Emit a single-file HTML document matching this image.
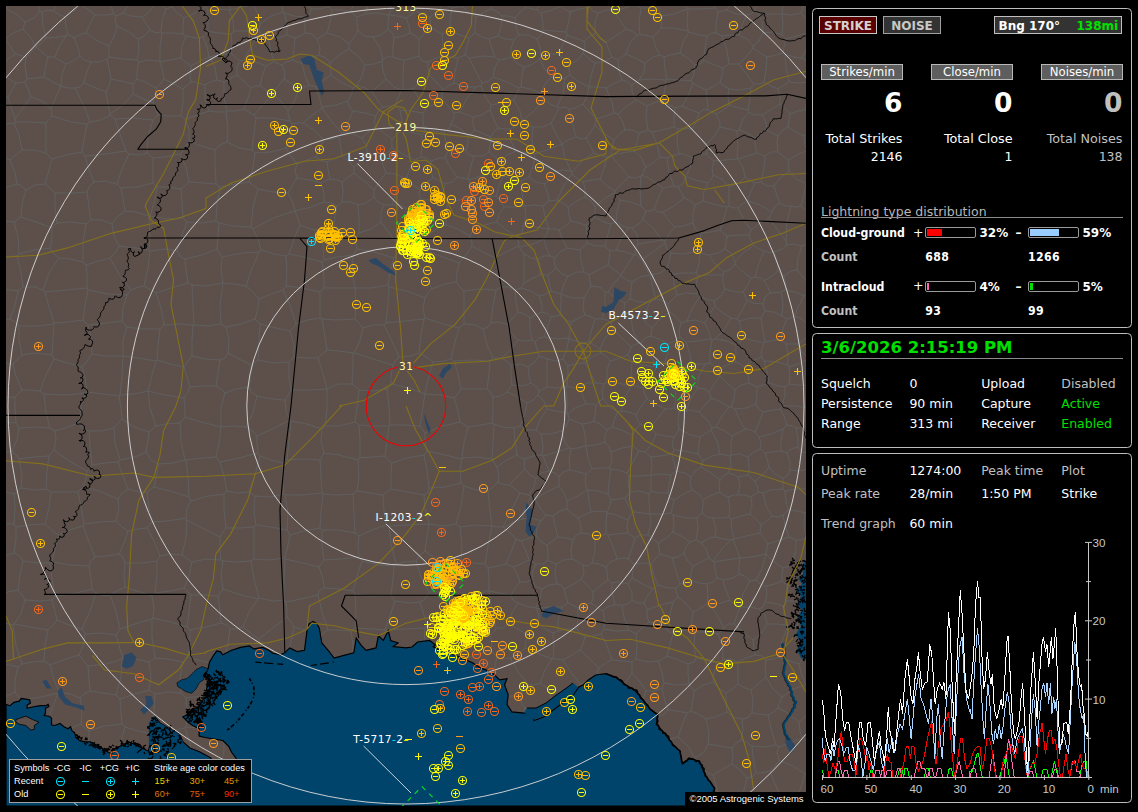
<!DOCTYPE html>
<html><head><meta charset="utf-8"><title>Lightning</title>
<style>
html,body{margin:0;padding:0;background:#000;}
body{width:1138px;height:812px;position:relative;overflow:hidden;font-family:'DejaVu Sans','Liberation Sans',sans-serif;}
.t{position:absolute;white-space:nowrap;line-height:1;}
.b{position:absolute;}
.btn{text-align:center;white-space:nowrap;}
.hr{position:absolute;height:1px;background:#8c8c8c;}
#map{position:absolute;left:6px;top:6px;}
#legend{position:absolute;left:9px;top:759px;width:241px;height:42px;background:#000;border:1px solid #a0a0a0;}
#copy{position:absolute;left:685px;top:792px;width:121px;height:14px;background:#000;}
</style></head><body>
<svg id="map" width="800" height="800" viewBox="6 6 800 800">
<rect x="6" y="6" width="800" height="800" fill="#5d504b"/>
<path d="M248 696L234 694L223 693M248 696L250 712L252 727M252 727L238 730L224 736M224 736L220 731L215 729M215 729L220 711L223 693M5 39L-0 37L-5 36M5 39L10 46L15 54M15 54L5 61L-4 69M221 623L220 610L218 596M221 623L206 627L190 630M218 596L205 595L191 595M191 595L189 612L187 627M190 630L187 627M230 629L236 629L243 627M230 629L227 625L221 623M243 627L249 612L258 599M218 596L223 589M223 589L241 595L258 599M287 617L287 610L286 602M287 617L273 628L259 639M259 639L252 634L243 627M259 598L258 599M259 598L273 601L284 600M284 600L286 602M230 629L228 643L225 658M225 658L239 663L254 667M259 639L262 650L265 657M254 667L259 662L265 657M314 664L301 663L287 662M314 664L316 650L322 634M322 634L308 631L294 627M294 627L291 642L286 661M286 661L287 662M287 617L292 623L294 627M265 657L277 658L286 661M250 695L252 682L254 667M250 695L265 693L284 695M284 695L287 680L287 662M324 731L325 714L323 696M324 731L321 735M290 702L307 699L323 696M290 702L289 714L285 728M285 728L302 733L321 735M323 696L323 696M290 702L285 699L284 695M314 664L315 665M323 696L318 682L315 665M259 757L261 744L261 733M259 757L274 766L289 774M289 774L294 767M294 767L287 750L283 730M261 733L272 731L283 730M248 696L250 695M252 727L256 729L261 733M285 728L283 730M287 790L308 797L325 800M287 790L289 781L289 774M294 767L309 761L321 757M325 800L322 779L321 757M359 766L357 746L354 729M359 766L359 766M324 731L337 730L354 729M321 735L323 745L322 756M359 766L340 760L322 756M321 757L322 756M357 831L358 815L357 798M325 824L325 812L325 800M325 800L338 796L351 791M357 798L354 794L351 791M290 832L286 813L283 795M287 790L283 795M325 800L325 800M359 766L356 778L351 791M610 792L608 780L604 769M610 792L622 789L629 789M629 789L636 783L643 774M643 774L627 768L609 764M604 769L609 764M549 691L552 702L554 712M549 691L561 691L576 689M554 712L559 715L566 714M566 714L572 710L576 706M576 706L576 698L576 689M620 709L626 725L632 742M620 709L613 705M632 742L626 745L617 748M617 748L608 740L596 729M596 729L597 725L599 717M599 717L606 711L613 705M127 327L123 340L123 356M127 327L122 321M123 356L123 356M123 356L106 356L92 354M92 354L91 338L88 325M122 321L107 323L88 325M49 456L33 457L19 459M49 456L47 472L46 489M19 459L22 475L21 488M46 489L35 490L21 488M193 763L187 768M193 763L190 744L185 728M187 768L170 764L155 763M154 761L155 763M154 761L155 749L155 735M185 728L171 731L155 735M125 727L120 743L116 763M125 727L138 731L153 734M116 763L119 767M119 767L135 763L154 761M153 734L155 735M188 657L183 662M188 657L201 661L216 664M183 662L180 677L181 693M216 664L217 677L220 692M220 692L202 696L186 698M181 693L186 698M225 658L220 661L216 664M190 630L190 643L188 657M155 658L168 659L183 662M155 658L149 662M149 662L151 677L149 690M149 690L155 694M155 694L168 692L181 693M223 693L220 692M215 729L201 728L186 727M186 727L187 714L186 698M185 728L186 727M153 734L154 712L155 694M95 557L91 561L89 566M95 557L89 542L83 526M83 526L72 529L59 535M59 535L55 549L52 562M89 566L71 565L52 562M155 658L152 637L152 619M187 627L171 622L153 618M152 619L153 618M5 39L15 32L23 29M6 9L2 12L-4 16M6 9L16 14L25 22M23 29L25 22M26 57L32 51L36 47M26 57L19 55L15 54M23 29L31 38L36 47M27 79L25 66L26 57M27 79L36 78L44 77M48 57L45 69L44 77M48 57L44 54L36 47M36 47L36 47M6 9L6 -0L10 -8M433 362L428 358L419 353M433 362L428 379L425 394M419 353L411 356L399 357M391 384L409 388L425 394M391 384L391 376L393 365M393 365L396 360L399 357M425 394L425 394M387 389L389 407L390 425M387 389L391 384M390 425L404 425L420 426M425 394L422 412L420 426M123 356L138 358L156 361M148 391L148 391M148 391L134 394L120 395M123 356L122 377L120 395M148 391L152 375L156 361M160 329L158 346L157 360M160 329L142 329L127 327M156 361L157 360M27 79L25 82M44 77L51 81L61 86M61 86L55 99L51 109M25 82L28 89L31 97M51 109L42 101L31 97M260 324L276 328L290 331M260 324L255 319M290 331L294 327L296 324M296 324L290 305L283 290M283 290L269 295L259 299M255 319L258 308L259 299M160 329L164 325M184 367L170 364L157 360M184 367L189 360L192 356M192 356L192 341L193 325M164 325L180 324L193 325M354 353L360 341L363 328M354 353L373 359L393 365M399 357L391 339L384 325M363 328L373 325L384 325M372 92L378 101L383 107M372 92L378 86L386 79M395 105L391 106L383 107M395 105L399 96L401 90M401 90L394 87L386 79M395 105L400 110M413 88L419 99L427 107M413 88L407 90L403 89M427 107L423 113M403 89L401 90M400 110L411 111L423 113M413 88L422 82L430 76M427 107L436 104L442 100M442 100L442 95L443 90M430 76L437 83L443 90M285 558L288 545L290 535M285 558L268 560L254 559M290 535L287 530M287 530L271 527L256 525M256 525L254 527M254 527L254 541L254 559M285 558L285 559M259 598L254 579L251 561M285 559L284 579L284 600M254 559L251 561M223 589L221 575L223 561M251 561L236 562L223 561M185 460L173 463L158 464M185 460L181 441L180 423M180 423L166 424L156 426M146 452L148 440L149 432M146 452L151 460L158 464M149 432L156 426M147 492L149 509L152 522M147 492L154 487M154 487L170 491L189 497M152 522L167 521L186 518M186 518L187 508L191 501M191 501L189 497M120 460L135 457L146 452M120 460L118 462M128 489L123 476L118 462M128 489L139 492L147 492M158 464L157 474L154 487M186 460L188 477L189 497M186 460L185 460M283 795L270 798L253 798M256 832L255 816L253 798M123 795L137 794L154 790M123 795L125 813L126 828M159 795L154 790M159 795L158 812L154 831M119 767L118 777L117 791M117 791L123 795M155 763L155 775L154 790M89 795L90 813L92 833M89 795L103 792L117 791M187 768L184 781L184 795M184 795L170 796L159 795M56 830L57 815L61 797M89 795L84 793M84 793L71 794L61 797M50 665L54 680L59 692M50 665L66 659L79 655M79 655L84 661L88 666M88 666L89 678L90 691M59 692L71 694L80 698M90 691L85 693L80 698M122 659L107 664L88 666M122 659L121 677L116 695M90 691L103 693L116 695M125 727L122 724M149 690L135 694L120 699M122 724L121 713L120 699M149 662L135 659L123 658M123 658L122 659M120 699L116 695M419 353L421 335L424 319M384 325L386 323M424 319L405 321L386 323M461 389L457 395L454 398M461 389L458 374L454 361M433 362L444 361L451 359M454 398L441 395L425 394M454 361L451 359M461 389L473 389L487 389M487 389L489 374L490 361M454 361L473 360L490 361M464 324L459 328M464 324L464 308L464 291M459 328L443 324L425 318M464 291L460 287L456 282M456 282L445 284L432 289M425 318L423 309L425 298M432 289L428 293L425 298M483 329L487 345L493 358M483 329L475 325L464 324M451 359L455 342L459 328M490 361L493 358M491 323L493 306L496 290M491 323L488 327L483 329M496 290L479 289L464 291M424 319L425 318M411 248L414 247M411 248L421 268L432 289M414 247L435 254L459 263M459 263L457 272L456 282M389 287L388 304L386 323M389 287L407 291L425 298M504 207L500 200L496 196M504 207L499 214L497 222M496 196L485 197L473 198M473 198L473 215L473 231M473 231L484 225L497 222M599 668L590 659L580 650M599 668L596 675L593 682M580 684L585 682L593 682M580 684L570 671L563 660M563 660L572 655L580 650M612 660L607 662L599 668M612 660L622 661L632 662M632 673L632 668L632 662M632 673L621 689L612 703M612 703L604 691L593 682M576 706L586 711L599 717M576 689L580 684M613 705L612 703M359 390L357 407L355 422M359 390L373 391L387 389M389 426L390 425M389 426L373 426L359 425M359 425L355 422M606 800L596 803L583 803M606 800L609 809L615 818M583 803L578 813L576 819M566 714L572 725L576 739M596 729L589 735L581 739M576 739L581 739M617 748L614 757L609 764M604 769L601 769L594 766M581 739L588 753L594 766M606 800L609 795L610 792M583 803L578 799L574 792M574 792L574 783L575 777M594 766L584 773L575 777M669 763L678 764L688 768M669 763L659 766L648 769M688 768L684 783L679 797M648 769L647 772M647 772L654 783L664 797M664 797L672 800M679 797L672 800M702 807L710 804L719 798M702 807L692 802L679 797M694 763L688 768M694 763L702 770L713 775M719 798L716 785L713 775M632 742L640 744M640 744L642 757L648 769M643 774L647 772M629 789L637 799L641 808M641 808L652 801L664 797M515 796L516 797M515 796L502 796L491 797M516 797L512 813L505 830M491 797L492 814L492 833M516 797L524 798M524 798L524 813L528 829M541 776L550 769L559 763M541 776L534 769L525 764M525 764L528 752L533 741M559 748L560 755L559 763M559 748L550 745L543 738M543 738L538 739L533 741M574 792L559 793L544 797M575 777L567 768L559 763M544 797L540 793M540 793L542 785L541 776M511 768L518 767L525 764M511 768L513 782L515 796M524 798L532 795L540 793M576 739L567 744L559 748M546 720L551 718L554 712M546 720L543 730L543 738M667 829L668 814L672 800M702 807L701 814L702 822M14 494L18 491L21 488M14 494L-2 490L-15 486M12 451L-2 454L-16 456M12 451L17 456L19 459M48 630L30 627L14 624M48 630L45 645L44 661M44 661L32 662L22 664M22 664L16 646L13 625M13 625L14 624M14 524L16 527M14 524L-4 523L-23 523M16 527L16 540L14 553M14 553L-1 558L-16 562M14 494L15 508L14 524M51 492L49 507L45 524M51 492L46 489M45 524L29 525L16 527M120 395L119 396M92 354L88 360L82 367M82 367L85 378L87 392M119 396L104 394L87 392M148 391L150 408L156 426M149 432L134 427L122 419M119 396L121 408L122 419M120 460L115 443L114 428M114 428L119 422L122 419M122 321L123 308L127 295M88 325L83 320M83 320L85 305L88 290M88 290L108 294L127 295M40 391L31 390L22 390M40 391L44 394M44 394L46 413L50 428M15 397L20 392L22 390M15 397L15 409L16 423M50 428L35 427L19 428M16 423L19 428M22 355L18 359L13 364M22 355L35 353L52 355M52 355L54 359M54 359L46 375L40 391M13 364L16 376L22 390M54 359L68 363L82 367M87 392L86 393M86 393L67 395L44 394M-19 396L-1 398L15 397M-7 360L1 362L13 364M-21 422L-1 421L16 423M12 451L17 440L19 428M54 450L56 440L55 431M54 450L69 461L87 471M55 431L65 428L79 423M87 471L92 465M92 465L90 447L89 431M89 431L83 429L79 423M49 456L54 450M50 428L55 431M86 393L81 406L79 423M118 462L105 463L92 465M114 428L101 431L89 431M23 561L38 563L50 563M23 561L20 575L18 590M50 563L52 579L55 596M18 590L22 595L25 600M25 600L40 601L52 600M52 600L55 596M59 535L52 531L45 524M52 562L50 563M14 553L20 556L23 561M-15 594L3 593L18 590M89 566L91 579L92 589M92 589L72 594L55 596M-13 622L1 622L13 625M14 624L21 614L25 600M57 620L55 611L52 600M57 620L53 625L48 630M96 593L104 596L110 595M96 593L90 611L82 629M110 595L116 611L120 629M82 629L85 634M85 634L100 633L116 635M116 635L120 629M57 620L69 625L82 629M92 589L96 593M50 665L44 661M79 655L83 646L85 634M123 658L119 646L116 635M152 619L138 623L120 629M125 563L142 563L157 561M125 563L124 576L125 587M125 587L140 592L152 596M157 561L157 575L155 593M152 596L155 593M119 554L123 557L125 563M119 554L124 543L128 531M147 528L138 529L128 531M147 528L154 541L160 556M160 556L157 561M95 557L106 556L119 554M110 595L119 590L125 587M153 618L154 608L152 596M191 595L187 591L184 588M184 588L170 591L155 593M46 38L43 26L42 12M46 38L57 37L66 36M68 34L66 36M68 34L66 27L65 17M65 17L60 15L54 11M42 12L47 10L54 11M25 22L34 18L40 11M36 47L42 43L46 38M40 11L42 12M48 57L55 57M55 57L59 47L66 36M40 11L37 -0L31 -11M61 -15L57 -4L54 11M81 -9L81 -0L81 5M81 5L89 10L95 15M95 15L106 15L114 14M114 14L110 4L108 -6M65 17L74 11L81 5M403 89L403 73L404 60M404 60L412 58L419 56M430 76L428 68L428 62M419 56L422 61L428 62M454 398L458 411L460 422M420 426L425 433M460 422L443 426L425 433M148 391L165 395L184 398M180 423L185 417M185 417L185 409L184 398M186 460L202 458L216 457M216 457L219 443L221 427M185 417L201 422L221 427M184 367L187 377L190 387M190 387L188 392L184 398M192 356L205 359L220 360M226 327L221 324M226 327L229 340L228 353M221 324L209 326L194 325M193 325L194 325M228 353L225 358L220 360M190 387L202 386L216 386M220 360L218 373L216 386M221 427L221 427M221 427L221 408L225 393M216 386L221 389L225 393M84 524L81 507L78 492M84 524L100 522L116 521M116 521L119 508L118 499M118 499L99 491L83 487M78 492L83 487M51 492L63 492L78 492M83 526L84 524M128 531L122 527L116 521M147 528L152 522M128 489L122 493L118 499M87 471L86 479L83 487M25 82L16 83M-4 71L6 77L16 83M17 184L15 173L10 160M17 184L1 189L-15 192M-11 154L1 156L10 160M94 182L89 170L85 156M94 182L105 181L117 184M85 156L105 154L126 151M117 184L122 169L129 154M126 151L129 154M112 224L117 217L125 211M112 224L102 220L91 220M125 211L123 199L121 188M121 188L117 184M91 220L89 207L87 192M87 192L89 187L94 182M121 188L137 187L153 183M153 183L153 172L153 158M153 158L147 153M147 153L139 155L129 154M115 119L120 134L126 151M115 119L133 118L153 120M153 120L148 137L147 153M286 256L289 254M286 256L274 254L261 250M261 250L258 239L253 229M253 229L273 218L295 211M289 254L294 239L300 225M300 225L298 219L295 211M258 189L253 207L251 227M258 189L273 192L288 193M288 193L293 203L295 211M253 229L251 227M295 211L295 211M255 319L241 324L226 327M221 324L220 305L223 283M259 299L251 290L246 286M223 283L234 284L246 286M286 256L287 272L286 286M261 250L259 252M286 286L283 290M259 252L251 271L246 286M758 13L768 14L782 14M758 13L762 21L763 33M782 14L783 24L782 35M782 35L773 32L763 33M737 159L738 145L737 131M737 159L738 159M737 131L739 130M739 130L747 133L755 138M755 138L755 145L757 153M738 159L747 156L757 153M767 130L760 134L755 138M767 130L772 133L778 136M757 153L765 156M765 156L771 152L778 152M778 152L777 142L778 136M258 189L253 185L249 182M288 193L292 186L297 178M249 182L253 167L255 153M286 148L271 152L255 153M286 148L290 155L297 164M297 178L295 171L297 164M295 211L311 207L324 202M297 178L310 180L321 183M324 202L324 193L321 183M355 319L356 302L355 288M355 319L337 320L322 319M355 288L355 288M355 288L338 288L324 288M324 288L320 292M320 292L320 306L320 318M322 319L320 318M363 328L359 323L355 319M388 285L371 288L355 288M388 285L389 287M289 254L304 257L322 262M322 262L324 277L324 288M286 286L302 288L320 292M296 324L308 320L320 318M504 207L514 207L524 206M496 196L499 186L503 176M503 176L512 179L521 181M521 181L522 193L524 206M586 225L578 223L571 221M586 225L587 236L587 243M571 221L565 226L559 230M587 243L582 248L580 250M580 250L574 249L567 248M567 248L562 238L559 230M414 247L426 236L439 227M459 263L467 254L472 246M472 246L472 242L470 236M470 236L458 229L446 225M439 227L446 225M535 157L533 166L529 177M535 157L534 154M534 154L534 153M534 153L527 153L516 151M503 176L502 173M502 173L502 167L501 161M521 181L529 177M516 151L507 155L501 161M383 107L379 110L376 116M376 116L374 122L376 126M376 126L384 133L392 139M400 110L402 121L401 131M392 139L396 135L401 131M423 113L423 122L425 132M425 132L422 135M401 131L410 132L422 135M425 132L434 131L444 133M431 161L439 158L445 158M431 161L427 158L421 157M444 133L446 142L450 150M445 158L447 153L450 150M421 157L422 145L422 135M454 83L455 72L458 58M454 83L466 87L476 87M476 87L481 86M458 58L465 55M482 83L475 70L469 58M482 83L481 86M465 55L469 58M443 90L448 86L454 83M442 56L434 59L428 62M442 56L449 57L458 58M221 560L220 550L220 537M221 560L206 559L192 562M220 537L204 529L187 520M187 520L186 538L182 555M182 555L186 558L192 562M254 527L240 528L226 528M226 528L223 532L220 537M223 561L221 560M184 588L189 576L192 562M224 494L208 496L191 501M224 494L224 510L226 528M186 518L187 520M160 556L170 554L182 555M324 560L340 559L359 557M324 560L321 564L319 567M319 567L323 579L324 588M362 561L359 557M362 561L357 576L353 591M353 591L339 589L324 588M286 602L301 599L318 595M322 634L328 630M328 630L322 612L318 595M285 559L303 563L319 567M318 595L319 591L324 588M259 757L253 762L249 766M253 798L253 798M253 798L249 781L249 766M224 736L224 750L222 761M249 766L236 762L222 761M193 763L204 764L216 766M222 761L216 766M219 830L222 815L224 801M188 799L205 798L219 796M188 799L185 816L185 834M219 796L224 801M253 798L237 801L224 801M184 795L188 799M216 766L216 782L219 796M116 763L101 761L88 757M122 724L104 726L89 731M88 757L89 743L89 731M84 793L82 778L83 761M88 757L83 761M80 698L82 713L81 724M89 731L86 729L81 724M83 761L69 761L56 758M81 724L67 730L54 733M56 758L57 747L54 733M59 692L58 693M58 693L51 711L46 727M46 727L50 729L54 733M18 667L15 680L15 692M18 667L22 664M58 693L41 697L22 700M15 692L17 695L22 700M46 727L37 727L26 726M22 700L23 714L26 726M805 604L797 601L787 601M805 604L800 616L797 626M797 626L793 628L788 626M784 606L787 601M784 606L784 614L786 625M786 625L788 626M539 356L535 362L528 367M539 356L537 349L535 342M535 342L532 340M532 340L524 341L518 340M528 367L521 364L511 365M518 340L510 351L501 358M511 365L505 360L501 358M518 312L512 319L507 324M518 312L525 314L530 318M507 324L511 333L518 340M530 318L530 330L532 340M531 383L523 386L512 385M531 383L529 376L528 367M512 385L511 375L511 365M491 323L498 322L507 324M493 358L501 358M487 389L490 391L493 397M493 397L501 396L507 392M512 385L509 389L507 392M553 659L556 659L563 660M553 659L552 659M549 691L546 687L540 683M552 659L545 670L540 683M546 720L536 715L525 708M525 708L522 704L520 696M520 696L524 689L529 685M540 683L533 685L529 685M552 659L539 654L525 648M529 685L519 673L510 658M510 658L518 654L525 648M553 633L554 645L553 659M553 633L544 628L538 623M538 623L531 629L526 634M526 634L526 642L525 648M362 561L379 565L394 566M394 566L393 579L391 595M353 591L355 594M391 595L372 596L355 594M425 628L427 626M425 628L404 629L385 630M395 601L390 616L385 630M395 601L409 603L420 602M427 626L424 615L420 602M416 561L404 562L396 564M416 561L421 577L429 592M394 566L396 564M391 595L395 601M429 592L425 599L420 602M424 455L427 451M424 455L427 471L429 488M429 488L445 487L461 483M427 451L445 455L462 459M461 483L460 469L462 459M547 359L539 356M547 359L547 374L547 387M531 383L537 387L539 391M547 387L539 391M527 403L516 396L507 392M527 403L533 400L538 395M538 395L539 391M612 660L607 646L601 634M580 650L583 644L585 637M585 637L593 636L601 634M716 114L720 122L720 127M716 114L708 110M692 129L699 137L707 144M692 129L697 121L699 113M720 127L716 134L707 144M708 110L704 109L699 113M643 318L635 317L631 318M643 318L647 309L650 302M650 302L639 302L630 299M623 315L631 318M623 315L624 309L625 303M625 303L630 299M789 367L790 375L789 384M789 367L798 364L809 359M789 384L799 385L806 386M806 386L813 374L819 363M809 359L814 359L819 363M819 446L815 448L809 453M831 472L821 470L810 466M809 453L812 459L810 466M694 763L695 758M695 758L688 746L678 737M669 763L669 752L666 740M678 737L674 738L666 740M640 744L647 740L651 735M651 735L657 737L666 740M632 662L636 659M636 659L637 645L636 634M604 629L601 634M604 629L616 631L629 630M636 634L629 630M695 758L704 752L708 744M708 744L709 733L706 719M687 713L682 725L678 737M687 713L691 711M691 711L698 714L706 719M747 778L741 771L732 764M747 778L752 777L756 773M756 773L753 758L752 746M732 764L733 756L732 748M732 748L736 743L741 740M741 740L746 742L752 746M742 799L744 790L747 778M742 799L732 798L726 800M726 800L719 798M713 775L721 770L732 764M751 808L748 805L742 799M751 808L760 807L773 802M773 802L778 800L781 797M781 797L775 784L770 771M770 771L761 773L756 773M708 744L720 746L732 748M797 797L802 804M797 797L801 787L805 774M802 804L816 805L827 804M805 774L812 771L816 767M781 797L790 797L797 797M770 771L774 767L779 760M779 760L793 766L805 774M802 804L802 815L801 823M830 731L823 737L812 742M812 742L813 755L816 767M511 768L505 763L499 762M533 741L526 738M499 762L512 750L526 738M525 708L522 721L518 732M526 738L521 734L518 732M425 551L427 537L429 524M425 551L438 560L454 565M429 524L429 524M429 524L443 526L456 524M460 527L462 544L461 561M460 527L456 524M454 565L461 561M416 561L420 555L425 551M396 564L391 544L389 526M389 526L408 525L429 524M429 592L441 592L450 590M450 590L452 577L454 565M429 488L428 493L424 495M461 483L464 486M464 486L461 506L456 524M424 495L425 509L429 524M485 564L474 563L461 561M485 564L488 546L492 526M492 526L492 526M492 526L475 525L460 527M464 486L476 490L488 491M488 491L490 510L492 526M359 557L358 545L359 536M389 526L386 525M359 536L372 530L386 525M287 530L288 512L285 495M256 525L254 512L255 496M285 495L284 494M284 494L271 497L255 496M641 808L638 813L637 816M544 797L548 808L550 817M359 766L369 763L383 764M354 729L357 725M357 725L377 729L393 736M383 764L388 750L393 736M434 699L426 716L421 734M434 699L443 701L455 702M455 702L457 713L457 725M457 725L441 731L427 740M421 734L427 740M491 797L490 796M465 829L462 814L459 797M459 797L461 794M490 796L475 797L461 794M751 808L751 816M726 800L723 814L724 828M18 667L-2 662L-19 660M15 692L1 699L-15 704M18 291L23 287M18 291L15 305L10 319M23 287L35 287L43 290M45 292L49 307L54 323M45 292L43 290M19 326L17 323L10 319M19 326L37 326L54 324M54 324L54 323M-10 325L-2 322L10 319M-15 284L3 289L18 291M83 320L68 322L54 323M87 288L88 290M87 288L66 290L45 292M83 262L70 259L59 258M83 262L86 265M59 258L49 273L43 290M87 288L87 276L86 265M22 355L19 340L19 326M52 355L53 338L54 324M52 228L57 223M52 228L36 222L21 217M57 223L55 208L55 193M21 217L22 204L26 190M26 190L35 185L45 184M45 184L51 189L55 193M83 262L83 243L86 224M59 258L53 253L50 248M50 248L52 238L52 228M86 224L72 222L57 223M91 220L86 224M87 192L72 193L55 193M85 156L82 152M82 152L66 155L52 159M52 159L49 170L45 184M-14 257L-0 257L17 256M19 254L17 256M19 254L18 237L14 222M14 222L2 221L-10 219M23 287L21 273L17 256M50 248L34 250L19 254M21 217L14 222M17 184L20 185L26 190M112 224L114 236L119 246M86 265L98 261L110 258M119 246L116 252L110 258M127 295L131 290M110 258L120 276L131 290M410 33L409 26L406 18M410 33L414 35L419 39M419 39L423 35L431 28M416 11L412 14L406 18M416 11L421 14L430 17M430 17L430 22L431 28M442 56L443 44L442 34M419 56L419 47L419 39M442 34L435 30L431 28M758 13L755 11M782 14L782 14M782 14L783 3L782 -11M756 -4L756 4L755 11M493 77L507 82L519 88M493 77L489 81L482 83M491 105L485 96L481 86M491 105L504 102L514 100M519 88L516 95L514 100M510 129L505 129L498 128M510 129L518 125L522 120M498 128L494 120L490 110M491 105L490 110M514 100L520 111L522 120M495 57L492 49L489 39M495 57L499 60M499 60L505 59L511 57M511 57L511 48L514 40M514 40L505 39L498 36M498 36L489 39M493 77L495 67L499 60M469 58L484 56L495 57M416 11L415 3L413 -8M430 17L436 13L443 5M443 5L442 0L440 -5M392 -8L392 4L389 15M389 15L389 15M389 15L398 16L406 18M260 324L259 341L258 360M228 353L241 360L251 365M258 360L251 365M225 393L236 389L249 387M251 365L251 375L249 387M221 427L233 426L246 427M246 427L253 413L257 396M249 387L251 392L257 396M359 390L355 386L352 384M355 422L339 426L325 426M325 426L327 409L327 389M327 389L338 384L352 384M354 353L353 353M322 319L325 337L327 350M327 350L339 351L353 353M353 353L353 367L352 384M320 460L303 459L287 460M320 460L324 453M324 453L321 441L322 429M322 429L307 424L291 421M291 421L289 441L287 460M246 427L253 431L257 436M285 400L272 399L257 396M285 400L286 412L290 420M290 420L274 428L257 436M322 493L321 477L320 460M322 493L303 495L285 495M284 494L282 478L283 463M287 460L283 463M16 83L12 90L8 97M8 97L-3 98L-12 99M31 97L23 108L15 119M8 97L11 107L15 119M55 57L59 60L66 64M61 86L61 86M66 64L62 74L61 86M206 7L195 13L184 18M206 7L204 -0L202 -6M182 -11L176 -3L172 7M184 18L176 12L172 7M136 -8L130 2L123 13M114 14L116 16M123 13L116 16M181 116L168 116L158 115M181 116L183 101L183 89M183 89L172 83L164 79M158 115L155 108L153 103M153 103L155 95L156 88M156 88L161 83L164 79M185 119L181 116M185 119L189 129L189 141M189 141L186 148L180 154M153 120L158 115M180 154L165 157L153 158M209 111L205 99L205 85M209 111L195 116L185 119M205 85L196 82L191 82M191 82L185 87L183 89M133 94L133 89L133 84M133 94L143 99L153 103M133 84L137 79M137 79L145 82L156 88M253 5L258 14L260 24M253 5L241 7L230 10M234 31L233 19L229 10M234 31L246 31L259 29M260 24L259 29M230 10L229 10M255 -3L253 5M283 12L281 -0L282 -9M283 12L271 16L260 24M229 -18L229 -4L230 10M231 34L234 31M231 34L218 33L208 31M208 11L208 22L208 31M208 11L217 9L229 10M231 53L236 58L241 61M231 53L232 45L231 34M241 61L244 60M260 32L251 47L244 60M260 32L259 29M206 7L208 11M299 -10L303 0L311 9M329 -11L330 -3L329 7M311 9L318 9L329 7M351 12L354 1L355 -12M351 12L343 10L332 10M332 10L329 7M362 138L367 133L376 126M362 138L353 134L345 132M376 116L365 113L353 111M345 132L348 122L353 111M372 92L365 88L357 85M357 85L353 88M353 88L352 93L348 101M353 111L349 106L348 101M209 111L216 112L226 112M215 150L201 146L189 141M215 150L220 145L227 142M227 142L228 128L226 112M46 123L46 138L46 153M46 123L29 122L15 122M15 122L14 123M14 123L19 135L22 150M22 150L34 150L46 153M87 124L84 139L82 152M87 124L71 122L52 116M52 159L46 153M52 116L46 123M51 109L52 116M15 119L15 122M-11 128L3 124L14 123M10 160L17 154L22 150M164 325L161 308L156 293M131 290L139 287L144 286M156 293L151 290L144 286M222 257L221 270L223 283M222 257L220 254L217 249M217 249L202 255L185 259M223 283L206 286L192 285M185 259L186 270L188 283M192 285L188 283M223 283L223 283M259 252L242 253L222 257M251 227L233 226L219 223M219 223L218 236L217 249M194 325L193 305L192 285M156 293L171 288L188 283M249 182L236 184L220 187M219 223L216 221M216 221L217 203L220 187M215 150L215 166L216 184M255 153L252 150M227 142L239 148L252 150M220 187L216 184M180 154L186 167L189 182M216 184L204 183L189 182M153 183L157 187M157 187L169 187L181 189M189 182L184 187L181 189M801 13L805 18L812 27M801 13L804 4L805 -7M782 14L792 15L801 13M786 39L782 35M786 39L800 35L811 32M812 27L812 32M811 32L812 32M820 38L816 34L812 32M729 89L724 86L720 82M729 89L728 96L729 105M716 114L722 111L729 105M708 110L707 99L706 90M720 82L714 86L706 90M682 106L691 110L699 113M682 106L688 96L693 83M706 90L698 86L693 83M674 127L678 129M674 127L662 130L652 132M678 129L677 142L679 154M652 132L657 144L660 157M679 154L672 156L667 158M660 157L667 158M675 108L674 118L674 127M675 108L682 106M692 129L684 128L678 129M778 89L780 98L780 104M778 89L771 86L764 82M780 104L772 109L762 115M764 82L760 84L754 84M762 115L754 115L749 112M754 84L751 88M751 88L750 98L748 110M748 110L749 112M790 114L786 109L780 104M790 114L789 120L788 127M767 130L766 122L762 115M788 127L782 131L778 136M739 130L743 119L749 112M729 89L739 90L751 88M729 105L739 108L748 110M720 127L729 129L737 131M738 159L743 167L745 177M765 156L764 168L761 182M761 182L755 183M745 177L749 180L755 183M778 152L784 157L789 160M788 127L794 131L804 136M789 160L798 154L807 151M804 136L805 145L807 151M811 114L813 118L814 125M811 114L805 110M790 114L798 111L805 110M804 136L810 131L814 125M819 178L812 179L806 183M789 160L788 164L789 171M812 153L807 151M806 183L796 179L789 171M761 182L767 186L774 186M789 171L780 178L774 186M772 212L775 206L780 203M772 212L760 205L748 201M755 183L750 193L748 201M774 186L777 196L780 203M297 164L307 160L316 157M321 183L325 181L330 179M330 179L328 169L327 162M316 157L322 161L327 162M354 167L354 173M354 167L347 160L342 156M354 173L347 178L342 182M342 182L337 180L330 179M327 162L333 159L342 156M381 222L381 212L384 205M381 222L392 237L403 250M408 210L410 229L411 247M408 210L401 205L392 205M392 205L384 205M411 247L403 250M411 248L411 247M439 227L429 214L420 202M420 202L414 206L408 210M394 258L397 254L403 250M394 258L390 272L388 285M374 197L378 202L384 205M374 197L366 203L358 205M381 222L371 229L359 233M358 205L359 220L359 233M354 173L364 181L374 190M342 182L343 191L342 202M374 190L374 197M358 205L351 202L342 202M324 202L332 203L337 206M342 202L337 206M544 337L539 338L535 342M544 337L548 326L551 317M530 318L537 314L542 312M542 312L548 314L551 317M572 174L564 185L557 200M572 174L572 172M571 171L572 172M571 171L562 170L556 172M556 172L550 179L544 184M544 184L548 194L549 201M549 201L557 200M568 207L577 201L585 197M568 207L563 203L557 200M583 182L585 188L585 197M583 182L578 179L572 174M594 153L599 155L607 157M594 153L583 160L572 172M607 157L604 169L600 179M600 179L591 180L583 182M535 157L546 166L556 172M534 154L547 150L562 144M562 144L562 144M562 144L565 158L571 171M529 177L536 182L544 184M543 206L535 205L525 206M543 206L549 201M524 206L525 206M571 221L569 215L568 207M543 206L545 217L549 229M549 229L554 229L559 230M611 155L607 157M611 155L611 155M611 155L620 166L629 177M600 179L607 186L615 191M629 177L622 183L615 191M586 225L590 222L595 217M585 197L590 200L595 207M595 217L595 211L595 207M615 191L615 193M595 207L605 198L615 193M473 198L473 197M470 236L473 231M446 225L446 212L448 203M448 203L459 200L473 197M502 173L484 175L469 180M473 197L470 188L469 180M586 138L591 132L595 125M586 138L582 139L576 137M576 137L572 122L569 109M596 119L595 125M596 119L589 111L583 104M583 104L575 108L569 109M594 153L590 145L586 138M611 155L612 147L614 140M614 140L603 133L595 125M562 144L568 140L576 137M516 151L511 141L510 129M501 161L495 157L489 152M498 128L493 133L491 137M489 152L490 145L491 137M468 179L469 180M468 179L471 166L474 156M489 152L483 156L474 156M445 158L450 167L457 177M450 150L458 149L466 150M457 177L462 178L468 179M474 156L469 155L466 150M473 117L465 114L460 112M473 117L473 125L475 130M475 130L468 136M468 136L461 129L451 124M460 112L454 113M454 113L454 117L451 124M490 110L482 115L473 117M476 87L467 98L460 112M491 137L484 134L475 130M466 150L468 144L468 136M444 133L449 128L451 124M442 100L449 107L454 113M381 157L383 165L386 173M381 157L387 153L392 148M392 148L405 155L415 160M386 173L395 174L404 178M415 160L410 168L407 177M407 177L404 178M368 155L374 155L381 157M368 155L360 162L354 167M374 190L379 182L386 173M362 138L366 146L368 155M392 139L392 148M421 157L415 160M392 205L397 189L404 178M323 696L338 696L351 693M357 725L359 711L360 700M351 693L357 695L360 700M19 764L37 762L53 761M19 764L18 779L17 794M18 794L38 793L56 793M18 794L17 794M56 793L55 777L53 761M27 825L22 812L18 794M61 797L56 793M-15 802L2 799L17 794M56 758L53 761M18 763L16 747L17 735M18 763L-1 764L-18 761M17 735L2 730L-11 727M26 726L20 731L17 735M19 764L18 763M826 609L815 604L808 601M808 601L808 595L806 587M806 587L812 584L821 581M547 359L556 361L563 359M563 359L566 351L569 339M544 337L557 339L569 338M569 338L569 339M560 315L556 316L551 317M560 315L566 320L571 322M569 338L570 331L571 322M560 315L561 304L561 294M584 298L572 298L561 294M584 298L583 308L585 315M571 322L577 319L585 315M427 626L440 625L454 625M450 590L458 598L463 602M463 602L461 609L461 618M461 618L457 621L454 625M527 403L525 413L520 426M547 409L544 401L538 395M547 409L540 420L536 430M536 430L527 430L520 426M462 458L476 457L492 459M462 458L464 443L468 427M492 459L493 441L494 424M468 427L481 425L492 423M492 423L494 424M462 459L462 458M497 467L494 462L492 459M497 467L499 476L498 482M488 491L493 487L498 482M460 422L463 424L468 427M427 451L425 442L425 433M497 467L507 460L517 455M514 428L515 442L517 455M514 428L502 427L494 424M493 397L493 411L492 423M520 426L514 428M463 602L476 595L489 590M485 564L488 568M488 568L489 579L489 590M518 603L512 613L508 624M518 603L513 600L511 595M496 628L503 628L508 624M496 628L492 611L489 591M511 595L499 593L489 591M496 628L495 631L490 635M490 635L476 625L461 618M489 591L489 590M504 528L513 522L522 519M504 528L503 527M503 527L511 511L520 493M522 519L525 508L531 497M520 493L529 495M531 497L529 495M498 482L502 484L509 485M492 526L499 527L503 527M509 485L514 488L520 493M546 515L541 521M546 515L540 508L535 499M541 521L532 518L522 519M535 499L531 497M652 328L651 336M652 328L659 320L670 312M651 336L659 339L668 344M668 344L675 341L680 337M680 337L679 331L681 323M670 312L675 316L681 323M641 343L645 338L651 336M641 343L639 343M639 343L633 331L631 318M643 318L646 323L652 328M668 304L670 312M668 304L662 300L656 299M656 299L650 302M657 366L661 362L665 362M657 366L650 355L641 343M665 362L668 352L668 344M687 321L695 320L705 323M687 321L681 323M705 323L709 332L711 339M711 339L697 341L686 342M686 342L680 337M783 53L776 55L767 57M783 53L784 47L786 39M767 57L760 53L753 48M763 33L759 41L753 46M753 48L753 46M767 57L766 70L764 82M754 84L747 75L739 64M753 48L747 56L739 64M720 82L722 76L723 68M723 68L729 64M739 64L734 64L729 64M827 200L816 206L807 211M806 183L804 195L801 206M807 211L801 206M780 203L785 206L791 206M801 206L796 207L791 206M825 392L818 389L808 388M808 388L809 397L809 408M827 408L818 407L809 408M806 386L808 388M809 408L809 408M809 408L807 417L808 424M808 424L814 425L818 429M824 345L817 340L809 336M809 359L802 352L798 344M798 344L802 341L809 336M826 316L817 321L809 326M809 336L809 333L809 326M700 253L704 254L709 255M700 253L699 251M699 251L700 241L701 233M701 233L711 232L720 230M727 236L724 234L720 230M727 236L726 243L725 249M725 249L718 253L709 255M735 262L732 254L725 249M735 262L735 264M709 255L715 264L724 272M735 264L731 269L724 272M700 253L699 264L696 273M699 251L683 254L671 253M667 268L669 262L671 253M667 268L674 274M696 273L684 273L674 274M668 304L673 299L677 295M656 299L653 289L650 275M650 275L660 273L667 268M674 274L674 284L677 295M654 717L663 715L668 710M654 717L649 711L641 708M668 710L665 701L662 688M641 708L643 699L646 691M646 691L655 691L662 688M687 713L677 711L668 710M651 735L651 727L654 717M620 709L631 709L641 708M632 673L640 682L646 691M718 634L723 647L723 660M718 634L705 632L695 632M695 632L694 645L696 658M696 658L705 660L717 663M723 660L717 663M693 612L692 621L691 629M693 612L699 609L707 604M707 604L710 605M710 605L717 615L724 628M724 628L718 634M691 629L695 632M658 661L662 673L664 683M658 661L661 660L667 656M667 656L676 659L688 664M664 683L676 685L689 684M689 684L688 674L688 664M636 659L648 662L658 661M662 688L664 683M673 634L681 631L691 629M673 634L670 645L667 656M696 658L694 662L688 664M691 711L693 699L694 691M694 691L689 684M713 682L703 685L694 691M713 682L714 673L717 663M767 624L761 634L753 640M767 624L765 615L759 609M734 624L745 634L753 640M734 624L737 615L740 607M740 607L750 607L759 609M784 606L773 603L765 602M767 624L777 624L786 625M759 609L763 607L765 602M650 514L650 514M650 514L643 513L635 512M630 492L639 491L649 494M630 492L625 498M625 498L629 507L635 512M650 514L649 502L649 494M706 719L715 717L727 712M713 682L720 689L726 693M726 693L726 704L727 712M741 740L743 730L742 719M742 719L733 717L727 712M773 802L778 818L783 833M355 533L354 514L353 494M355 533L339 530L322 530M320 528L322 530M320 528L321 512L323 494M323 494L337 495L353 494M324 560L322 546L322 530M359 536L355 533M290 535L304 531L320 528M322 493L323 494M357 491L370 493L383 495M357 491L359 477L358 460M391 489L388 491L383 495M391 489L391 474L392 463M385 456L388 460L392 463M385 456L373 457L360 458M360 458L358 460M386 525L384 511L383 495M353 494L357 491M324 453L339 455L358 460M424 495L408 492L391 489M424 455L407 458L392 463M389 426L387 441L385 456M359 425L360 440L360 458M325 426L322 429M227 491L224 476L220 462M227 491L237 493L249 492M249 492L255 475L260 456M220 462L239 458L258 453M258 453L260 456M224 494L227 491M216 457L220 462M255 496L249 492M283 463L271 460L260 456M257 436L257 443L258 453M291 421L290 420M459 797L444 798L431 800M426 832L428 815L431 800M357 798L375 803L389 807M390 827L389 818L389 807M461 764L461 765M461 764L463 750L466 734M461 765L479 765L494 763M466 734L480 732L493 729M496 762L497 745L495 731M496 762L494 763M495 731L493 729M457 725L460 729L466 734M433 759L429 749L427 740M433 759L448 763L461 764M490 796L491 779L494 763M461 794L463 779L461 765M499 762L496 762M518 732L505 731L495 731M520 696L505 696L493 700M493 700L492 713L493 729M389 15L388 23L388 29M410 33L403 36L394 38M394 38L393 34L388 29M404 60L399 59L393 57M394 38L393 46L393 57M469 38L475 33M469 38L460 35L450 31M475 33L475 26L476 17M450 31L450 20L452 8M476 17L468 12L463 7M463 7L457 7L452 8M465 55L467 47L469 38M489 39L482 37L475 33M442 34L450 31M443 5L448 6L452 8M467 -13L464 -2L463 7M519 88L521 87M511 57L517 63L524 67M521 87L522 75L524 67M562 144L556 134L551 123M569 109L565 107L559 108M559 108L555 116L551 123M534 153L532 139L533 127M551 123L543 127L533 127M522 120L523 120M533 127L526 125L523 120M291 390L289 377L289 362M291 390L310 390L327 389M327 389L323 374L318 358M318 358L307 358L294 357M294 357L289 362M258 360L273 363L289 362M285 400L288 395L291 390M327 389L327 389M327 350L321 355L318 358M290 331L294 345L294 357M75 88L80 87L84 83M75 88L84 106L90 122M84 83L96 88L106 92M106 92L108 105L110 114M90 122L101 120L110 115M110 115L110 114M87 124L90 122M61 86L68 88L75 88M133 94L123 105L110 114M111 79L121 81L133 84M111 79L109 86L106 92M115 119L110 115M139 62L137 72L137 79M139 62L148 60L160 61M164 79L162 69L160 62M160 61L160 62M155 4L162 6L166 9M155 4L149 12L142 17M166 9L162 20L161 32M142 17L147 25L150 30M161 32L155 33L150 30M151 -5L153 -0L155 4M172 7L166 9M123 13L131 16L142 17M184 18L183 24L183 34M183 34L171 33L162 33M162 33L161 32M111 79L109 68L107 59M84 83L86 74L91 62M107 59L100 62L91 62M66 64L73 61L80 56M91 62L84 60L80 56M68 34L74 38M80 56L78 48L74 38M95 15L91 22L86 33M74 38L79 35L86 33M138 39L129 32L117 26M138 39L139 51L137 60M137 60L122 59L109 57M117 26L114 37L109 46M109 46L109 51L109 57M116 16L115 21L117 26M150 30L144 36L138 39M139 62L137 60M162 33L160 47L160 61M107 59L109 57M86 33L96 40L109 46M351 12L357 17M365 14L357 17M365 14L371 -1L376 -14M389 15L376 13L365 14M358 31L364 36L373 37M358 31L354 37L349 44M349 44L349 49M349 49L358 56L365 65M373 37L380 48L383 60M365 65L374 64L382 61M382 61L383 60M357 17L357 23L358 31M388 29L381 35L373 37M332 10L330 22L327 33M327 33L340 37L349 44M393 57L386 57L383 60M386 79L383 71L382 61M357 85L362 76L365 65M286 148L290 137L292 124M252 150L254 133L256 118M256 118L273 118L290 121M292 124L290 121M205 85L210 82L217 80M217 80L224 82M226 112L227 111M227 111L224 97L224 82M210 57L221 54L231 53M210 57L215 68L217 80M241 61L237 66L237 75M224 82L229 79L237 75M177 251L165 249L150 251M177 251L181 238L187 222M149 250L150 251M149 250L150 234L149 216M149 216L150 216M150 216L167 219L183 218M183 218L187 222M144 286L148 268L150 251M185 259L181 257L177 251M216 221L201 223L187 222M119 246L135 248L149 250M125 211L136 212L149 216M157 187L154 203L150 216M181 189L182 203L183 218M811 114L823 111L833 107M805 110L807 99L811 85M811 85L821 89L830 91M323 231L328 228L334 227M323 231L323 246L324 260M334 227L345 232L355 239M324 260L337 257L353 255M355 239L356 242L357 249M353 255L357 249M300 225L310 229L323 231M337 206L335 216L334 227M322 262L324 260M359 233L355 239M355 288L352 272L353 255M394 258L374 252L357 249M496 290L501 287M472 246L483 252L495 258M495 258L498 272L501 287M518 312L516 302L515 290M501 287L509 287L515 290M542 312L542 305L539 296M561 294L561 294M561 294L557 293L551 291M539 296L544 295L551 291M515 290L521 288M539 296L531 291L521 288M568 276L564 284L561 294M568 276L562 274L556 268M551 291L549 283L548 275M556 268L553 271L548 275M580 250L581 261L584 272M567 248L560 252L555 258M568 276L577 272L584 272M556 268L554 261L555 258M521 288L524 283M524 283L531 279L540 275M548 275L540 275M684 198L689 200L695 205M684 198L674 206L663 212M695 205L693 214L693 223M693 223L683 226L675 227M663 212L669 221L675 227M665 241L665 243M665 241L669 234L675 227M701 233L695 229L693 223M671 253L667 249L665 243M720 230L724 218L727 207M695 205L703 201M703 201L717 205L727 207M745 177L739 183L729 187M748 201L742 204L738 208M738 208L734 208L729 206M729 187L729 198L729 206M692 158L699 154L706 154M692 158L690 168L686 177M686 177L699 181L708 183M706 154L710 158L714 161M714 161L712 168L713 175M713 175L712 178L708 183M707 144L707 151L706 154M679 154L684 154L692 158M674 186L678 187M674 186L669 172L667 158M678 187L683 184L686 177M678 187L682 194L684 198M703 201L704 191L708 183M737 159L726 160L714 161M729 187L722 179L713 175M727 207L729 206M642 175L641 176M642 175L652 180L663 188M641 176L640 190L641 206M663 188L658 199L654 209M654 209L652 211L646 211M646 211L641 206M634 151L641 157L646 167M634 151L622 153L611 155M646 167L642 175M629 177L636 178L641 176M674 186L667 187L663 188M646 167L653 163L660 157M620 200L615 193M620 200L630 202L641 206M663 212L658 212L654 209M445 184L443 193L443 198M445 184L441 181L433 178M443 198L431 200L421 200M433 178L426 183L420 190M420 190L419 194L421 200M448 203L443 198M457 177L452 182L445 184M431 161L431 171L433 178M420 202L421 200M407 177L413 185L420 190M315 665L333 664L353 661M351 693L352 678L355 665M353 661L355 665M328 630L338 630L351 631M353 661L353 646L351 631M355 594L356 610L355 628M351 631L355 628M385 630L385 630M355 628L372 629L385 630M393 703L390 700L385 698M393 703L409 696L424 690M385 698L388 680L388 664M424 690L422 677L424 664M394 658L388 664M394 658L407 660L422 662M424 664L422 662M393 736L398 731M398 731L397 718L393 703M360 700L373 698L385 698M434 699L431 694L424 690M398 731L410 734L421 734M355 665L370 664L388 664M385 630L390 646L394 658M425 628L424 645L422 662M455 660L456 644L454 625M455 660L438 663L424 664M815 705L812 696L808 687M808 687L813 685M827 620L818 625L809 632M809 632L810 640L812 649M799 664L801 673L806 685M799 664L805 655L812 649M808 687L806 685M805 604L808 601M797 626L803 628L809 632M788 626L782 641L778 657M778 657L787 660L799 664M605 442L609 446L611 452M605 442L605 435L607 430M611 452L622 448L633 446M607 430L612 427M612 427L621 430L632 435M633 446L632 441L632 435M640 424L638 421L636 415M640 424L635 430L632 435M618 412L615 418L612 427M618 412L621 411M636 415L629 412L621 411M665 409L658 418L651 426M665 409L655 404L647 399M651 426L647 427L640 424M636 415L640 408L647 399M665 409L670 409L674 408M652 380L648 383L643 388M652 380L665 385L675 389M675 389L676 400L674 408M647 399L644 392L643 388M589 342L591 332L595 319M589 342L594 345L600 349M600 349L605 338L613 330M602 319L595 319M602 319L607 320L611 323M611 323L613 330M569 339L576 341L582 343M582 343L589 342M585 315L589 316L595 319M639 343L634 345L631 347M623 315L617 319L611 323M631 347L622 338L613 330M497 657L494 654L491 651M497 657L493 675L490 697M491 651L475 655L458 661M458 661L464 678L467 694M467 694L477 697L490 697M508 624L518 629L526 634M510 658L502 659L497 657M490 635L492 643L491 651M493 700L490 697M455 660L458 661M455 702L461 699L467 694M610 361L607 370L607 382M610 361L617 359L628 355M628 355L632 362M632 362L631 375L632 385M607 382L618 383L631 386M631 386L632 385M631 347L628 355M601 353L607 357L610 361M601 353L600 349M657 366L656 367M656 367L643 365L632 362M656 367L654 374L652 380M643 388L636 386L632 385M604 384L602 391L603 399M604 384L607 382M618 412L610 407L603 399M621 411L625 397L631 386M547 409L556 411L567 413M547 387L557 388L566 387M567 413L567 400L566 387M488 568L498 566L506 564M504 528L509 532L516 539M506 564L511 552L516 539M541 521L537 528L536 536M536 536L530 538L521 541M516 539L521 541M553 633L558 631M585 637L580 633L577 629M558 631L566 629L577 629M543 456L542 455M543 456L546 464L549 471M542 455L533 456L525 459M549 471L541 473L536 478M536 478L530 475L525 469M525 459L524 465L525 469M541 434L543 446L542 455M541 434L550 434L562 431M562 431L564 440L569 448M569 448L557 452L543 456M571 449L569 460L570 470M571 449L569 448M570 470L563 472L559 477M559 477L555 473L549 471M536 430L541 434M517 455L521 458L525 459M535 499L547 492L559 486M529 495L534 487L536 478M559 486L559 477M509 485L517 477L525 469M789 384L785 387M809 408L796 406L782 406M782 406L785 395L785 387M809 453L802 452L798 447M808 424L803 428L796 428M796 428L798 439L798 447M769 467L775 474L783 478M769 467L767 459L765 453M765 453L772 452L781 451M790 470L788 475L783 478M790 470L790 462L787 453M787 453L781 451M810 466L807 469M807 469L799 471L790 470M798 447L791 449L787 453M665 362L673 366L681 370M675 389L677 384L681 381M681 370L681 376L681 381M686 342L690 354L691 363M681 370L688 365L691 363M674 450L685 451L698 454M674 450L672 443L674 437M674 437L676 435L679 429M679 429L691 435L700 437M698 454L699 444L700 437M656 434L665 436L674 437M656 434L652 429L651 426M674 408L679 412M679 412L678 421L679 429M675 108L668 104L663 100M652 132L648 130M663 100L656 102L647 106M647 106L646 118L648 130M634 151L637 143L639 133M614 140L619 134L625 130M625 130L632 130L639 133M639 133L643 132L648 130M755 11L751 14L747 15M738 -9L732 -0L727 10M727 10L736 14L747 15M753 46L747 39L739 35M729 64L727 50L722 36M722 36L730 35L739 35M747 15L742 25L739 35M630 299L631 291L632 282M650 275L650 275M632 282L640 277L650 275M665 243L654 251L642 260M650 275L646 268L642 260M587 243L595 246L605 246M595 217L604 222L611 224M605 246L608 234L611 224M620 200L617 212L616 222M611 224L616 222M662 240L651 242L638 244M662 240L654 229L643 219M638 244L637 234L632 228M643 219L639 224L632 228M665 241L662 240M642 260L635 254M635 254L635 250L638 244M646 211L643 219M629 228L623 226L616 222M629 228L632 228M772 212L769 218M791 206L787 222L786 241M769 218L777 229L786 241M738 208L744 220L751 230M769 218L760 223L751 230M818 241L809 243L802 246M818 241L814 227L807 211M802 246L793 244L787 245M786 241L787 245M727 236L738 235L749 235M735 262L743 253L754 245M754 245L751 241L749 235M751 230L749 235M795 316L802 319L809 326M795 316L798 307L804 296M804 296L807 294M825 305L818 300L807 294M804 296L795 292L785 290M797 270L791 271L784 276M797 270L805 279L809 287M784 276L786 284L785 290M809 287L807 294M789 367L788 365M785 387L779 386L769 383M769 383L767 371L764 361M788 365L777 362L764 361M798 344L791 344L786 344M788 365L788 355L786 344M715 339L724 330L731 318M715 339L727 341L736 345M739 321L741 329L744 338M739 321L737 319M736 345L741 341L744 338M731 318L737 319M715 339L712 340M705 323L709 315L715 306M712 340L711 339M731 318L721 312L715 306M627 473L634 460L639 451M627 473L629 476M629 476L639 476L651 475M651 475L652 466L651 457M651 457L645 452M645 452L639 451M656 434L652 444L645 452M674 450L672 454M672 454L660 456L651 457M633 446L639 451M586 446L595 445L605 442M586 446L586 446M586 446L588 458L592 469M611 452L612 461L609 468M592 469L600 468L609 468M571 449L577 448L586 446M570 470L579 472L586 474M592 469L586 474M630 492L628 483L629 476M625 498L619 499L611 500M627 473L618 470L611 469M611 500L608 494M608 494L609 482L611 469M611 469L609 468M538 623L539 616L537 609M558 631L558 620L562 607M562 607L548 607L537 609M518 603L529 607L536 608M537 609L536 608M546 515L553 516M536 536L540 541L547 545M553 516L555 526L558 537M558 537L554 540L547 545M635 512L631 514L628 520M611 500L610 505L607 512M607 512L607 513M628 520L616 515L607 513M577 629L578 618L578 608M562 607L568 603M578 608L573 605L568 603M649 622L647 616L647 610M649 622L656 624L664 626M647 610L660 605L673 602M664 626L670 615L673 602M636 634L642 628L649 622M629 630L624 617L622 605M622 605L628 604L632 600M644 603L637 603L632 600M644 603L647 610M673 634L668 631L664 626M693 612L686 604L678 597M678 597L673 602M707 604L708 595L707 584M710 605L721 603L730 600M707 584L713 582L717 578M717 578L723 580M723 580L725 588L730 600M734 624L728 624L724 628M740 607L740 606M730 600L733 603L740 606M653 589L648 595L644 603M653 589L641 583L632 578M632 600L632 593L628 584M632 578L628 584M697 518L686 518L673 515M697 518L698 528L696 540M690 542L696 540M690 542L683 537L673 532M673 532L674 522L673 515M702 513L697 518M702 513L703 507L703 500M674 500L673 505L671 513M674 500L682 495L692 490M671 513L673 515M703 500L699 494L692 490M650 514L651 523L648 535M650 514L661 514L671 513M658 543L652 538L648 535M658 543L665 539L673 532M701 543L706 549L709 558M701 543L709 538L715 537M731 540L724 539L715 537M731 540L721 550L713 561M713 561L709 558M713 518L716 529L715 537M713 518L707 517L702 513M696 540L701 543M653 589L658 585M634 564L633 571L632 578M634 564L644 563L651 564M651 564L654 576L658 585M678 597L676 592L676 588M658 585L668 588L676 588M723 660L731 659L738 662M726 693L731 690L738 684M738 684L738 673L738 662M753 640L754 649L755 655M738 662L746 658L755 655M778 657L773 659L766 660M755 655L762 656L766 660M806 685L793 689L782 697M766 660L765 669L766 677M782 697L773 689L766 677M738 684L745 688L751 690M766 677L759 683L751 690M742 719L747 718L752 713M751 690L753 701L752 713M387 768L405 773L421 774M387 768L389 787L390 806M390 806L406 801L424 793M421 774L422 784L424 793M383 764L387 768M433 759L425 765L421 774M389 807L390 806M431 800L426 798L424 793M541 93L545 84L551 77M541 93L545 99M557 107L550 104L545 99M557 107L563 94L565 78M565 78L559 79L551 77M521 87L530 89L541 93M540 59L531 65L524 67M540 59L544 68L551 77M523 120L534 111L545 99M559 108L557 107M583 104L587 97L589 87M589 87L579 82L570 75M570 75L565 78M514 40L519 35M540 59L541 56M519 35L529 35L537 39M541 56L540 47L537 39M662 16L659 10L657 5M662 16L674 14L687 9M657 5L660 -3L662 -7M687 9L684 1L683 -7M191 66L185 62L181 58M191 66L200 61L209 57M181 58L182 46L186 36M209 57L207 47L203 37M203 37L196 38L186 36M191 82L190 76L191 66M160 62L170 60L181 58M210 57L209 57M183 34L186 36M208 31L203 37M283 12L284 13M311 9L310 14L305 17M284 13L294 16L305 17M303 123L311 116L322 108M303 123L314 130L324 140M322 108L332 122L342 133M324 140L331 139L339 137M342 133L339 137M316 157L319 149L324 140M292 124L298 123L303 123M345 132L342 133M348 101L336 105L322 107M322 107L322 108M342 156L341 148L339 137M353 88L341 82L331 75M322 107L319 96L316 87M316 87L325 79L331 75M349 49L339 55L330 63M331 75L331 70L330 63M256 118L254 115M227 111L235 111L244 109M254 115L249 112L244 109M237 75L243 80L251 88M244 109L248 98L251 88M244 60L256 62L266 66M266 66L262 76L260 86M251 88L255 86L260 86M808 82L811 74L813 68M808 82L800 83L789 82M813 68L806 61L802 58M789 82L786 67L785 54M785 54L793 57L802 58M811 85L808 82M778 89L784 85L789 82M811 32L808 46L802 58M783 53L785 54M664 57L670 55L680 53M664 57L665 69L667 79M680 53L689 59L695 65M667 79L679 80L691 81M691 81L694 74L695 65M666 80L652 79L639 80M666 80L667 79M645 63L644 72L639 80M645 63L653 57L660 55M660 55L664 57M693 83L691 81M663 100L665 88L666 80M723 68L712 64L703 60M703 60L701 64L695 65M525 206L526 217L523 226M549 229L549 229M549 229L536 227L523 226M497 222L506 230L517 237M495 258L506 252L518 246M518 246L519 243L517 237M523 226L522 233L517 237M596 406L595 415L594 421M596 406L593 404L586 404M586 404L575 408L568 414M594 421L589 423L582 424M582 424L577 422L569 419M569 419L568 414M603 399L598 402L596 406M607 430L600 424L594 421M586 446L585 434L582 424M562 431L566 427L569 419M567 413L568 414M567 386L573 388L580 387M567 386L568 375L568 366M568 366L576 364L584 363M596 383L588 383L580 387M596 383L591 374L585 363M584 363L585 363M566 387L567 386M586 404L583 397L580 387M563 359L568 366M582 343L584 352L584 363M604 384L596 383M601 353L592 357L585 363M513 567L521 564L529 560M513 567L517 573L520 582M520 582L527 582L532 579M532 579L533 570L536 564M536 564L529 560M506 564L513 567M521 541L525 549L529 560M511 595L516 587L520 582M542 589L540 598L536 608M542 589L535 586L532 579M547 545L548 553L548 560M548 560L543 564L536 564M780 409L773 410L763 412M780 409L784 416L787 425M787 425L783 429M783 429L771 434L759 437M763 412L760 420L755 432M755 432L759 437M782 406L780 409M769 383L763 385L757 387M757 387L757 395L756 404M756 404L758 408L763 412M796 428L793 426L787 425M781 451L781 441L783 429M760 449L761 442L759 437M760 449L765 453M691 477L695 471L701 467M691 477L685 473L676 471M698 454L703 461M672 454L674 462L676 471M703 461L701 467M760 449L754 452L748 457M748 457L749 467L748 475M769 467L764 474L755 481M755 481L751 478L748 475M679 412L686 411M686 411L691 398L698 388M681 381L688 384L697 387M698 388L697 387M686 411L691 410L699 412M699 412L705 405L711 398M711 398L709 392M698 388L705 389L709 392M691 363L697 364L705 364M697 387L699 376L705 364M712 340L710 352L710 363M710 363L705 364M700 437L706 433L711 430M703 461L712 456L720 454M720 454L717 441L711 430M699 412L708 421L712 428M711 430L712 428M606 88L613 84L622 80M606 88L612 102L614 113M622 80L626 81L632 85M632 85L632 92L636 100M636 100L626 107L618 114M614 113L618 114M595 63L591 76L589 87M595 63L604 62L612 57M589 87L598 87L606 88M612 57L618 60M618 60L619 71L622 80M596 119L606 116L614 113M589 87L589 87M645 63L635 58L626 54M639 80L632 85M626 54L620 58L618 60M647 106L642 103L636 100M625 130L622 120L618 114M715 8L718 12M715 8L702 9L688 9M718 12L716 24L716 33M688 9L687 21L688 31M707 36L699 35L689 32M707 36L711 33L716 33M688 31L689 32M713 -11L714 -0L715 8M727 10L722 11L718 12M687 9L688 9M722 36L716 33M661 28L674 28L688 31M661 28L662 22L662 16M703 60L705 49L707 36M680 53L683 42L689 32M661 28L658 32L653 37M653 37L656 48L660 55M625 303L617 299L608 292M632 282L627 280L621 276M621 276L614 283L608 292M602 319L605 305L605 292M608 292L605 292M584 298L588 291L591 286M605 292L600 287L591 286M584 272L589 275M591 286L590 282L589 275M634 255L628 264L621 275M634 255L626 252L616 250M610 251L616 250M610 251L609 259L608 265M608 265L613 269L621 275M635 254L634 255M621 276L621 275M629 228L621 239L616 250M605 246L610 251M589 275L598 270L608 265M764 251L770 253L774 252M764 251L758 266L755 277M774 252L777 260L778 271M778 271L772 276L764 281M755 277L761 278L764 281M787 245L782 249L774 252M754 245L757 248L764 251M751 278L742 271L735 264M751 278L755 277M802 246L798 257L797 270M784 276L778 271M770 293L774 293L781 292M770 293L768 287L764 281M785 290L781 292M763 304L765 297L770 293M763 304L753 303L747 300M751 278L748 285L743 292M747 300L743 292M809 287L816 280L825 270M765 342L775 340L781 340M765 342L763 331L761 318M781 340L783 328L787 319M761 318L765 311M765 311L774 312L782 316M787 319L782 316M764 343L761 352L762 357M764 343L765 342M786 344L781 340M764 361L762 357M739 321L751 318L761 318M744 338L755 341L764 343M795 316L787 319M763 304L765 311M747 300L743 309L737 319M781 292L783 303L782 316M723 275L723 282L725 289M723 275L709 275L698 276M725 289L721 296L714 301M714 301L706 299L700 296M698 276L696 285L698 294M700 296L698 294M724 272L723 275M743 292L736 292L725 289M696 273L698 276M715 306L714 301M687 321L692 309L700 296M677 295L686 293L698 294M723 580L733 578L739 574M740 606L743 594L750 581M739 574L745 576L750 581M714 562L715 569L717 578M714 562L726 560L740 558M739 574L739 566L740 558M787 601L787 592L787 585M806 587L802 585M787 585L796 586L802 585M815 563L808 564L803 565M802 585L801 576L803 565M651 491L659 493L668 493M651 491L651 483L651 475M651 475L660 474L671 475M668 493L669 486L671 475M649 494L651 491M674 500L670 498L668 493M651 475L651 475M676 471L671 475M691 477L690 483L692 490M567 501L578 496L587 490M567 501L567 509M567 509L571 513L578 518M587 490L588 490M588 490L589 502L591 512M578 518L586 514L591 512M559 486L564 493L567 501M586 474L585 481L587 490M553 516L560 511L567 509M581 533L576 535L573 540M581 533L581 525L578 518M558 537L566 538L573 540M608 494L598 491L588 490M607 512L600 511L591 512M573 540L571 550L572 559M548 560L553 563L556 564M572 559L564 560L556 564M542 589L549 585L557 584M556 564L555 573L557 584M568 603L566 597L564 589M557 584L561 585L564 589M572 559L577 561L583 565M564 589L574 584L581 579M583 565L584 573L581 579M658 543L659 548L660 554M648 535L640 535L635 538M634 564L628 559M651 564L656 558L660 554M628 559L632 548L635 538M628 520L627 526L628 533M635 538L628 533M684 553L687 560L693 566M684 553L678 557L672 558M672 558L676 571L680 584M693 566L691 573L690 580M690 580L687 583L680 584M690 542L686 547L684 553M709 558L701 562L693 566M660 554L667 556L672 558M676 588L680 584M714 562L713 561M707 584L700 583L690 580M807 469L806 478L808 489M783 478L783 484L783 489M783 489L785 491M785 491L796 489L808 489M815 495L811 491L808 489M768 715L772 713L778 708M768 715L771 729L776 745M778 708L788 713L799 722M776 745L779 747M779 747L790 743L802 738M802 738L800 731L799 722M782 697L779 704L778 708M752 713L759 714L768 715M752 746L763 747L776 745M815 705L809 713L799 722M779 760L777 752L779 747M812 742L807 742L802 738M498 36L501 27L502 16M519 35L516 27L515 18M515 18L508 16L502 16M476 17L484 12L491 9M502 16L498 12L491 9M570 75L569 69L570 64M595 63L588 58L583 53M570 64L578 60L583 53M541 56L551 54L558 54M570 64L563 58L558 54M537 10L529 8L525 8M537 10L541 13M537 39L542 34L543 30M515 18L520 12L525 8M541 13L543 23L543 30M653 37L645 35L640 35M657 5L650 8L641 8M641 8L639 22L640 35M626 54L630 43L637 35M606 42L617 35L626 29M606 42L608 48L612 57M626 29L632 31L637 35M640 35L637 35M327 33L324 35L317 39M330 63L326 58L319 55M317 39L320 48L319 55M305 17L305 26L305 33M317 39L312 34L305 33M290 121L288 114L288 111M254 115L262 106L273 94M288 111L281 101L273 94M260 86L266 90L273 93M273 94L273 93M524 254L519 247M524 254L531 258L538 259M519 247L533 244L544 239M538 259L544 256L550 256M550 256L546 247L544 239M524 283L524 267L524 254M518 246L519 247M540 275L540 265L538 259M549 229L547 233L544 239M555 258L550 256M749 383L741 385L735 390M749 383L748 375L744 367M735 390L726 382L720 376M744 367L739 363L735 362M735 362L727 365L719 369M719 369L720 376M762 357L752 361L744 367M757 387L749 383M736 345L736 352L735 362M710 363L715 367L719 369M709 392L713 386L720 376M729 407L722 416L716 427M729 407L731 407M731 407L735 409M735 409L740 421L745 429M716 427L725 431L732 436M745 429L738 433L732 436M711 398L719 401L729 407M712 428L716 427M735 390L734 399L731 407M756 404L746 408L735 409M755 432L751 430L745 429M720 454L725 455L730 456M731 455L730 456M731 455L731 444L732 436M748 457L740 454L731 455M701 467L711 473L720 480M730 456L731 466L728 473M728 473L723 476L720 480M748 475L743 476L738 477M728 473L735 475L738 477M703 500L710 496L720 492M720 480L719 486L720 492M765 602L767 594L766 586M750 581L756 580M766 586L760 584L756 580M787 585L782 581M766 586L775 584L782 581M803 565L797 563L793 562M793 562L789 566L783 568M782 581L782 574L783 568M612 583L608 580M612 583L612 592L615 605M608 580L601 585L593 592M593 592L593 599L591 603M591 603L597 607L603 611M603 611L607 607L615 605M622 605L615 605M628 584L619 582L612 583M578 608L586 604L591 603M581 579L587 585L593 592M604 629L605 622L603 611M617 559L614 549L608 535M617 559L610 562L606 567M592 563L599 564L606 567M592 563L595 550L595 538M595 538L601 536L606 534M606 534L608 535M628 559L624 558L617 559M628 533L616 534L608 535M608 580L607 573L606 567M583 565L588 566L592 563M581 533L589 534L595 538M607 513L606 523L606 534M788 510L798 511L805 513M788 510L783 515M783 515L785 525L789 537M805 513L804 525L806 537M805 538L806 537M805 538L801 540L796 540M796 540L789 537M785 491L786 501L788 510M813 507L809 509L805 513M824 536L816 538L806 537M815 563L809 551L805 538M793 562L796 549L796 540M713 518L722 518L729 517M720 492L723 495L728 497M729 517L730 507L728 497M738 477L740 485L738 495M728 497L734 495L738 495M740 558L740 558M756 580L762 569L766 554M740 558L752 557L766 554M731 540L733 539M740 558L736 547L733 539M783 568L773 561L766 554M789 537L777 541L768 544M768 544L767 548L766 554M766 554L766 554M537 10L541 -2L544 -13M525 8L524 0L520 -5M606 42L600 39L595 34M583 53L585 46L584 41M595 34L590 36L584 41M558 54L564 43L567 35M584 41L574 38L567 35M543 30L554 31L566 32M567 35L566 32M613 10L613 -3L615 -12M613 10L614 11M614 11L625 8L634 4M634 4L634 -3L636 -12M626 29L619 19L614 11M595 34L595 22L598 13M598 13L606 10L613 10M641 8L634 4M260 32L263 36L268 37M266 66L271 63L274 62M274 62L271 52L268 37M284 13L287 24L287 35M268 37L278 38L287 35M305 33L300 36L295 38M287 35L295 38M284 79L292 84L299 89M284 79L285 72L282 65M302 63L297 62L293 60M302 63L305 76L309 85M309 85L303 88L299 89M282 65L286 62L293 60M288 111L295 100L299 89M273 93L279 85L284 79M274 62L282 65M319 55L310 58L302 63M295 38L294 49L293 60M316 87L309 85M783 489L771 490L763 493M783 515L779 517L772 516M772 516L766 506L763 493M755 481L758 488L758 492M738 495L744 495L751 497M751 497L758 492M763 493L758 492M731 519L741 516L750 514M731 519L732 530L734 539M734 539L746 536L760 533M750 514L757 520L761 525M760 533L761 525M729 517L731 519M751 497L752 505L750 514M733 539L734 539M768 544L764 538L760 533M772 516L768 520L761 525M491 9L492 0L495 -11M589 -2L589 2L590 7M590 7L579 9L570 12M559 -15L560 -5L561 6M561 6L566 10L570 12M598 13L593 11L590 7M566 32L569 21L570 12M541 13L552 10L561 6" fill="none" stroke="#5f6363" stroke-width="0.8"/>
<path d="M6 806 L6 704.4 L10 705.7 L13.9 702.4 L19.2 701.1 L21.2 698.5 L25.8 699.1 L29.7 699.8 L30.4 703.1 L27.1 705 L27.1 708.3 L32.4 707 L40.3 705.7 L45.5 705.7 L48.2 704.4 L48.8 706.4 L45.5 708.3 L45.5 713 L44.2 715.6 L49.5 716.2 L51.5 718.2 L51.5 724.8 L54.8 725.5 L60 723.5 L64 726.8 L68 728.8 L70.6 726.8 L71.9 730.7 L74.5 732.7 L75.9 737.3 L79.8 740.6 L85.1 741.9 L90.4 741.9 L95.6 744.6 L100.9 747.2 L106.2 751.2 L111.4 753.8 L115.4 748.5 L120.7 745.9 L124.6 744.6 L128.6 741.9 L132.5 743.3 L137.8 745.9 L143.1 748.5 L148.3 751.2 L149.7 745.9 L150 730 L151 722 L155 717 L160 723 L170 729 L180 735 L183 742 L190 748 L200 752 L211 758 L211 765 L236 765 L236 758.2 L231.6 752.3 L228.7 746.4 L222.8 740.5 L213.9 739 L205 737.5 L199.1 736 L199.1 728.7 L193.2 725.7 L188.8 722.8 L182.9 716.8 L188.8 713.9 L191.7 709.5 L199.1 706.5 L202 700.6 L208 696.2 L206.5 688.8 L209.5 681.4 L205 675.5 L208 668.8 L209.5 662.2 L213.9 654.8 L216.8 651 L220.5 651.8 L222.8 654.8 L231.6 650.3 L240.5 647.4 L249.4 645.9 L253.8 648.9 L262.7 647.4 L268.6 650.3 L273 653.3 L280.4 654.8 L284.8 652.8 L289.7 647.9 L297.1 651.6 L304.5 650.3 L307 630.6 L309 624 L313.1 621.5 L317 624 L319.3 628.2 L321.8 643 L329.2 651.6 L334.1 658 L343.9 655.3 L353.8 652.8 L356.2 638 L361.2 645.4 L366.1 650.3 L376 647.9 L378.4 635.6 L383.3 640.5 L388.3 630.6 L390.7 640.5 L398.1 643 L393.2 646.6 L406 647.9 L412 647 L417.7 642 L429.6 640.5 L435.5 644.9 L433.1 646.6 L438 649.1 L455.3 655.3 L472.5 662.7 L479.9 667.6 L492.2 672.5 L499.6 679.9 L507 678.7 L504.5 684.8 L508.2 694.7 L507 704.5 L511.9 711.9 L524.2 713.1 L531.6 714.4 L534.1 720.5 L543.9 716.8 L553.8 709.4 L563.6 702 L573.5 694.7 L578.4 687.3 L583.3 684.8 L588.3 679.9 L595.7 675 L606 673.7 L615.9 677.4 L625.7 684.8 L635.6 691 L642.9 699.6 L650.3 709.4 L657.7 714.4 L656.5 724.2 L665.1 734.1 L672.5 743.9 L679.9 751.3 L682.4 763.6 L689.7 758.7 L699.6 761.2 L704.5 773.5 L709.4 780.9 L714.4 788.3 L713 806Z" fill="#00446b" stroke="#000" stroke-width="1.2"/>
<path d="M524 712.5L534 719.5L544 716L554 708.5L564 701L573.5 694L578 687L573 683L565 689L555 696L546 703L536 708L527 708Z" fill="#00446b"/>
<path d="M527 708L536 708L546 703L555 696L565 689L573 683" fill="none" stroke="#000" stroke-width="1"/>
<path d="M176.9 682.9 L181.4 679.9 L187.3 678.4 L191.7 674 L196.2 669.6 L202.1 666.6 L208 668.8 L205 674 L203.5 679.9 L199.1 682.9 L196.2 688.8 L191.7 693.2 L185.8 691.7 L181.4 688.8 L177.7 686.5Z" fill="#00446b" stroke="#000" stroke-width="0.6"/>
<path d="M15.9 719.5 L25.8 716.2 L32.4 719.5 L39 722.2 L34.3 725.5 L34.3 729.4 L31 730.1 L25.8 725.5 L19.2 724.2 L15.9 722.2Z" fill="#5d504b" stroke="#000" stroke-width="0.8"/>
<path d="M806 560L802 566L803 574L798 578L802 584L796 590L801 596L797 604L802 610L797 618L801 626L796 634L800 642L797 650L801 658L806 660Z" fill="#00446b"/>
<path d="M300.8 59 L309.4 55.3 L314.4 59 L316.8 70 L323.7 72.5 L321.8 79.9 L324.2 92.2 L321.8 95.9 L314.4 79.9 L309.4 65.1 L303.3 63.9Z" fill="#2b4763"/>
<path d="M368.6 260 L376 258 L383 264 L393 271 L397 276 L388 272.5 L378 266 L371 263Z" fill="#2b4763"/>
<path d="M439 376 L443 368.6 L450 363.6 L451.6 367.3 L445.4 373.5 L443 378.4Z" fill="#2b4763"/>
<path d="M606 307 L613.4 302.1 L614.6 287.3 L620.8 291 L626.9 292.2 L623.2 297.1 L618.3 300.8 L613.4 309.4 L606 313.1 L601.1 311.9 L602.3 305.8Z" fill="#2b4763"/>
<path d="M526.7 502.1 L529.2 507 L532.8 509.4 L529.2 524.2 L536.5 526.7 L532.8 534.1 L529.2 536.5 L525.5 531.6 L526.7 516.8 L525.5 507Z" fill="#2b4763"/>
<path d="M424.5 413.4 L426.9 420.8 L430.6 429.4 L429.4 434.3 L426.9 428.2 L424.5 419.5Z" fill="#2b4763"/>
<path d="M121.8 666.3 L124.2 655.3 L131.6 652.3 L136.5 657.7 L132.8 666.3 L126.7 668.8Z" fill="#2b4763"/>
<path d="M140.2 709.4 L146.4 704.5 L145.2 695.9 L151.3 695.9 L153.8 703.3 L148.9 709.4 L143.9 714.4Z" fill="#2b4763"/>
<path d="M42.2 681.1 L46.6 679.9 L51.6 688.5 L46.6 688.5Z" fill="#2b4763"/>
<path d="M57.7 691 L61.4 687.3 L65.1 697.1 L72.5 703.3 L83.6 705.8 L84.8 710.7 L75 707 L65.1 704.5 L59 697.1Z" fill="#2b4763"/>
<path d="M543.9 609.7 L553.8 606 L563.6 610.9 L553.8 613.4 L546.4 618.3 L541.5 615.9Z" fill="#2b4763"/>
<path d="M784.6 734.1 L790.7 739 L795.7 746.4 L790.7 753.8 L785.8 743.9Z" fill="#2b4763"/>
<path d="M148.9 722.8 L154.8 716.8 L159.2 722.8 L169.6 728.7 L179.9 734.6 L182.9 742 L176.9 746.4 L169.6 752.3 L162.2 758.2 L148.9 758.2Z" fill="#00446b"/>
<path d="M190 720l-1 -2M206 698l0 -1l-2 1l-3 0M204 715l1 -1M216 685l0 -3M209 692l-1 1l-1 -3l0 1M225 678l-1 -2l0 1l0 1M198 706l1 0l2 -3M206 714l0 2l-2 0M214 694l2 1l-2 -2M207 695l-3 1l-3 -1M211 695l-2 1M209 695l2 0l1 -1M217 694l1 -2l1 1l-1 0M200 704l0 1l0 0l0 -3M208 708l0 1l2 -3l-1 2M192 705l1 -1M204 715l-1 -1l-2 2M213 689l0 1l1 -2l-3 -1M194 707l-1 -3M207 696l2 1M204 702l0 2M210 691l0 -3l-1 -2l-1 -3M198 721l-1 -2l0 2M210 682l2 1l-3 0l-1 0M202 701l0 2M199 728l0 0M194 710l1 0l2 1M195 713l-2 -2M207 687l0 -2l-1 -1M199 707l-2 2l1 -1M208 679l-2 -3l-1 -3M203 719l-1 -1M215 681l0 0M216 690l2 0M211 698l0 -2l-2 0M214 687l-1 -1l-1 -1l0 -2M221 678l-2 2l2 2M193 717l-1 -1l0 -2l1 2M210 706l-1 -3M220 695l1 -2l-2 -3M213 689l1 1l-2 -2M192 716l0 -1M225 689l-2 1M198 723l1 -1l-2 -1l0 1M191 713l-1 -1l-2 2l1 0M209 703l1 -3l0 0l-2 -1M210 706l-1 -1M211 686l-2 1M198 723l2 2l-1 -1M198 711l0 0M225 688l-1 -3l-2 1l2 0M191 716l-1 -1M201 712l1 2l-2 -2l2 1M210 682l0 -1l2 -3M206 695l0 0l1 -2l1 -3M208 678l2 -2l-1 -2M227 680l2 2l-2 1l-1 0M204 707l-1 -2l0 2M214 688l1 -3l-1 1M221 684l-2 1l-1 -1M198 715l1 -2l1 0l1 0M210 694l-2 -3l-2 2M228 680l0 2l-1 0l1 2M200 702l-2 1M216 692l0 0l2 2l1 -2M213 694l1 -3M217 684l2 1l0 -1M216 698l1 -1l0 1l-3 2M202 721l-2 1l-1 2l2 -1M212 695l-2 2l0 -1l-2 -2M208 681l1 -2l1 1M217 696l-2 2l1 -3M192 712l-2 0M213 688l-1 1l-1 -1M224 688l1 2M201 701l-3 -2l-1 2l1 -1M200 714l1 0l-2 1M222 674l0 0l0 -1l-1 -1M188 714l1 2l-2 2l-1 1M208 680l1 0M215 676l0 0M206 678l-3 -3M220 674l2 -3M206 702l2 1l0 2l-1 -2M212 682l0 -1M206 694l-1 -1M210 684l-1 0l1 2l-2 -1M202 722l-2 -3l-3 0l-2 2M208 704l-2 -2l1 2M222 675l-2 0l-2 -1M202 708l2 2l-1 -1M211 692l1 2l1 -3l0 1M218 687l-2 -3M222 675l1 1M207 678l-3 -2l1 -3M202 712l-3 1l-1 -2M198 721l-1 0M217 687l-2 2l-1 -2M209 691l1 0l2 1M201 702l0 0M198 717l0 0l-1 0l0 -1M199 715l-3 1l-2 -2l0 0M217 694l2 -3M217 693l0 0l-1 1l2 0M208 682l-1 2M189 716l2 -3l-2 1l2 -1M216 684l2 2M208 677l-1 2M203 706l-1 -1l-1 2M201 724l1 -2M207 700l2 1l2 2M213 703l1 0l1 2M210 703l0 1l1 0l2 2M210 698l1 1M210 703l-1 2M214 675l0 -1l2 2M202 718l0 -2l0 -2M196 721l-1 0l-1 1l-1 0M215 697l-1 1l0 0M202 713l-2 0M209 703l-3 2l-2 1M215 683l-3 -1l2 2l-2 0M215 700l-2 2l1 -2M191 707l-1 -2l1 -1l0 1M194 715l1 -2l-3 2M200 722l-1 -3l1 2l1 -1M216 696l-1 -1M202 708l1 2M206 706l0 -2M211 683l1 1l-2 -3l1 0M208 680l0 2M206 691l-2 -1M194 708l-3 2l-2 2l-2 -1M209 701l-1 0l0 -3l-3 -1M221 685l-1 -1l2 2l0 -1M211 702l-2 0M224 681l-3 0l-2 -2l-2 -1M195 711l-3 1l0 -2M200 718l-2 2l-1 0l-2 2M205 696l-1 -1l2 -1M209 676l-2 -2l-1 -1l0 -1M209 687l1 -1l1 -2M201 709l0 1l1 1l2 2M215 681l-2 2l-1 1l0 0M224 681l1 0l-2 2M190 714l1 -3M202 707l-2 1M212 678l-2 -2l-3 0M203 713l2 2l-3 2M197 718l-1 2l2 1M208 708l-2 2l-3 1M221 682l-1 -2l-1 0l0 2M195 711l1 0l1 2l2 -1M201 701l-2 -2l1 -2M202 708l-1 1l0 -3l1 -1M214 692l-2 1M192 705l-1 0l-1 -3l1 -1M213 703l0 1M190 709l-2 1l-2 2M220 675l-1 -3l-3 -1l1 -1M216 682l1 0M226 687l-2 2l-2 0M209 694l-2 2M226 681l-3 -3l0 0l0 2M216 695l-2 -1l-1 -2l0 1M208 677l-1 1l-3 -1M204 707l0 -2M212 678l2 2l-1 -1M207 695l-1 0l2 1l-2 2M218 694l1 2l-1 -1M196 710l-1 1l-2 2M221 680l-3 1l-3 1l-1 0M188 711l0 1M195 710l-2 0l-3 1l-3 2M225 689l2 1M209 678l1 2l2 -1M205 696l0 -2l2 2l1 -1M219 693l1 -3l2 2M209 708l-2 1l2 -2l1 1M199 724l-3 -2l0 0l-1 -2M224 681l0 0M195 717l1 -1l2 2M188 712l0 -2l-2 -1M209 709l-1 -2M217 689l1 -2M209 692l1 -2l-3 1M208 683l-1 -2M207 713l-1 -3l0 1M199 727l0 -1l2 -3l-3 1M218 677l-3 1M199 726l-1 2M192 711l2 0l2 1M210 692l0 -1l1 1l2 2M221 689l2 1l-1 -1M198 706l1 1M224 686l-1 1l0 2M191 721l2 -2M200 717l-1 1M217 690l0 0M198 722l-1 -2M199 710l-2 -2l-1 0l2 0M215 683l2 2l0 -1l-1 0M203 702l-2 -1l0 -1M212 686l0 -1l2 -2M216 689l0 -3l2 -1l1 1M199 718l0 2l-2 2M214 697l-2 2l1 -2M207 680l-2 -1M208 691l2 -3M209 699l-1 2l1 1M194 722l1 1M207 678l-1 -1M189 717l-2 -2l1 -2l-1 -3M187 713l-1 -1M214 678l1 0M216 681l2 2l-2 -2M191 718l-1 0l2 0M192 721l-2 0l-2 1M198 711l1 -3l-3 -1M201 725l1 2l2 0M196 707l-3 -1M221 690l0 -1l0 -3l-1 -1M201 723l-2 -1M204 701l1 0M193 718l-1 -1l-2 -2M219 674l0 -2l-3 0M215 684l2 2l-1 2M200 705l-3 -1l0 1l1 -3M206 692l-2 1l0 2M206 696l-1 -2M170 742l-1 1l1 2l0 2M181 738l-2 0M165 730l1 2l-1 2M155 726l0 -1M154 738l2 -1l1 1l2 0M154 748l1 2l-1 1l0 1M166 751l1 1l0 2M174 737l0 -1M179 742l0 0l2 2M167 744l1 0l-1 1l2 0M181 743l0 -2M157 753l2 -1M156 753l-2 -2l0 0M155 745l-2 -2M150 747l0 0M153 756l-1 2l-2 1l-2 -1M154 718l-2 0l0 1M150 735l-2 0l1 -1l1 -1M152 745l-2 1M167 749l2 0l-1 0M158 742l-2 2l-1 -2M158 722l-2 1M170 738l-2 -1l-1 1l-2 0M152 726l0 0l1 0l2 -2M154 733l-2 2M152 724l-2 -1M150 745l0 2l1 -1M172 748l1 1M166 741l1 2M171 737l2 -2M170 729l0 -2l1 -2M152 725l-2 1l-2 1l1 1M156 741l-2 0M150 729l-2 -1l1 -1l-2 0M162 736l1 -2l0 -2M153 742l1 -1l-2 -2M170 736l1 0M161 736l0 1l2 1M173 747l1 0l1 -1M154 741l1 -2l-2 -2l0 -1M152 754l-2 -1l0 1l-1 0M164 738l-1 2M163 730l2 0M155 723l-1 1l0 -1l1 1M162 747l2 -2l1 0M163 746l1 0l2 0M152 751l-1 2l-1 1l1 -2M160 738l-1 -2l-2 1M156 748l-1 1l-1 -2l1 1M158 740l-1 -2l0 -2M180 739l-2 1l0 1l0 2M170 731l0 -1l-2 -1M159 736l0 -2M167 733l-1 0l1 -1M165 739l-2 0l0 0M160 756l1 2l-2 2M170 733l-1 2l-2 0l-2 -1M181 740l0 -2l-2 -2l1 0M156 732l1 0l-1 1M164 729l1 -1M152 727l0 -1M161 750l0 2M170 733l0 0l2 0l1 0M167 743l0 0M165 754l0 1M161 732l1 -2l2 0l-1 1M167 736l0 0M156 737l-1 0M157 734l-2 0l-1 -1M173 747l0 0M171 742l-1 -2M164 749l0 2M171 746l-1 -2l1 1M166 753l-2 2l2 1l1 1M155 733l-2 -2l1 -1M153 755l-1 -2l1 0l1 -2M158 744l-1 -2M154 745l0 1M151 754l-2 1M154 718l2 2l-2 -2l-1 2M167 745l-1 0M153 721l-2 -1M170 731l1 2l2 -1l2 -2M156 731l1 -1M162 750l2 -2M165 729l0 -1l1 -1M173 744l2 -1M156 733l-1 -2M174 746l2 -2l-1 -1M156 721l2 -1l-2 1l0 -1M154 730l2 -2l1 1M159 752l0 -2l-1 1l0 0M167 733l-1 1l-1 -1l1 1M170 742l1 1l-1 1l0 0M151 732l1 -1l-1 0l-1 2M149 753l0 -2M160 727l0 1l-2 1l1 -2M159 741l-1 -1M170 732l1 0M171 737l-1 0M157 742l1 2l1 -1M171 740l-1 -1l1 1M153 736l1 1l0 -1M167 753l2 -2l-2 1l1 1M157 728l2 0l2 1M169 746l-1 0l-2 -2l1 -2M153 723l-1 2l-2 -1M152 740l-1 1M166 728l2 0M175 745l0 -2M93 745l1 -2l-2 1M136 744l-1 -1l-1 2l1 -2M139 744l1 1l1 1l-1 0M98 745l0 2l1 -1M141 748l0 -1M103 751l2 -2l2 0M107 749l0 1M121 744l0 0l1 -2l-2 -2M103 750l-1 0M112 747l-1 0l-1 1M92 746l-1 -2l-2 2M136 746l0 -2l0 -1M137 744l1 0l1 1l-2 1M144 752l1 2l-1 -2l1 2M85 740l2 -1M98 748l2 1l-2 -2l0 -1M110 750l-1 -1l-2 2M121 745l1 0M80 738l-2 -2M128 745l0 -1l0 -2M101 747l0 0l0 -1l0 1M128 742l-1 -2M133 742l1 -2M127 743l1 1l-2 -1l-1 2M95 746l-1 1l-1 -2M141 750l-2 1l-2 2M129 746l-2 1M79 737l1 -1M123 744l1 0l0 1l0 2M106 749l1 2M105 752l-2 1M127 743l0 -1l0 -2l0 1M111 751l1 -1l1 2M140 747l-2 -1l0 -1l-1 0M79 739l-2 -2M118 748l-2 0M130 744l2 0M85 740l1 -2l1 2l0 -2M114 748l0 1l0 0l-2 0M125 745l1 2M101 749l-1 -1l-1 0l1 -2M143 747l1 2l0 -1l1 1M131 745l1 0l-2 0l0 1M80 738l2 0l-1 2M132 742l-1 0M119 748l-2 -1l-1 1l1 -1M116 746l1 2l0 1l-2 -1M112 747l-2 0l-1 -1M121 745l2 -2l0 0M78 737l-1 -2l-1 1M105 751l-1 1l1 1l-2 2M109 748l-1 1l-2 0M114 746l-2 -1M138 745l-1 -2M88 743l-2 -1M105 748l-1 1M93 743l-1 0M133 744l1 -1l2 0M141 749l1 0l-2 1M98 747l-2 0l-1 1M84 743l2 1l-1 1M136 746l0 1M127 742l2 1M99 746l-2 -2l1 1l0 0M76 739l0 0M79 738l-1 -2l-2 -1l0 -1M92 746l2 0l2 -1M105 751l-2 1l0 1l1 -2M98 747l0 -1l1 -2M143 748l1 -2l2 -1M793 571l1 -2l-2 -2M803 587l2 -1M803 580l-1 2l0 -2M803 594l1 -1l-2 -1M797 569l-1 -3l-1 2l-1 1M794 606l-1 -1M803 564l1 2M806 613l1 0l-2 2l-1 -2M796 581l1 -1l-2 0l0 2M794 617l-2 -3l-1 -1M802 623l-2 0M805 590l-3 0M801 651l2 0l-3 0M802 602l2 -2l-1 2l-1 1M794 586l-2 0l2 -3l0 -3M797 597l-1 2l-2 1M806 603l-2 -3M799 616l-1 0l-3 -2l1 -1M802 602l1 -1M803 611l-3 -1M793 614l0 -1M791 565l2 -2l2 0M805 627l-3 1l0 -2l0 -1M805 618l0 -1M800 642l0 0l1 -1l2 2M803 595l1 -2l-1 2M800 565l-2 -1l2 -3l-2 2M797 608l0 -1l-3 -1M805 561l-2 0l0 -1M798 650l-2 2M799 643l1 1l1 -3l-2 -3M801 572l-1 2l-2 -3l0 -2M802 613l-1 0M803 569l1 0l-1 -1l0 -1M802 647l-2 -2l-2 2M803 597l0 1l-2 2M804 580l1 0l-2 1M792 575l0 -1l1 -3M801 561l-2 1l-2 1M802 621l-2 1l-1 0l-1 0M793 578l-3 2l-3 2l0 1M805 608l-1 1l1 2l2 1M796 586l0 2l0 -2l0 -2M799 629l-2 -1l0 -1l2 0M800 650l0 2M805 578l0 0l-2 -1l-3 2M803 642l-2 -2M799 611l-2 -2l-2 2l1 2M804 583l-1 0l2 -1l1 -1M794 583l1 2l1 1M804 601l0 -1l1 0M799 586l1 1l2 0l0 0M800 576l1 2M805 622l-2 -1l1 -1M800 609l-2 -2l-1 -2l-1 -2M805 577l2 2l1 1l-1 -3M798 576l-1 -3M805 568l-3 2l-1 2M804 632l-2 2l0 -2l-2 1M795 560l-2 1l0 -2l-1 -1M797 567l-2 -1M798 615l0 0l-2 0M794 629l-2 -2l-2 -2M803 644l-1 1M798 650l2 0l0 -2M803 620l1 2M804 596l0 2l-3 2l-1 -1M799 642l-1 1l2 0l-2 -1M804 650l-3 2l0 1l1 0M805 578l1 1M798 621l-3 -1M800 594l-2 -1l-2 1l1 -3M790 583l2 -3l-3 -3M797 575l-1 0l-1 0M800 601l0 1M806 637l-1 1l-1 -1l0 0M792 562l-1 0l0 2M805 602l-1 -1l-1 1l-2 -3M796 622l2 -2l2 0l-2 -2M800 632l2 -1l2 1M802 626l1 2M806 577l1 -2M794 618l-2 -2l2 -2l-3 -2M801 587l0 2l0 2l0 -2M792 582l-2 2M805 655l-1 2l2 1l-2 -1M803 600l1 1l1 0l0 0M802 646l-2 -2M795 590l2 -1l2 2M795 597l-2 -1l-1 0l-2 1M793 563l-1 0M805 611l-1 0M799 596l1 -2M797 636l0 -1l-2 0l-1 2M798 651l-2 2l1 -3M792 623l0 2l-3 2l-3 0M796 642l2 -3M791 622l0 0M798 598l0 2l1 2l2 0M793 594l-3 1l-2 0l2 -1M797 645l2 2M792 576l-2 2l-3 1l0 -2M801 565l-2 1l-2 -1l2 -3M794 626l1 -3l-2 -1M805 565l1 2l0 -2M803 640l-1 -1M803 657l-1 -2M806 561l-1 1M798 603l1 2M795 577l1 1M790 566l0 -2M804 658l0 1l0 2l-1 -2M799 572l2 -2l2 -3l-2 -3M802 616l-1 2l0 -2M798 615l2 1M800 616l1 2l-1 -1l2 2M799 621l1 0l-2 -1l-2 0M805 647l-1 1l1 2l-1 -1M795 628l-2 -1l0 2M803 578l-1 -3" fill="none" stroke="#000" stroke-width="1.3"/>
<path d="M249.4 678.4 L253.8 685.8 L254.1 696.2 L250.1 705 L243.4 713.9 L236.1 722.8 L227.2 730.1" fill="none" stroke="#000" stroke-width="1.6" stroke-dasharray="3 2 1 3 4 2"/>
<path d="M255.3 662.2 L267.6 663.1 L284.8 664.6M311 665.5L334 662" fill="none" stroke="#000" stroke-width="1.2" stroke-dasharray="6 3 9 4"/>
<path d="M783.6 643.2 L783.3 644 L783 644.6 L782.9 645.2 L782.9 645.6 L783.2 646.2 L783.6 646.8 L783.9 647.5 L784.4 648.3 L784.6 649.2 L784.6 650.1 L784.5 650.9 L784.1 651.6 L784.1 652 L784.4 652.5 L784.8 653.2 L785 654.2 L784.8 655.2 L784.4 655.9 L784.3 656.4 L784.5 656.9 L784.9 657.6 L785.1 658.5 L785.1 659.4 L785 660.1 L785 660.8 L785.1 661.4 L785.3 661.9 L785.7 662.5 L785.7 663.3 L785.5 664.1 L785.3 664.9 L785.1 665.6 L784.8 666.3 L784.7 666.9 L784.6 667.5 L784.5 668.2 L784.4 669 L784.3 669.7 L784.1 670.4 L783.9 671.2 L783.7 671.9 L783.4 672.5 L783.6 673.2 L783.8 673.9 L784 674.6 L784.2 675.2 L784.5 675.8 L784.9 676.5 L785.2 677.2 L785.5 677.9 L785.7 678.7 L785.9 679.5 L786 680.2 L786.2 680.7 L786.6 681.2 L787.1 681.8 L787.6 682.5 L788.1 683.2 L788.4 684 L788.5 684.8 L788.6 685.4 L788.9 685.7 L789.6 686.2 L790.3 686.8 L790.7 687.7 L790.8 688.7 L790.6 689.5 L790.6 690 L790.9 690.4 L791.4 690.9 L792 691.7 L792.2 692.7 L792.1 693.7 L791.9 694.6 L791.7 695.2 L791.8 695.6 L792.3 696 L792.9 696.6 L793.6 697.3 L793.9 698.3 L794 699.3 L793.9 700.1 L794 700.6 L794.3 700.8 L795.2 701.1 L796.2 702.1 L795.9 703.2 L795.3 703.9 L794.7 704.3 L794.6 704.7 L794.8 705.4 L795 706.3 L794.7 707.3 L794.1 708.1 L793.4 708.6 L792.9 708.9 L792.8 709.4 L792.8 710.2 L792.6 711.1 L792 711.9 L791.3 712.5 L790.8 712.9 L790.6 713.4 L790.7 714.1 L790.3 714.9 L789.7 715.6 L789 716.1 L788.5 716.5 L788.2 717 L787.9 717.6 L787.6 718.3 L787.3 719 L786.9 719.7 L786.3 720.3 L785.9 720.8 L785.4 721.3 L785 721.9 L784.7 722.5 L784.4 723.1 L784 723.7 L783.6 724.2 L783.7 724.9 L783.8 725.7 L783.9 726.4 L784 727.1 L784.1 727.7 L784.2 728.4 L784.5 729.1 L784.7 729.8 L784.9 730.5 L785.1 731.3 L785.1 732.1 L785.1 732.9 L785.2 733.6 L785.4 734.3 L785.8 734.7 L786.4 735.2 L787 735.8 L787.5 736.5 L787.8 737.3 L788 738 L788.3 738.5 L788.7 738.8 L789.4 739.1 L790.2 739.7" fill="none" stroke="#00446b" stroke-width="2.2"/>
<path d="M783.6 643.2 L783.3 644 L783 644.6 L782.9 645.2 L782.9 645.6 L783.2 646.2 L783.6 646.8 L783.9 647.5 L784.4 648.3 L784.6 649.2 L784.6 650.1 L784.5 650.9 L784.1 651.6 L784.1 652 L784.4 652.5 L784.8 653.2 L785 654.2 L784.8 655.2 L784.4 655.9 L784.3 656.4 L784.5 656.9 L784.9 657.6 L785.1 658.5 L785.1 659.4 L785 660.1 L785 660.8 L785.1 661.4 L785.3 661.9 L785.7 662.5 L785.7 663.3 L785.5 664.1 L785.3 664.9 L785.1 665.6 L784.8 666.3 L784.7 666.9 L784.6 667.5 L784.5 668.2 L784.4 669 L784.3 669.7 L784.1 670.4 L783.9 671.2 L783.7 671.9 L783.4 672.5 L783.6 673.2 L783.8 673.9 L784 674.6 L784.2 675.2 L784.5 675.8 L784.9 676.5 L785.2 677.2 L785.5 677.9 L785.7 678.7 L785.9 679.5 L786 680.2 L786.2 680.7 L786.6 681.2 L787.1 681.8 L787.6 682.5 L788.1 683.2 L788.4 684 L788.5 684.8 L788.6 685.4 L788.9 685.7 L789.6 686.2 L790.3 686.8 L790.7 687.7 L790.8 688.7 L790.6 689.5 L790.6 690 L790.9 690.4 L791.4 690.9 L792 691.7 L792.2 692.7 L792.1 693.7 L791.9 694.6 L791.7 695.2 L791.8 695.6 L792.3 696 L792.9 696.6 L793.6 697.3 L793.9 698.3 L794 699.3 L793.9 700.1 L794 700.6 L794.3 700.8 L795.2 701.1 L796.2 702.1 L795.9 703.2 L795.3 703.9 L794.7 704.3 L794.6 704.7 L794.8 705.4 L795 706.3 L794.7 707.3 L794.1 708.1 L793.4 708.6 L792.9 708.9 L792.8 709.4 L792.8 710.2 L792.6 711.1 L792 711.9 L791.3 712.5 L790.8 712.9 L790.6 713.4 L790.7 714.1 L790.3 714.9 L789.7 715.6 L789 716.1 L788.5 716.5 L788.2 717 L787.9 717.6 L787.6 718.3 L787.3 719 L786.9 719.7 L786.3 720.3 L785.9 720.8 L785.4 721.3 L785 721.9 L784.7 722.5 L784.4 723.1 L784 723.7 L783.6 724.2 L783.7 724.9 L783.8 725.7 L783.9 726.4 L784 727.1 L784.1 727.7 L784.2 728.4 L784.5 729.1 L784.7 729.8 L784.9 730.5 L785.1 731.3 L785.1 732.1 L785.1 732.9 L785.2 733.6 L785.4 734.3 L785.8 734.7 L786.4 735.2 L787 735.8 L787.5 736.5 L787.8 737.3 L788 738 L788.3 738.5 L788.7 738.8 L789.4 739.1 L790.2 739.7" fill="none" stroke="#000" stroke-width="0.5" transform="translate(-1.3,0)"/>
<path d="M606 673.8 L606.6 674.1 L607.2 674.3 L607.9 674.5 L608.5 674.7 L609.2 674.9 L609.9 675.2 L610.7 675.5 L611.3 675.9 L612 676.2 L612.6 676.6 L613.1 676.9 L613.7 677 L614.3 677 L615.1 677 L616 677.1 L616.8 677.5 L617.5 678.1 L617.9 678.7 L618.3 679.2 L618.8 679.5 L619.3 679.6 L620.1 679.7 L620.9 680 L621.7 680.5 L622.3 681.2 L622.8 682 L623.1 682.8 L623.3 683.5 L623.5 684.1 L623.9 684.4 L624.4 684.7 L625.1 684.9 L626 685.2 L626.8 685.6 L627.6 686.2 L628.2 687.1 L628.5 687.9 L628.8 688.3 L629.2 688.3 L630 688 L631.1 687.9 L632.3 688.1 L633.1 688.8 L633.6 689.5 L633.9 690 L634.3 690.2 L634.9 690.1 L636.1 690.1 L637 690.6 L637.5 691.6 L637.6 692.5 L637.6 693.3 L637.7 693.6 L638.2 693.9 L639 694.3 L639.6 695 L640 695.9 L640.1 696.8 L640.1 697.4 L640.5 697.9 L640.9 698.3 L641.5 698.6 L642.1 699.1 L642.8 699.6 L643.3 700.2 L643.8 700.9 L644.2 701.5 L644.6 702.1 L644.9 702.7 L645.4 703.2 L645.8 703.6 L646.4 704.1 L646.9 704.6 L647.5 705.1 L648 705.8 L648.4 706.4 L648.7 707.1 L649.1 707.7 L649.4 708.3 L649.8 708.8 L650.2 709.3 L650.9 709.7 L651.6 710.1 L652.2 710.6 L652.8 711.1 L653.4 711.6 L654 712.1 L654.5 712.6 L655.1 713.1 L655.6 713.5 L656.2 713.9 L656.8 714.2 L657.5 714.2 L657.5 714.9 L657.6 715.7 L657.7 716.6 L657.5 717.4 L657.2 718.1 L657.1 718.6 L657.2 719.1 L657.5 719.8 L657.8 720.7 L657.8 721.6 L657.4 722.5 L656.9 723.1 L656.6 723.5 L656.4 723.9 L657.1 724.2 L657.8 724.7 L658.4 725.4 L658.9 726.3 L659 727.4 L659 728.3 L659.1 728.9 L659.2 729.3 L659.7 729.6 L660.5 729.8 L661.4 730.2 L662.2 730.8 L662.8 731.8 L662.8 732.7 L662.9 733 L663.7 732.8 L664.9 732.9 L665.9 733.7 L666.1 734.8 L666.1 735.4 L666.4 735.6 L667.2 735.6 L668.3 736.1 L668.8 737.1 L668.9 738 L669 738.8 L669 739.4 L669.2 739.9 L669.6 740.3 L670.2 740.7 L670.8 741.3 L671.3 742 L671.8 742.8 L672.1 743.6 L672.3 744.4 L672.6 745.1 L673 745.5 L673.5 745.8 L674.3 746.1 L675 746.5 L675.8 747 L676.3 747.7 L676.8 748.3 L677.2 748.8 L677.7 749.2 L678.3 749.6 L678.9 750 L679.6 750.5 L680.2 751.3 L680.3 752 L680.4 752.8 L680.4 753.5 L680.5 754.2 L680.6 754.9 L680.8 755.6 L681 756.3 L681.2 757 L681.3 757.8 L681.4 758.6 L681.5 759.4 L681.4 760.1 L681.5 760.7 L681.7 761.4 L682 762.1 L682.2 762.9 L682.7 763.7 L683.3 763.5 L683.7 763.2 L684.1 762.5 L684.6 761.8 L685.4 761.3 L686.2 761 L686.8 760.8 L687.1 760.4 L687.4 759.7 L687.9 758.9 L688.7 758.3 L690.1 758.2 L690.7 758.8 L691.1 759.1 L691.6 759 L692.3 758.9 L693.3 759 L694.3 759.5 L695 760.3 L695.4 761 L695.8 761.4 L696.2 761.5 L696.9 761.3 L697.8 761.1 L698.9 761.1 L699.5 761.6 L699.5 762.5 L699.4 763.2 L699.5 763.6 L700 763.9 L701 764.1 L702 764.9 L702.4 766 L702.2 766.9 L702.1 767.3 L702.6 767.5 L703.6 768 L704.1 769 L704 770.2 L703.6 771 L703.5 771.3 L704.1 771.7 L704.7 772.4 L705 773.3 L705.1 774.3 L705.1 775.2 L705.1 775.8 L705.5 776.1 L706.2 776.5 L706.9 777.2 L707.3 778 L707.5 778.9 L707.7 779.5 L708 779.9 L708.6 780.3 L709.2 780.8 L709.9 781.3 L710.4 782 L710.9 782.7 L711.3 783.4 L711.7 784 L712 784.6 L712.3 785.2 L712.7 785.7 L713.2 786.3 L713.7 786.9 L714.2 787.5 L714.7 788.4 L714.4 789.1 L714.1 789.8 L713.8 790.5 L713.5 791.1 L713.3 791.7 L713.2 792.4 L713.1 793.1" fill="none" stroke="#000" stroke-width="1.5"/>
<path d="M182.1 6 L193.2 20.8 L199.3 38 L200.6 67.6 L195.7 99.6 L188.3 111.9 L183.3 134.1 L176 148.9 L163.6 173.5 L146.4 203 L145.2 206 L151.3 220.8 L163.6 228.2 L168.6 255.3 L173.5 279.9 L171 304.5 L176 329.2 L183.3 366.1 L180.9 390.7 L176 406 L176 406 L163.6 430.6 L159.9 455.3 L153.8 477.4 L139 499.6 L131.6 534.1 L129.2 578.4 L126.7 606 L126.7 606 L127.9 630.6 L134.1 642.9M6 257 L38 255.3 L67.6 247.9 L111.9 233.1 L153.8 223.2 L178.4 218.3 L206 208.5 L206 198.1 L230.6 183.3 L267.6 171 L304.5 161.2 L334.1 158.7 L366.1 146.4 L383.3 111.9 L403 99.6M406 124.2 L398.1 121.8 L378.4 109.4 L363.6 92.2 L339 72.5 L311.9 55.3 L299.6 54 L287.3 59 L267.6 60.2 L252.8 55.3 L250.3 42.9 L246.6 15.9 L240.5 6M206 66.3 L220.8 60.2 L228.2 40.5 L229.4 20.8 L240.5 6M406 121.8 L410.9 109.4 L423.2 92.2 L430.6 67.6 L455.3 55.3 L462.7 42.9 L471.3 25.7 L472.5 6M406 129.2 L442.9 134.1 L487.3 139 L516.8 139 L543.9 156.2 L578.4 161.2 L606 153.8 L606 139 L613.4 148.9 L635.6 150.1 L659 142.7 L687.3 126.7 L711.9 111.9 L743.9 95.9 L773.5 79.9 L806 71.3M659 142.7 L672.5 156.2 L675 166.1 L684.8 176 L687.3 185.8 L704.5 189.5 L743.9 182.1 L778.4 174.7 L806 173.5M714.4 189.5 L724.2 203M588.3 6 L587 20.8 L600.6 38 L606 42.9M388 112 L396 106 L404 108 L408 116 L405 126 L396 130 L389 124 L388 112M396.9 132.1 L396.9 206 L395.7 279.9 L400.6 329.2 L403 363.6 L393.2 383.3 L363.6 400.6 L339 406 L341.5 406 L314.4 435.6 L284.8 465.1 L255.3 473.7 L206 476.2 L206 476.2 L153.8 477.4 L134.1 473 L92.2 476.2 L42.9 463.9 L6 460.7M408.5 368.6 L430.6 343.9 L455.3 324.2 L475 299.6 L487.3 277.4 L497.1 255.3 L504.5 240.5 L514.4 235.6 L521.8 238 L534.1 250.3 L541.5 272.5 L553.8 304.5 L568.6 324.2 L583.3 351.3M408.5 368.6 L442.9 363.6 L487.3 361.2 L511.9 356.2 L543.9 351.3 L583.3 351.3M583.3 351.3 L593.2 339 L606 324.2 L606 324.2 L642.9 304.5 L679.9 284.8 L709.4 272.5 L726.7 257.7 L753.8 242.9 L783.3 233.1 L806 223.2M583.3 351.3 L606 351.3 L606 351.3 L630.6 361.2 L665.1 363.6 L704.5 371 L734.1 373.5 L763.6 368.6 L793.2 351.3 L806 343.9M583.3 351.3 L588.3 366.1 L593.2 383.3 L600.6 406 L612.2 406 L628.2 423.2 L633.1 430.6 L630.6 467.6 L629.4 499.6 L635.6 524.2 L646.6 546.4 L651.6 573.5 L659 606 L660.2 606 L670 625.7 L687.3 638 L704.5 659 L716.8 684.8 L729.2 709.4 L741.5 734.1 L748.9 758.7 L753.8 790.7M628.2 423.2 L645.4 440.5 L667.6 452.8 L704.5 465.1 L753.8 472.5 L798.1 487.3 L806 494.7M583.3 351.3 L573.5 368.6 L563.6 383.3 L553.8 406 L543.9 406 L524.2 428.2 L511.9 447.9 L492.2 460.2 L462.7 471.3 L439.3 471.3M406 406 L415.9 430.6 L430.6 455.3 L439.3 471.3 L430.6 492.2 L420.8 514.4 L406 534.1 L406 534.1 L378.4 563.6 L343.9 588.3 L309.4 606 L309.4 606 L307 629.4M13.4 659 L42.9 649.1 L67.6 642.9 L104.5 642.9 L139 642.5 L163.6 647.9 L188.3 655.3 L206 652.8 L206 651.6 L230.6 644.2 L267.6 642.9 L287.3 638 L307 629.4 L311.9 623.2 L334.1 625.7 L358.7 631.9 L378.4 635.6 L406 623.2 L406 623.2 L430.6 617.1 L467.6 614.6 L504.5 619.5 L534.1 624.5 L553.8 626.9 L578.4 633.1 L606 640.5 L606 640.5 L630.6 639.3 L667.6 647.9 L704.5 659 L724.2 663.9 L753.8 661.4 L778.4 654 L793.2 638M255.3 473.7 L247.9 499.6 L230.6 534.1 L215.9 553.8 L213.4 578.4 L206 606 L206 606 L200.6 630.6 L188.3 655.3M92.2 655.3 L104.5 670 L134.1 673.7 L158.7 684.8 L178.4 670 L188.3 655.3M6 661.4 L13.4 659 L12.2 630.6 L6 615.9M806 536.5 L800.6 558.7 L788.3 583.3 L784.6 606 L783.3 606 L788.3 630.6 L783.3 655.3 L793.2 670 L806 692.2M591 351 L589.9 355 L587 357.9 L583 359 L579 357.9 L576.1 355 L575 351 L576.1 347 L579 344.1 L583 343 L587 344.1 L589.9 347 L591 351M403 364 L408 372 L414 380 L420 392M587 7 L587 29 L602 47 L602 72 L591 108 L609 144 L616 148M513 236 L537 230 L558 202 L590 170 L620 150 L659 143M400 126 L406.5 140 L410.5 161.7 L426 160 L438 169.6 L446 199 L454 215 L477.5 222.8 L495 232 L513 236" fill="none" stroke="#84701a" stroke-width="1.1"/>
<path d="M6 105.3 L155 105.3 L156.7 109.4 L161.2 114.4 L160.7 121.8 L156.2 129.2 L147.6 136.5 L141.5 143.9 L137.8 149.3 L188.3 149.3M207 104.5 L311 104.5 L309.5 91 L406 90.5 L504.5 93.4 L606 96.6 L635.6 96.4 L766 95.9 L787 94.2 L806 98.4M143.9 238 L300 238 L406 238.5 L492 238.8 L588 238.8 L678.7 238M678.7 238 L704.5 230.6 L716.8 225.7 L731.6 220.8 L743.9 220.3 L806 223.2M299.6 238 L307 246.6 L304.5 280 L298.4 329 L291 406 L284.8 455 L280 509.4 L281 553.8 L283.6 606 L284.8 652M492.2 238.8 L499.6 277.4 L509.4 329.2 L514.4 366.1 L520.5 406M6 415.4 L80 415.4M44 594.4 L186 594.4M345 595.2 L537.8 595.2M345.2 595.2 L341.5 606 L348.9 613.4 L356.2 620.8 L358.7 638M541 611 L606 623.2 L744 631.9" fill="none" stroke="#000" stroke-width="1.1" stroke-linejoin="round"/>
<path d="M678.6 237.8 L678.6 238.5 L678.4 239.3 L678.1 240.1 L677.6 240.9 L677.1 241.5 L676.5 242 L676 242.5 L675.6 242.9 L675.3 243.5 L675 244.1 L674.6 244.8 L674.2 245.5 L673.7 246.1 L673.2 246.7 L672.7 247.3 L672.3 247.8 L671.7 248.2 L671.2 248.5 L670.7 249 L670.1 249.5 L669.6 250 L669.1 250.5 L668.5 251 L667.9 251.5 L667.2 251.8 L666.7 252.2 L666.2 252.6 L665.7 253.1 L665.2 253.7 L664.6 254.3 L663.9 254.7 L663.3 255.1 L662.7 255.3 L662.6 255.9 L662.6 256.6 L662.5 257.5 L662.2 258.3 L661.8 259.1 L661.3 259.8 L660.8 260.4 L660.5 260.9 L660.3 261.4 L660.3 262.1 L660.3 262.9 L660.1 264 L660.8 264.6 L661.2 265.4 L661.5 266 L661.8 266.4 L662.4 266.4 L663.4 266.4 L664.4 266.7 L665.2 267.3 L665.6 268.1 L665.9 268.8 L666.2 269 L666.8 269 L667.7 269.1 L668.6 269.6 L669.3 270.6 L669.3 271.6 L669.3 272.1 L669.8 272.2 L670.7 272.4 L671.5 273.1 L671.8 274.3 L671.8 275.2 L671.9 275.5 L672.6 275.5 L673.6 275.9 L674.3 276.7 L674.6 277.6 L674.8 278.2 L675.2 278.3 L676 278.3 L677 278.6 L677.8 279.2 L678.2 280 L678.5 280.6 L678.9 280.7 L679.7 280.8 L680.6 281.1 L681.3 281.8 L681.7 282.5 L682 283.1 L682.3 283.5 L683 283.3 L683.8 283.2 L684.7 283.3 L685.5 283.6 L686.1 283.9 L686.7 284 L687.3 283.9 L688.1 283.9 L689 284 L689.7 284.1 L690.4 284.3 L691.1 284.4 L691.8 284.4 L692.4 284.4 L693.2 284.3 L693.9 284.3 L694.7 284.3 L695 285 L695.3 285.7 L695.5 286.3 L695.8 286.9 L696.2 287.5 L696.6 288.1 L697 288.7 L697.4 289.3 L697.8 290 L698.1 290.7 L698.4 291.4 L698.7 292.1 L698.9 292.8 L699 293.5 L699.2 294.2 L699.4 294.8 L699.7 295.2 L700.3 295.8 L700.8 296.4 L701.2 297.3 L701.4 298.2 L701.4 298.9 L701.5 299.5 L701.9 299.8 L702.6 300.2 L703.3 300.7 L704 301.5 L704.3 302.4 L704.5 303.1 L704.7 303.7 L705 304.1 L705.5 304.3 L706.1 304.9 L706.6 305.5 L707.2 306.3 L707.5 307.3 L707.6 308.2 L707.5 309.2 L707.2 310 L706.9 310.6 L706.8 311.2 L706.7 311.8 L707.3 312.1 L708 312.5 L708.6 313.2 L709.1 314.1 L709.3 315.1 L709.4 315.9 L709.4 316.6 L709.6 317.1 L710.1 317.4 L710.7 317.6 L711.6 318 L712.4 318.6 L712.9 319.4 L713.1 320.2 L713.3 320.7 L713.8 320.9 L714.5 321.2 L715.3 321.5 L716 322.2 L716.4 322.9 L716.7 323.6 L716.9 324.2 L717.2 324.8 L717.6 325.3 L718.1 325.8 L718.6 326.4 L719 327 L719.5 327.7 L719.9 328.4 L720.3 329.1 L720.6 329.8 L720.9 330.5 L721.3 331.2 L721.7 331.8 L722.2 332.3 L722.7 332.6 L723.3 333 L724 333.3 L724.6 333.7 L725.2 334.2 L725.8 334.6 L726.4 335.1 L726.9 335.5 L727.4 335.9 L728 336.3 L728.6 336.6 L729.2 336.9 L729.9 337.3 L730.5 337.7 L731.1 338.1 L731.7 338.6 L732.2 339.2 L732.7 339.7 L733.2 340.3 L733.6 340.8 L734 341.2 L734.5 341.6 L735 342 L735.7 342.2 L736.5 342.7 L737 343.5 L737.2 344.3 L737.3 344.9 L737.7 345.2 L738.4 345.3 L739.4 345.7 L740.1 346.3 L740.5 347.2 L740.6 347.8 L741 348 L741.5 348.2 L742.2 348.4 L743 348.7 L743.8 349.1 L744.5 349.6 L745.1 350.3 L745.6 351 L745.9 351.8 L746.1 352.6 L746.2 353.3 L746.4 353.8 L746.6 354.3 L747.2 354.4 L748 354.8 L748.7 355.6 L749 356.7 L749 357.5 L749.1 358 L749.6 358.1 L750.6 358.3 L751.5 358.9 L751.9 359.8 L752.1 360.6 L752.4 360.9 L753 361 L753.9 361.2 L754.8 361.7 L755.5 362.4 L755.9 363.1 L756.1 363.6 L756.6 364 L757.2 364.2 L758 364.5 L758.7 365.1 L759.2 365.9 L759.4 366.7 L759.7 367.2 L760.1 367.7 L760.6 368.1 L761.2 368.6 L761.7 369.3 L762.1 370 L762.4 370.7 L762.8 371.2 L763.3 371.7 L763.8 372.2 L764.4 372.7 L764.9 373.3 L765.3 374 L765.7 374.5 L766.2 375 L766.7 375.4 L767.4 376 L767.2 376.8 L767 377.5 L766.9 378.2 L766.8 378.9 L766.9 379.6 L766.9 380.4 L766.8 381.2 L766.5 382 L766.3 382.7 L766.1 383.3 L766.6 383.7 L767.3 384 L767.9 384.5 L768.5 385.2 L769 386 L769.2 386.7 L769.5 387.3 L769.9 387.7 L770.5 388.1 L771.2 388.5 L771.9 389.2 L772.4 390.1 L772.6 390.9 L772.6 391.1 L773 391.5 L773.8 391.9 L774.6 392.5 L775.2 393.3 L775.4 394.3 L775.4 395 L775.6 395.4 L776 395.7 L776.7 396.1 L777.5 396.6 L778.2 397.3 L778.6 398.2 L778.8 399.2 L778.7 400.1 L778.6 400.7 L778.7 401.3 L779.1 401.6 L779.6 401.9 L780.3 402.3 L780.9 403 L781.5 403.7 L782 404.5 L782.3 405.4 L782.6 406.2 L783 406.9 L783.4 407.4 L783.9 407.7 L784.5 407.8 L785.2 407.9 L786.1 408 L786.9 408.2 L787.8 408.5 L788.6 408.9 L789.3 409.4 L789.9 409.9 L790.3 410.5 L790.8 410.9 L791.3 411.4 L791.8 411.8 L792.3 412.2 L792.9 412.7 L793.6 413.2 L794.1 413.8 L794.6 414.5 L795 415.2 L795.4 415.8 L795.8 416.3 L796.3 416.7 L797 417.2 L797.6 417.8 L798.1 418.4 L798.3 419.1 L798.5 419.8 L798.8 420.3 L799.3 420.9 L799.7 421.6 L800.1 422.2 L800.5 422.9 L800.8 423.6 L801 424.3 L801.3 425 L801.6 425.5 L802 426.1 L802.5 426.7 L803 427.3 L803.4 428.1 L803.6 428.9 L803.6 429.7 L803.6 430.4 L803.8 430.9 L804.2 431.5 L804.6 432.2 L804.7 433.2 L804.6 434.1 L804.4 434.7 L804.5 435.3 L804.9 435.8 L805.4 436.5 L805.7 437.5 L805.7 438.4M520.3 406 L520.5 406.7 L520.7 407.4 L520.9 408.1 L521 408.8 L521.1 409.6 L521.2 410.3 L521.3 411 L521.4 411.6 L521.6 412.3 L521.8 413 L522 413.7 L522.2 414.4 L522.3 415.2 L522.4 415.9 L522.5 416.5 L522.7 417.2 L523 417.9 L523.2 418.7 L523.2 419.4 L523.1 420.1 L523.2 420.7 L523.5 421.3 L523.7 422.1 L523.8 422.9 L523.8 423.7 L523.7 424.5 L523.6 425.1 L523.7 425.8 L524 426.3 L524.4 427 L524.8 427.7 L525.1 428.5 L525.1 429.4 L525.2 430 L525.3 430.6 L525.6 431.1 L526.1 431.5 L526.7 432.1 L527.2 432.8 L527.6 433.7 L527.7 434.5 L527.7 435.3 L527.7 435.9 L527.9 436.3 L528.2 436.8 L528.7 437.3 L529.2 438.1 L529.4 439.1 L529.2 440.1 L528.9 440.7 L529 441.1 L529.5 441.6 L530 442.4 L530 443.5 L529.7 444.3 L529.6 444.8 L530 445.2 L530.7 445.8 L531.1 446.7 L531.3 447.5 L531.4 448.3 L531.6 448.9 L531.9 449.5 L532.3 449.9 L532.8 450.3 L533.4 450.8 L534 451.3 L534.5 451.9 L535 452.6 L535.3 453.4 L535.5 454.1 L535.7 454.7 L536 455.3 L536.2 455.9 L536.6 456.5 L536.9 457.1 L537.3 457.7 L537.7 458.3 L538.1 458.9 L538.5 459.6 L538.8 460.3 L539.1 460.9 L539.4 461.6 L539.7 462.2 L540 462.6 L540 463.3 L539.9 464.1 L539.8 464.9 L539.5 465.6 L539.4 466.3 L539.3 467 L539.2 467.7 L539.2 468.5 L539 469.3 L538.8 470 L538.6 470.7 L538.5 471.4 L538.4 472.1 L538.3 472.8 L538.3 473.5 L538.2 474.2 L537.9 474.7 L538.6 475.1 L539.2 475.6 L539.7 476.1 L540.2 476.7 L540.7 477.2 L541.1 477.7 L541.5 478.1 L542.1 478.4 L542.7 478.7 L543.5 479.1 L544.1 479.6 L544.7 480.2 L545.1 480.8 L545.5 481.3 L546 480.6 L545.8 481.3 L545.6 482.1 L545.3 482.9 L544.8 483.7 L544.2 484.4 L543.6 484.9 L543 485.4 L542.6 485.8 L542.2 486.2 L542 486.8 L541.7 487.4 L541.4 488.2 L540.8 489.1 L540 489.6 L539.2 490 L538.4 490.2 L537.6 490.4 L536.9 490.6 L536.3 490.8 L535.8 491.2 L535.4 491.6 L535 492.2 L534.5 492.9 L534 493.6 L533.4 494.2 L532.8 494.8 L532.8 495.6 L532.8 496.3 L532.8 497 L532.9 497.5 L533.2 498.1 L533.5 498.7 L533.8 499.4 L534.1 500.2 L534.2 501 L534.2 501.8 L534.1 502.5 L534 503.2 L534 503.8 L534 504.5 L533.9 505.1 L533.8 505.7 L533.6 506.5 L533.5 507.2 L533.3 507.9 L533.1 508.6 L532.8 509.3 L532.6 510 L532.4 510.6 L532.2 511.2 L532.1 511.9 L532 512.6 L531.9 513.3 L531.7 514.1 L531.5 514.7 L531.3 515.4 L531.2 516 L531.2 516.7 L531.1 517.4 L530.9 518.2 L530.6 518.9 L530.4 519.5 L530.3 520.1 L530.2 520.7 L530.1 521.5 L530 522.2 L529.7 523 L529.4 523.7 L529.1 524.3 L529.2 525 L529.4 525.5 L529.7 526.1 L530 526.8 L530.3 527.6 L530.4 528.4 L530.4 529.2 L530.4 529.8 L530.6 530.3 L531.1 530.8 L531.7 531.5 L532 532.4 L532 533.2 L532 533.8 L532.3 534.3 L532.8 534.7 L533.5 535.3 L534 536 L534.3 536.8 L534.5 537.6 L534.5 538.4 L534.4 539.3 L534.1 539.9 L533.9 540.4 L533.8 541 L533.8 541.6 L533.8 542.2 L533.9 543 L533.9 543.8 L533.7 544.7 L533.4 545.6 L532.9 546.3 L532.5 546.8 L532.5 547.3 L532.7 547.8 L533 548.6 L533.2 549.5 L533.1 550.4 L532.8 551.2 L532.6 551.8 L532.5 552.4 L532.8 552.9 L533.1 553.6 L533.2 554.5 L533 555.4 L532.7 556.1 L532.4 556.7 L532.2 557.3 L532.3 557.9 L532.3 558.7 L532.1 559.5 L531.8 560.3 L531.4 560.9 L531.2 561.5 L531.1 562.2 L531 562.8 L531 563.6 L530.9 564.3 L530.7 565.1 L530.5 565.8 L530.3 566.5 L530.1 567.1 L530 567.8 L530 568.5 L529.9 569.2 L529.9 570 L529.8 570.7 L529.6 571.4 L529.5 572.2 L529.3 572.8 L529.2 573.5 L529.4 574.1 L529.7 574.7 L530 575.4 L530.3 576.1 L530.6 576.8 L530.8 577.5 L530.8 578.3 L530.9 578.9 L531.2 579.5 L531.5 580.1 L531.8 580.8 L532 581.6 L532 582.4 L531.9 583.1 L532.1 583.6 L532.4 584.2 L532.9 584.9 L533.2 585.7 L533.2 586.6 L533.2 587.3 L533.3 587.8 L533.8 588.2 L534.4 588.7 L535 589.5 L535.4 590.4 L535.4 591.2 L535.5 591.8 L535.8 592.2 L536.4 592.6 L537 593.3 L537.4 594.3 L537.3 595.2 L537.2 595.9 L537.3 596.3 L537.9 596.8 L538.4 597.6 L538.5 598.7 L538.3 599.6 L538.1 600.1 L538.5 600.4 L539 601.1 L539.3 602.1 L539.1 603.1 L538.8 603.7 L538.8 604.2 L539.3 604.6 L539.9 605.4 L540.2 606.3 L540.2 607.2 L540.1 607.8 L540.3 608.2 L540.8 608.7 L541.3 609.5 L541.5 610.4M186.1 594.5 L185.8 595.2 L185.6 595.9 L185.3 596.6 L185.2 597.2 L185.1 597.9 L185.1 598.8 L184.8 599.6 L184.4 600.3 L184.1 600.9 L183.9 601.5 L183.9 602.2 L183.8 603 L183.7 603.8 L183.4 604.7 L183 605.4 L182.7 605.9 L182.5 606.4 L182.5 607 L182.6 607.9 L182.5 608.8 L182.2 609.7 L181.8 610.4 L181.3 611 L181 611.5 L180.9 612.1 L180.9 612.7 L181 613.4 L180.9 614.3 L180.7 615.2 L180.3 616 L179.7 616.8 L179 617.3 L178.4 617.8 L177.9 618.6 L177.9 619.2 L178.2 619.6 L178.7 620.2 L179.2 620.9 L179.7 621.7 L179.9 622.6 L180 623.6 L180 624.3 L180 625 L180.3 625.4 L180.7 625.8 L181.3 626.3 L182 626.9 L182.6 627.6 L183.1 628.4 L183.3 629.3 L183.4 630.1 L183.4 630.7 L183.7 631.2 L184 631.7 L184.5 632.2 L185 632.8 L185.4 633.5 L185.7 634.3 L185.9 635.1 L186.1 635.9 L186.2 636.6 L186.4 637.2 L186.6 637.9 L186.9 638.5 L187.2 639 L187.6 639.6 L188 640.3 L188.4 640.9 L188.8 641.6 L189.2 642.3 L189.5 643 L189.5 643.7 L189.5 644.4 L189.6 645 L189.8 645.7 L190 646.5 L190.1 647.3 L190.1 648.1 L190.1 648.8 L190.2 649.4 L190.3 650.1 L190.5 650.9 L190.6 651.7 L190.6 652.4 L190.6 653.2 L190.6 653.9 L190.5 654.6 L190.5 655.4 L190.8 655.9 L191.2 656.5 L191.6 657.2 L192 657.8 L192.4 658.6 L192.7 659.4 L192.9 660.1 L193 660.9 L193.2 661.5 L193.5 662 L193.9 662.5 L194.6 663 L195.2 663.6 L195.7 664.4 L196 665.2M740.2 632.4 L741 632.8 L741.7 633.1 L742.3 633.4 L743 633.6 L743.9 633.5 L744.1 634.3 L744.3 635.1 L744.2 636 L744 636.8 L743.9 637.5 L743.9 638 L744.1 638.6 L744.5 639.2 L744.9 640.1 L745 641 L744.9 641.8 L744.8 642.4 L745 642.9 L745.4 643.4 L745.9 644.1 L746.3 645 L746.4 645.9 L746.3 646.4 L746.7 646.9 L747.2 647.3 L747.7 647.6 L748.2 647.9 L748.8 648.1 L749.5 648.5 L750.2 648.8 L750.8 649.3 L751.4 649.9 L752 650.4 L752.8 650.5 L753.6 650.6 L754.2 650.7 L754.8 650.6 L755.4 650.2 L756.2 649.8 L757.1 649.7 L758 649.4 L758.2 648.7 L758.3 648.2 L758.2 647.5 L758.1 646.8 L758 646 L758.1 645.2 L758.3 644.4 L758.5 643.8 L758.6 643.1 L758.7 642.5 L758.7 641.8 L758.7 641.1 L758.8 640.4 L758.9 639.6 L759 638.9 L759.2 638.2 L759.4 637.5 L759.5 636.8 L759.6 636.1 L759.7 635.5 L759.8 634.7 L759.6 634 L759.5 633.3 L759.5 632.5 L759.4 631.8 L759.4 631 L759.3 630.3 L759.3 629.7 L759.1 629 L759 628.3 L758.8 627.6 L758.6 626.8 L758.5 626 L758.5 625.3 L758.5 624.6 L758.4 624 L758.2 623.3 L757.9 622.6 L757.8 621.8 L757.8 621 L757.9 620.2 L757.9 619.6 L757.8 619 L758 618.4 L758.3 617.6 L758.8 616.9 L759.4 616.3 L760 615.9 L760.4 615.5 L760.5 614.9 L760.7 614.1 L761.1 613.3 L761.7 612.6 L762 612.5 L762.6 612.4 L763.2 612.2 L763.7 611.9 L764.4 611.4 L765.1 610.9 L765.9 610.4 L766.7 610.2 L767.6 610 L768.3 610 L769 610 L769.6 609.9 L770.2 610.1 L770.8 610.3 L771.6 610.4 L772.4 610.7 L773.2 611.2 L773.8 611.8 L774.4 612.5 L774.8 613 L775.3 613.4 L775.8 613.7 L776.4 613.9 L777.2 614.1 L778 614.4 L778.8 614.7 L779.5 615.2 L780.1 615.6 L780.7 616 L781.3 616.3 L782 616.4 L782.7 616.5 L783.5 616.6 L784.4 616.8 L785.2 617.1 L785.9 617.5 L786.5 617.8 L787.2 618 L787.8 618.2 L788.4 618.2 L789.1 618.3 L789.9 618.4 L790.6 618.6 L791.4 618.8M198.2 5.6 L199.8 6 L201 7.5 L201 9.4 L199.8 10.9 L198.6 11.3 L198.7 10.8 L200.3 10.3 L202.7 10.5 L204.6 11.9 L205 13.7 L204.1 15.1 L203.7 15.6 L203.6 15.5 L204.3 15.3 L205.4 15.3 L206.8 15.7 L207.9 16.7 L208.4 18.1 L208 19.6 L207 21 L205.6 22 L204.3 22.5 L203.3 22.6 L203.1 22.7 L203.4 23 L204.1 23.5 L204.8 24.4 L205.3 25.6 L205.3 26.9 L204.9 28 L204.4 28.9 L203.9 29.5 L203.8 29.9 L204.2 30.5 L204.9 30.7 L206 30.9 L207.1 31.3 L207.9 32.1 L208.4 33.1 L208.5 34 L208.4 34.8 L208.4 35.4 L208.4 35.8 L208.7 36.2 L209.2 36.7 L209.7 37.3 L210.1 38.1 L210.3 38.9 L210.5 39.8 L210.4 40.6 L210.3 41.4 L210.3 42.1 L210.3 42.7 L210.4 43.2 L210.7 43.7 L211.2 44.2 L211.6 44.9 L212.2 45.6 L212.7 46.4 L212.9 47.5 L212.7 48.3 L212.8 48.5 L213.7 48.5 L215 48.9 L215.9 49.9 L216 51.1 L215.6 51.7 L215.9 51.6 L217.2 51.4 L218.7 52 L219.3 53.4 L219.2 54.6 L218.8 55.7 L218.5 56.1 L218.6 56.6 L218.7 56.8 L219.1 56.5 L219.9 56.3 L221 56.1 L222.4 56.4 L223.6 57.3 L224.6 58.7 L225.2 60.2 L224.8 61.9 L222 59.1 L223.7 58.4 L226.2 58.8 L227.4 60.4 L226.8 62.3 L225.6 62.9 L225.7 62.1 L227.8 61.1 L230.5 61.3 L232 62.9 L231.4 64.8 L231.1 65.6 L230.7 66.1 L230.5 66.3 L230.5 66.4 L231.6 67 L232 67.6 L232.1 68.5 L232 69.6 L231.7 70.7 L230.7 71.8 L229.5 72.6 L228.1 73.3 L226.3 73.3 L225.5 72.9 L226.1 73.1 L227 74.1 L227.3 75.7 L226.6 77 L225.8 78.5 L225.3 78.9 L225.8 78.8 L227 79 L228.1 79.7 L228.7 80.9 L228.8 81.8 L228.8 82.6 L228.8 83.2 L228.8 83.7 L229 84.2 L229.3 84.7 L229.7 85.2 L230.2 85.8 L230.6 86.5 L230.8 87.3 L231 88.2 L231 89.1 L230.5 90 L229.8 90.2 L229.3 90.4 L228.9 90.8 L228.6 91.4 L228.1 92.2 L227.5 92.9 L226.6 93.4 L225.7 93.6 L224.9 93.7 L224.5 93.9 L224.4 94.4 L224.4 95.3 L224.2 96.4 L223.6 97.5 L222.7 98.1 L221.8 98.3 L221.3 98.4 L221.3 98.7 L221.1 100.5 L219.9 101.2 L218.5 101.4 L217.2 100.8 L216.6 99.5 L217 98 L217.4 97.9 L216.8 98.7 L215.2 99.1 L213.8 97.8 L213.7 95.3 L214.7 93.7 L215.1 94.1 L214 95.2 L212.1 95 L210.1 96.1 L207.7 95.6 L207.1 94.6 L208.5 94.9 L210.1 96.9 L210 99.3 L208.2 100.3 L206.6 99.8 L207.1 99.3 L209.1 100.2 L210.6 102.6 L210.1 104.8 L208.2 105.4 L206.4 104.4 L206.7 104.5 L206.8 105.5 L206.2 107 L204.9 108 L203.2 107.8 L201.6 106.5 L201.5 105.5 L200.2 105.1 L199.9 104.9 L200.3 105.2 L200.8 106.2 L200.8 107.5 L199.8 108.9 L198.2 109.3 L197.3 109.1 L197.9 109.2 L199 110.3 L199.2 111.8 L198.5 112.9 L197.6 113.3 L197.5 113.4 L198.2 113.9 L198.8 115 L198.8 116.3 L198.2 117.1 L197.5 117.6 L197.1 117.9 L197.2 118.3 L197.4 119 L197.4 120 L197 120.9 L196.3 121.6 L195.7 122 L195.3 122.5 L195.2 122.9 L195.3 123.6 L195.3 124.4 L195.1 125.2 L194.8 126.1 L194.3 126.8 L193.8 127.5 L193.3 128 L193 128.4 L193 128.9 L193.2 129.5 L193.6 130.2 L193.9 131.2 L194 132.3 L193.6 133.4 L192.8 133.9 L192.6 134 L193.4 134.3 L194.5 135.4 L194.9 136.9 L194 138.1 L192.8 138.4 L192.5 138.1 L193.5 138.6 L194.4 139.9 L193.9 141.6 L192.6 142.5 L190.9 142.9 L189.3 142.7 L188.4 142.4 L188.3 142.3 L188.8 142.8 L189.4 143.8 L189.4 145.3 L188.8 146.8 L187.4 147.9 L185.9 148.3 L184.8 148.3 L185 147.3 L186 147.7 L187.6 148.9 L188.8 150.9 L189 153 L188.2 154.5 L186.8 155 L185.7 154.9 L185.5 154.5 L186.1 154.6 L187.1 155.4 L187.7 156.9 L187.2 158.6 L185.6 159.6 L183.5 159.6 L181.9 159 L181.2 158.4 L181.6 158.5 L182.1 159.5 L182 161 L181 162.1 L179.4 162.7 L178 162.6 L177.4 162.4 L177.7 162.6 L178.4 163.6 L178.8 165 L178.5 166.4 L177.6 167.2 L176.9 167.5 L176.8 167.7 L177.2 168.3 L177.8 169.3 L177.9 170.4 L177.4 171.4 L176.6 172 L176 172.4 L175.7 172.7 L175.6 173.2 L175.6 174 L175.5 174.9 L175.1 175.7 L174.4 176.4 L173.7 176.9 L173.2 177.3 L172.8 177.7 L172.7 178.3 L172.7 179 L172.5 180 L171.8 180.8 L170.9 181.2 L170.5 181.5 L170.6 182 L171 182.9 L170.6 184 L169.6 184.7 L168.8 184.8 L168.9 185 L169.5 185.8 L169.9 187.3 L169.7 188.4 L169.2 189.4 L168.5 190 L167.7 190.4 L167 190.5 L166.7 190.6 L166.7 190.9 L167 191.4 L167.2 192.2 L167.2 193.3 L166.7 194.3 L165.7 195.3 L163.5 195.7 L161.4 194.9 L160.8 194 L161.6 194.3 L162.4 195.9 L161.6 197.7 L159.6 198.4 L157.6 197.8 L157.4 197 L158.8 197.4 L160.3 199.4 L160.3 201.7 L159.6 202.9 L158.7 203.7 L158.1 204.2 L157.5 204.6 L157.2 204.8 L157.4 205 L157.9 205.3 L158.9 205.7 L159.9 206.4 L160.7 207.5 L161.1 208.8 L160.9 210.1 L159.7 211.5 L157.8 212.2 L156.2 212.2 L155.7 211.9 L156 212.1 L156.8 212.9 L157 214.2 L156.4 215.6 L155.6 217 L154.8 218 L154.4 218.3 L154.8 218.3 L155.7 218.5 L156.9 219 L157.9 219.9 L158.4 220.9 L158.6 221.9 L158.5 222.8 L158.5 223.3 L158.7 223.7 L159.2 224.1 L159.9 224.5 L160.6 226.3 L159.9 226.9 L158.9 227.3 L158 227.3 L157.4 227.2 L157 227.5 L156.7 228 L156 228.7 L155.1 229.1 L154.2 229.1 L153.4 228.9 L153 229 L152.6 229.5 L152.1 230.1 L151.3 230.6 L150.4 231.1 L149.6 231.5 L148.7 231.7 L148.1 231.9 L147.7 232.2 L147.5 232.6 L147.5 233.4 L147.5 234.5 L147.2 235.7 L146.7 236.8 L145.8 237.5 L144.8 237.9 L144 237.9 L143.8 238.1 L144.3 238.1 L145.4 238.2 L146.7 238.7 L147.7 239.8 L147.9 241.3 L147.2 242.8 L145.9 243.8 L144.6 244.3 L144.1 244.3 L145.1 244 L146.6 244.9 L146.7 247 L144.9 248.9 L144.2 244.7 L144.8 244.4 L145.4 246.2 L144.5 248.4 L142.4 248.8 L140.7 247.5 L140.8 246.5 L141.9 247.7 L142.4 250.5 L141.5 252.8 L139.6 253.3 L138.2 252.4 L138.2 251.7 L139.1 252.4 L139.5 254.5 L134.6 256.5 L133.3 255 L133.4 252.9 L134.3 251.7 L134.6 251.9 L133.8 252.4 L132.5 252.5 L131.3 251.6 L130.6 250 L130.7 248.3 L128.3 248.9 L128 248.8 L128.5 249.2 L129.1 250.2 L129.3 251.6 L128.8 252.8 L128 253.6 L127.4 254.1 L127.1 254.4 L127.2 254.9 L127.5 255.4 L127.9 256.3 L128.2 257.2 L128.3 258.3 L128.1 259.2 L127.6 260 L127.3 260.4 L127.2 261.1 L127.2 261.7 L127.4 262.1 L127.9 262.7 L128.4 263.4 L128.6 264.4 L128.6 265.3 L128.4 266.2 L128.2 266.8 L128.3 267.3 L128.7 267.8 L129.4 268.6 L128.7 269.4 L127.7 269.8 L126.8 270 L126 270.2 L125.5 270.3 L125.3 270.7 L125.3 271.4 L125.2 272.4 L125.1 273.5 L124.6 274.7 L123.7 275.4 L123.5 275.7 L123.2 276.3 L123.1 276.6 L123.4 276.7 L124.3 276.8 L125.6 277.5 L126.5 278.6 L126.5 280.1 L125.7 281.4 L124.2 282.3 L122.9 282.5 L122.5 282.3 L122.9 282.3 L123.8 282.9 L124.4 284.2 L124.1 286.1 L122.3 287.7 L120.3 288.1 L119.6 287.7 L120.6 287.4 L122.5 287.9 L124.3 289.4 L122.6 290.4 L120.8 289.9 L120.1 289 L120.8 289.1 L122.1 290.7 L122.5 292.4 L122.5 294.2 L122 295.7 L121.2 296.9 L120 297.5 L118.8 297.6 L117.5 297.3 L116.5 296.8 L115.8 296.3 L115.3 296 L115 295.9 L114.8 296.2 L114.8 297.2 L114.3 298.3 L113.1 299.1 L111.5 299.2 L110.1 298.9 L109.2 298.3 L108.9 298.2 L108.9 298.6 L108.9 299.6 L108.7 300.8 L108 301.8 L107.1 302.5 L106.1 302.7 L105.6 302.6 L105.6 303.1 L105.6 304.1 L105.4 304.7 L105 305.7 L104.3 306.3 L103.8 306.6 L103.8 307 L103.9 307.7 L103.9 308.7 L103.4 309.5 L102.9 310.2 L102.4 310.8 L101.8 311.3 L101.4 311.7 L101 312.2 L100.8 312.7 L100.6 313.3 L100.5 313.9 L100.4 314.7 L100.2 315.6 L99.9 316.5 L99.4 317.4 L98.8 318.1 L98.2 318.7 L97.7 319.2 L97.4 319.6 L97.5 320.1 L98 320.7 L98.6 321.6 L99.2 322.7 L99.5 324 L98.4 326.3 L97.4 326.9 L96.3 327 L95.3 326.9 L94.7 326.7 L94.3 326.5 L94.1 326.5 L94.1 326.9 L93.9 327.7 L93.5 328.6 L92.6 329.4 L91.4 330 L89.8 330.2 L88.1 329.9 L86.6 329.3 L85.7 327.6 L86.4 327.5 L85.3 330.7 L87.1 332.2 L86.8 334.4 L85.1 335.5 L84.3 335.1 L85.8 334.4 L88.7 334.7 L90.5 336.5 L90 338.4 L88.6 339 L88.5 339.2 L88.9 339.2 L89.6 339.3 L90.6 339.5 L91.5 340.1 L92.3 341 L92.7 342.1 L91.4 346.4 L89.9 346.4 L88.4 346.1 L87 345.6 L86 345.1 L85.3 344.7 L84.9 344.6 L84.8 344.9 L84.6 345.6 L84.4 346.5 L84 347.6 L83.4 348.5 L82.6 349.2 L81.8 349.7 L81 350 L80.4 350.3 L79.9 350.5 L79.5 351 L80.1 351.7 L80.5 352.7 L80.3 353.8 L79.7 354.6 L79.3 355.1 L79.2 355.5 L79.5 356.2 L79.6 357.2 L79.3 358.1 L78.6 358.9 L78.1 359.3 L78 359.8 L78.1 360.4 L78.1 361.3 L78 362.2 L77.5 363.1 L76.9 364.1 L76.5 364.7 L76.4 365.1 L76.8 365.5 L77.4 366.1 L78 367 L78.2 368.1 L78.2 369 L78.1 369.8 L78 370.5 L78 370.9 L78.2 371.3 L78.7 371.5 L79.5 371.8 L80.4 372.1 L81.5 372.7 L82.4 373.6 L82.9 374.6 L83 375.3 L82.3 377 L80.9 378 L80.2 377.9 L80.8 377.6 L82.3 378 L83 379.7 L82.3 381.8 L80.4 383.3 L78.9 383.6 L79.2 383 L80.9 382.9 L82.6 384.1 L83.1 385.6 L83 387.1 L82.5 388.3 L82 389 L81.7 389.2 L82.3 387.5 L83.5 387.7 L85.2 388.4 L86.7 389.6 L87.6 391.1 L87.8 392.7 L87.2 394 L85.4 394.7 L84.3 394.2 L84.8 393.9 L86.2 394.6 L86.7 396.3 L85.5 397.9 L83.3 398.4 L81.9 398.1 L82.2 397.9 L83.1 398.6 L83.4 400.2 L82.4 401.5 L81.3 402.2 L80.4 402.5 L80.8 401.2 L80.8 401.6 L80.8 402.5 L80.6 403.7 L80.1 404.8 L79.4 405.7 L78.9 406.3 L79 407.1 L79 407.7 L79.1 408.1 L79.5 408.6 L80 409 L80.5 409.5 L81 410.1 L81.5 410.8 L81.8 411.6 L82 412.4 L82.1 413.2 L82.1 414 L82.1 414.8 L82 415.5 L82 415.7 L81.6 416.1 L81.3 416.6 L81 417.2 L80.7 417.9 L80.3 418.7 L79.8 419.4 L79.2 420.2 L78.5 420.9 L77.8 421.4 L77.1 421.8 L76.5 422.1 L76.5 424.2 L77 424.3 L77.7 424.2 L78.7 424.1 L79.8 423.9 L81.1 424 L82.3 424.3 L83.3 425 L84.1 425.9 L84.4 427 L84.5 428.2 L84.3 429.2 L83.9 430.1 L83.4 430.4 L84.9 429.5 L85.5 430.4 L85.4 431.9 L84.3 433.3 L82.3 434.1 L80.3 434.1 L79.1 433.5 L79.1 433.2 L80.3 433.7 L81.6 435.1 L82.1 437.1 L81.9 438.7 L81.1 439.8 L80 440.5 L79.1 440.6 L78.9 440.6 L79.4 440.7 L80.6 441.3 L80.1 440.8 L81.9 440.4 L83.4 440.8 L84.5 441.8 L85 443.2 L84.7 445 L83.8 446.3 L83.2 446.7 L83.4 446.5 L84.3 446.3 L85.5 446.8 L86.4 448 L86.6 449.7 L86.3 451.2 L85.8 452.1 L85.7 452.3 L86.3 452.1 L87.5 451.9 L88.8 452.3 L89.5 453 L88.6 453.7 L87.9 454.1 L87.6 454.3 L87.9 454.9 L88.3 455.7 L88.5 456.8 L88.2 457.9 L87.7 458.7 L87 459.2 L86.5 459.7 L86.2 460.1 L86 460.6 L85.9 461.3 L85.7 462 L85.1 462.1 L85.7 462.7 L86.3 463.4 L86.7 464.1 L87 464.9 L87.3 465.6 L87.5 466.1 L87.9 466.3 L88.8 466.4 L89.7 466.9 L90.2 468 L90.3 468.9 L90.3 469.2 L91 468.9 L92.3 468.7 L93.5 469.4 L94 470.5 L93.9 471.2 L94.1 470.9 L95 470.5 L96.3 470.1 L97.7 470.2 L98.9 470.8 L99.5 472 L99.5 473.2 L99.2 474.1 L99 474.3 L100.5 474.7 L100.8 475.6 L100.6 476.9 L99.7 478.1 L97.6 478.6 L95.4 477.8 L94.2 476.5 L94.5 476.1 L95.2 477.2 L95 479.1 L93.4 480.4 L91.1 480.1 L89.7 478.9 L90.1 478.5 L92.3 479.6 L92.3 482.1 L90.8 483.9 L88.8 483.6 L88 482.4 L88.8 482.4 L89.9 484.5 L89.6 487.3 L87.9 488.4 L86 487.6 L85.5 486.3 L86.1 486.4 L86.5 488 L85.5 489.7 L83.9 489.9 L84.3 486.9 L83.6 488.5 L82.9 489.4 L82.7 489.6 L83.2 489.5 L84.2 489.6 L85.4 490.1 L86.2 491.2 L86.6 492.4 L86.5 493.6 L86.5 494.2 L86.7 494.4 L87.3 494.3 L88.4 494.2 L90 494.6 L89.4 495.6 L88.7 496.2 L88 496.6 L87.6 496.9 L87.4 497.3 L87.4 498 L87.3 498.8 L87 499.7 L86.3 500.4 L85.6 500.9 L84.9 501.2 L84.3 501.5 L83.9 501.8 L83.7 502.4 L83.4 503.1 L82.9 503.8 L82.2 504.5 L81.3 504.9 L80.5 505.1 L79.8 505.2 L79.4 505.5 L79.2 506 L79.1 506.7 L78.9 507.6 L78.6 508.5 L78.1 509.5 L77.4 510.3 L76.7 510.8 L76 511.1 L75.5 511.4 L75.5 511.7 L75.8 512.2 L76.7 513.5 L77 515.3 L76.1 516.6 L74.5 516.8 L73.5 516.3 L73.7 516 L74.5 517.2 L74.5 519 L72.9 520.1 L70.6 519.8 L68.9 518.5 L68.8 517.7 L69.3 518.1 L69.5 519.6 L68.5 521.1 L66.6 521.7 L64.4 521.2 L63.2 520.2 L63.3 519.7 L64.3 520.5 L64.2 522.7 L65.2 524.7 L64.8 526.5 L63.4 527.5 L62.3 527.5 L62.4 527.3 L63.5 527.3 L65.4 528.2 L66.9 529.8 L67.2 531.6 L66.2 533 L64.7 533.6 L63.5 533.5 L63.2 533.2 L64 533.9 L64.3 534.9 L63.9 536.6 L62 537.3 L60 536.7 L59.2 536 L59.6 536.3 L59.9 537.6 L59.1 538.8 L57.6 539.3 L56.5 539 L56.5 539 L57 539.9 L57.1 541.3 L56.4 542.4 L55.6 542.9 L54.9 543.1 L54.7 543.5 L55.1 544.2 L55.4 545.2 L55.3 546.3 L54.7 547.2 L54.1 547.7 L53.7 548.1 L53.6 548.6 L53.7 549.3 L53.6 550.2 L53.3 551 L52.9 551.8 L52.3 552.5 L51.7 553.1 L51.1 553.6 L50.6 554 L50.2 554.5 L50 555 L49.6 556 L50 556.6 L50.4 557.5 L50.7 558.6 L50.5 559.7 L50 560.5 L49.8 560.9 L50.1 561.1 L51.2 561.3 L52.4 561.9 L53.4 563 L53.6 564.3 L53.2 565.3 L52.7 565.8 L53.2 566.1 L53.4 566.8 L53.4 567.9 L53.1 569.2 L52.3 570.2 L51.1 570.8 L49.5 570.7 L48 570 L46.7 568.9 L45.9 567.9 L45.6 567.3 L45.6 567.3 L45.6 568 L45.4 569.5 L44 571 L43.5 572.9 L42 574.3 L40.6 574.7 L40.5 574.3 L41.9 573.9 L44.1 574.3 L45.9 575.7 L46.3 577.5 L45.5 578.9 L44.5 579.3 L44.5 579 L45.8 578.6 L47.9 578.8 L49.6 580 L50 581.7 L49.2 583.2 L47.6 584.4 L46.8 584.2 L47 584.1 L47.9 584.6 L48.5 585.9 L48.1 587.4 L47 588.6 L45.7 589.3 L44.5 589.6 L44 589.7 L44.1 590 L44.6 590.6 L45.2 591.6 L45.4 592.8 L45.2 593.9 L44.7 594.8M304.1 6 L304.3 6.5 L304.7 7 L305.1 7.7 L305.5 8.5 L305.7 9.3 L305.8 10.3 L305.8 11.1 L305.8 11.9 L305.8 12.5 L305.9 13.1 L306.2 13.5 L306.6 14 L307.2 14.5 L307.8 15.1 L308.2 16.3 L307.4 16.7 L306.6 16.9 L305.8 16.9 L305.2 17 L304.6 17.2 L304 17.4 L303.5 17.7 L302.9 18.1 L302.1 18.4 L301.4 18.7 L300.6 18.8 L299.8 18.9 L299.1 18.9 L298.4 19 L297.8 19.2 L297.2 19.4 L296.5 19.7 L295.9 20 L295.1 20.3 L294.4 20.5 L293.6 20.6 L293 20.8 L292.4 21 L291.8 21.3 L291.1 21.6 L290.4 22 L289.7 22.2 L288.9 22.3 L288.3 22.5 L287.7 22.8 L287.2 23 L286.8 23.7 L286.4 24.4 L285.8 24.9 L285.3 25.4 L284.7 25.9 L284.2 26.3 L283.7 26.7 L283.3 27.1 L282.9 27.6 L282.5 28.2 L282.1 28.9 L281.5 29.5 L280.9 30.1 L280.1 30.5 L279.3 30.8 L278.8 31.1 L278.5 31.5 L278.4 32.1 L278.3 32.9 L278 33.8 L277.5 34.7 L276.9 35.3 L276.3 35.8 L275.8 36.1 L275.6 36.5 L275.7 37.2 L275.6 37.4 L276.3 38.3 L276.5 39.3 L276.3 40.2 L276.1 40.7 L276.4 41 L277.1 41.4 L277.7 42.2 L278 43.3 L277.7 44.3 L277.3 45.1 L277.3 45.5 L277.5 45.9 L278 46.5 L278.5 47.3 L278.8 48.2 L278.8 49.2 L278.6 50 L278.5 50.6 L278.8 51 L280.3 50.8 L279.5 51.3 L278.6 51.6 L277.6 51.5 L276.9 51.2 L276.4 51.1 L275.9 51.4 L275.2 51.8 L274.3 52.1 L273.4 51.9 L272.7 51.6 L272.2 51.6 L271.6 51.7 L270.8 52 L269.6 51.7 L269.3 51 L269 50.2 L268.7 49.6 L268.4 48.9 L268.1 48.3 L267.7 47.8 L267.3 47.2 L266.8 46.6 L266.4 46 L265.9 45.4 L265.5 44.8 L265.1 44.1 L264.7 43.4 L264.4 42.8 L264 42.2 L263.6 41.6 L263.2 41.1 L262.7 40.5 L261.9 40.6 L261.1 40.5 L260.4 40.4 L259.7 40.3 L259 40.1 L258.4 40 L257.8 40.1 L257.1 40.2 L256.2 40.2 L255.4 39.9 L254.8 39.5 L254.3 39.4 L253.7 39.5 L252.9 39.6 L251.9 39.4 L251.2 38.9 L250.7 38.3 L250.3 38.2 L249.6 38.4 L248.7 38.6 L247.7 38.4 L247 37.8 L246.6 37.4 L246.2 37.6 L245.5 38.1 L244.4 38.5 L243.4 38.3 L242.7 38.1 L242.3 38.3 L242.3 38.8 L242.1 39.6 L241.8 40.5 L241.3 41.3 L240.5 41.9 L239.6 42.2 L238.8 42.4 L238.1 42.4 L237.7 42.6 L237.3 42.9 L237 43.4 L236.5 44.1 L235.9 44.8 L235 45.3 L233.9 45.4 L233.3 45.4 L233 45.7 L232.9 46.4 L232.6 47.3 L231.9 48.1 L231.1 48.7 L230.6 49.1 L230.4 49.5 L230.5 50.2 L230.5 51.1 L230.1 52 L229.5 52.7 L228.9 53.2 L228.6 53.6 L228.5 54.2 L228.4 55 L228 55.8 L227.4 56.5 L226.8 56.9 L226.3 57.4 L226.1 57.9M636.2 97.4 L636.6 97.1 L637 96.7 L637.4 96.1 L637.9 95.4 L638.5 94.7 L639.3 94.2 L640.1 93.8 L640.8 93.6 L641.3 93.5 L641.8 93.2 L642.1 92.8 L642.5 92.2 L642.9 91.6 L643.5 91 L644.3 90.5 L645.1 90.2 L646 90 L646.8 90 L647.6 90 L648.1 90.1 L648.7 90.1 L649.2 89.9 L649.8 89.6 L650.4 89.2 L651.2 88.9 L652 88.6 L652.8 88.4 L653.6 88.2 L654.4 88.2 L655.1 88.1 L655.7 88 L656.3 87.8 L656.9 87.5 L657.4 87.2 L658 86.8 L658.7 86.3 L659.4 86 L660.1 85.7 L660.9 85.5 L661.7 85.4 L662.4 85.3 L663 85.2 L663.7 85.1 L664.3 84.9 L664.9 84.7 L665.6 84.4 L666.3 84.2 L667.1 84 L667.9 83.9 L668.6 83.8 L669.2 83.7 L669.8 83.5 L670.5 83.2 L671.2 82.9 L672 82.7 L672.7 82.6 L673.4 82.5 L674 82.3 L674.6 82.1 L675.3 81.8 L676 81.4 L676.7 81.1 L677.4 81 L678 80.6 L678.5 80.2 L678.9 79.7 L679.3 79.1 L679.8 78.4 L680.4 77.8 L681.1 77.3 L681.8 77.1 L682.4 76.8 L682.9 76.4 L683.4 76 L683.8 75.5 L684.3 74.9 L684.9 74.3 L685.6 73.8 L686.5 73.4 L687.3 73.2 L687.9 73.1 L688.5 73 L688.9 72.8 L689.4 72.3 L689.8 71.7 L690.4 71.1 L691 70.4 L691.8 69.8 L692.6 69.4 L693.4 69.2 L694.1 69 L694.6 68.8 L695.1 68.6 L695.5 68.2 L695.9 67.7 L696.1 67.7 L696.2 66.6 L696.8 65.7 L697.5 65.2 L697.7 64.8 L697.5 64.2 L697.4 63.2 L697.7 62.2 L698.4 61.4 L699 61 L698.7 60.9 L698.9 60.2 L699.5 59.5 L700.2 59 L701 58.6 L701.7 58.4 L702.3 58.1 L702.7 57.8 L703 57.3 L703.4 56.6 L703.9 55.9 L704.5 55.4 L705.2 54.9 L705.9 54.6 L706.5 54.4 L706.9 54 L706.9 53.4 L707 52.6 L707.2 51.8 L707.5 51.1 L707.8 50.4 L708.1 49.8 L708.2 49.2 L708.7 48.8 L709.4 48.4 L710.1 48.1 L710.8 47.8 L711.5 47.5 L712.1 47.3 L712.7 47 L713.3 46.7 L713.9 46.3 L714.5 45.9 L715.1 45.5 L715.8 45.1 L716.4 44.8 L717.1 44.4 L717.8 44.1 L718.4 43.9 L718.9 43.6 L719.4 43.2 L720 42.6 L720.6 42.1 L721.4 41.8 L722.1 41.5 L722.8 41.4 L723.3 41.2 L723.8 40.8 L724.3 40.3 L725 39.8 L725.8 39.5 L726.6 39.3 L727.5 39.3 L728.2 39.3 L728.7 39.2 L729.2 39 L729.7 38.6 L730.2 38 L730.9 37.5 L731.6 37 L732.5 36.6 L733.3 36.4 L734 36.4 L734.5 36.2 L734.6 35.6 L734.8 34.7 L735.3 33.8 L736.1 33.2 L736.9 32.9 L737.6 32.9 L737.9 32.6 L738.1 32 L738.4 31.2 L739.1 30.5 L739.9 30.1 L740.8 29.9 L741.6 29.9 L742.3 29.8 L742.8 29.7 L743.2 29.3 L743.6 28.8 L744.1 28.2 L744.7 27.6 L745.5 27.1 L746.3 26.8 L747 26.6 L747.6 26.3 L748.1 26 L748.5 25.5 L748.8 25 L749.2 24.4 L749.6 23.8 L750.2 23.1 L750.7 22.6 L751.4 22.1 L752 21.7 L752.7 21.4 L753.3 21.1 L753.8 20.8 L754.3 20.3 L754.8 19.8 L755.3 19.3 L756 18.9 L756.7 18.5 L757.3 18.2 L757.9 17.8 L758.5 17.5 L759 17 L759.5 16.5 L760.2 16 L760.8 15.6 L761.4 15.2 L762 14.8 L762.6 14.4 L763.2 14 L763.7 13.2 L763 13.1 L762.3 13.1 L761.5 13 L760.8 12.9 L760 12.7 L759.2 12.5 L758.5 12.3 L757.9 12 L757.2 11.8 L756.6 11.7 L756 11.6 L755.3 11.5 L754.6 11.5 L753.6 11.3 L753 10.7 L752.4 10 L752 9.2 L751.6 8.4 L751.3 7.7 L751 7 L750.6 6.5 L750.1 6.1 L749.5 5.8M764.5 13.1 L764.8 14.1 L764.6 15 L764.3 15.6 L764.4 16 L764.9 16.4 L765.5 17.2 L765.6 18.3 L765.3 19.3 L764.9 20 L764.9 20.4 L765.2 20.9 L765.6 21.6 L766 22.5 L766.1 23.5 L766.3 24.3 L766.5 24.9 L766.8 25.2 L767.4 25.5 L768.2 25.9 L768.9 26.4 L769.4 27.1 L769.8 27.8 L770.1 28.3 L770.5 28.8 L771 29.2 L771.5 29.6 L772.1 30.1 L772.6 30.6 L773.2 31.2 L773.7 31.7 L774.1 32.4 L774.5 33 L774.9 33.6 L775.3 34.2 L775.7 34.8 L776 35.3 L776.5 35.8 L777 36.3 L777.5 36.9 L778 37.4 L778.4 38 L779.1 38.3 L779.8 38.6 L780.4 38.9 L781 39 L781.7 39.2 L782.4 39.3 L783.1 39.4 L783.9 39.6 L784.6 39.8 L785.3 40.1 L786 40.3 L786.6 40.6 L787.2 40.7 L787.9 40.8 L788.6 40.8 L789.3 40.9 L790.1 40.9 L790.5 41.1 L791.3 40.8 L792 40.7 L792.8 40.6 L793.5 40.6 L794.2 40.6 L794.8 40.5 L795.3 40.3 L795.9 39.9 L796.5 39.6 L797.2 39.2 L798 38.8 L798.9 38.6 L799.8 38.6 L800.6 38.7 L801.1 38.7 L801.4 38.3 L801.8 37.6 L802.4 36.9 L803.3 36.3 L804.2 36.1 L805 36.1 L805.5 36 L805.8 35.7M787.7 94.3 L787.4 95.3 L786.8 96 L786.3 96.4 L786.1 96.9 L786.2 97.5 L786.1 98.4 L785.8 99.3 L785.2 100 L784.7 100.5 L784.4 101 L784.3 101.6 L784.2 102.4 L783.9 103.2 L783.5 103.9 L783 104.6 L782.8 105.2 L782.8 105.8 L782.8 106.5 L782.8 107.3 L782.6 108.1 L782.4 108.9 L782.2 109.5 L782.1 110.2 L782.1 110.9 L782.1 111.6 L782.1 112.4 L781.9 113.1 L781.8 113.9 L781.6 114.6 L781.4 115.3 L781.3 115.9 L781.3 116.6 L781.3 117.4 L780.9 118.4 L780.1 118.5 L779.3 118.4 L778.6 118.4 L778 118.5 L777.3 118.7 L776.5 118.9 L775.6 118.9 L774.8 118.8 L774.1 118.7 L773.2 118.9 L773 119.6 L772.6 120.4 L772 121.1 L771.4 121.6 L770.8 122.1 L770.4 122.5 L770.1 123 L770 123.6 L769.8 124.4 L769.6 125.2 L769.3 126.1 L768.9 126.9 L768.3 127.5 L767.6 128 L767 128.4 L766.7 128.6 L766.6 129.3 L766.3 130.2 L765.5 130.9 L764.5 131.2 L763.6 131.1 L763.3 131.3 L763.1 131.9 L762.6 132.8 L761.7 133.4 L760.7 133.6 L760.1 133.6 L759.8 134 L759.7 134.7 L759.3 135.6 L758.7 136.4 L758 137 L757.2 137.3 L756.8 137.6 L756.6 138.1 L756.5 139.1 L755.6 139.3 L754.6 139.3 L753.8 138.9 L753.1 138.5 L752.5 138.2 L752 137.8 L751.4 137.6 L750.8 137.4 L750.2 137.3 L749.5 137.2 L748.7 137 L747.9 136.8 L747.2 136.4 L746.5 136.1 L745.9 135.7 L745.3 135.3 L744.7 135.2 L743.9 135.1 L743.3 135.6 L742.5 135.9 L741.8 136.2 L741.2 136.4 L740.6 136.8 L740 137.2 L739.4 137.6 L738.7 138 L738 138.3 L737.3 138.6 L736.7 138.9 L736.1 139.2 L735.5 139.6 L734.9 140 L734.3 140.3 L733.8 140.9 L733.3 141.4 L732.7 141.9 L732.1 142.4 L731.6 142.8 L731.1 143.2 L730.8 143.7 L730.4 144.3 L729.9 145 L729.2 145.5 L728.6 145.9 L728 146.2 L727.6 146.6 L727.4 147.2 L727.1 148 L726.6 148.8 L725.9 149.3 L725.3 149.7 L724.9 150.1 L724.6 150.6 L724.5 151.4 L723.8 151.9 L723 152.4 L722.1 152.6 L721.2 152.7 L720.3 152.6 L719.5 152.3 L718.9 152.2 L718.4 152.3 L717.9 152.5 L716.4 153 L716.1 152.1 L716.2 151 L716.6 150.1 L716.8 149.6 L716.5 149.3 L715.9 148.7 L715.4 147.8 L715.3 146.8 L715.6 146 L715.6 145.5 L714.6 144.5 L713.9 145.2 L712.9 145.7 L711.9 145.7 L711.2 145.5 L710.8 145.6 L710.3 146.1 L709.5 146.8 L708.5 147 L707.5 146.7 L707 146.5 L706.8 146.9 L706.6 147.7 L706.1 148.4 L705.5 149 L704.9 149.6 L704.2 150.1 L703.5 150.5 L702.9 150.9 L702.4 151.3 L702 151.8 L701.6 152.4 L701.2 153 L700.9 153.7 L700.1 154 L699.4 154.2 L698.6 154.3 L698 154.4 L697.4 154.7 L696.8 155.1 L696.1 155.4 L695.4 155.7 L694.7 155.8 L694 156 L693.4 156.2 L693.4 156.9 L693.4 157.7 L693.2 158.5 L693 159.3 L692.8 159.9 L692.7 160.6 L692.7 161.3 L692.6 162.1 L692.5 162.9 L692.2 163.7 L691.4 164 L690.8 164.2 L690.3 164.6 L689.8 165.1 L689.2 165.6 L688.5 166.1 L687.7 166.5 L687 166.8 L686.3 167.1 L685.6 167.4 L685.1 167.7 L684.8 168.1 L684.2 168.4 L683.6 168.9 L683 169.3 L682.2 169.8 L681.3 170.1 L680.4 170.1 L679.7 170 L679.3 170 L678.9 170.4 L678.3 171 L677.4 171.5 L676.4 171.5 L675.5 171.2 L674.8 171 L674.4 171.1 L674.1 171.6 L673.6 172.3 L672.9 172.9 L672 173.3 L671 173.5 L670.2 173.5 L669.6 173.6 L669.3 174 L669 174.6 L668.7 175.4 L668.1 176.2 L667.3 176.8 L666.5 177.2 L665.8 177.3 L665.6 177.6 L665.4 178.4 L665 179.3 L664.1 179.8 L663.2 180 L662.6 180 L662.2 180.2 L661.9 180.8 L661.2 181.5 L660.4 181.8 L659.5 181.9 L658.8 182 L658.3 182.1 L657.8 182.4 L657.2 182.9 L656.6 183.3 L655.9 183.8 L655.2 184.1 L654.5 184.3 L653.8 184.6 L653.2 184.8 L652.7 185.2 L652.2 185.6 L651.6 186 L651 186.5 L650.4 186.9 L649.8 187.3 L649.1 187.7 L648.5 188 L647.8 188.3 L647.1 188.3 L646.5 188.4 L645.8 188.4 L645.1 188.5 L644.5 188.6 L643.8 188.7 L643 188.8 L642.3 188.9 L641.5 188.9 L640.8 188.8 L640.1 188.7 L639.4 188.6 L638.8 188.6 L638.1 188.6 L637.5 188.7 L636.8 188.8 L636 189 L635.2 189 L634.4 189 L633.6 188.9 L632.9 188.8 L632.3 188.7 L631.7 188.8 L631.2 189 L630.6 189.4 L629.8 189.8 L629 190.1 L628.4 190.2 L627.6 190.5 L626.8 190.7 L626.2 190.7 L625.7 190.9 L625.2 191.2 L624.8 191.7 L624.2 192.3 L623.5 192.8 L622.6 193.1 L621.6 193.2 L620.7 193 L620 192.9 L619.4 192.9 L619.1 193.3 L618.6 194.1 L617.7 194.7 L616.7 194.7 L615.9 194.6 L615 195.1 L615.3 195.8 L615.4 196.9 L615.1 197.9 L614.4 198.5 L613.9 198.9 L613.9 199.3 L614.1 200.1 L614.1 201 L613.8 201.9 L613.2 202.6 L612.6 203.1 L612.2 203.5 L612.1 204 L612 204.7 L611.8 205.5 L611.3 206.3 L610.7 206.9 L610.1 207.4 L609.6 207.9 L609.3 208.4 L609.1 209.1 L608.9 209.8 L608.6 210.5 L608.3 211.3 L607.9 212 L607.4 212.6 L607.1 213.2 L606.7 213.8 L606.4 214.5 L606.2 215.1 L606.1 215.9 L605.3 215.9 L604.5 215.8 L603.7 215.6 L603.1 215.5 L602.4 215.5 L601.6 215.5 L600.8 215.5 L600 215.3 L599.3 215.1 L598.7 215 L598 214.9 L597.2 214.9 L596.4 214.9 L595.7 214.7 L595 215 L594.3 215.2 L593.6 215.5 L593.1 215.7 L592.6 216.1 L592 216.6 L591.4 217.1 L590.6 217.5 L589.8 217.8 L589.1 218.4 L589 219.1 L589 219.6 L589.1 220.2 L589.4 220.9 L589.7 221.7 L589.9 222.5 L589.9 223.4 L589.8 224.2 L589.6 225 L589.3 225.6 L589.1 226.1 L589.2 226.6 L589.5 227.2 L589.7 228 L589.7 229 L589.2 229.9 L588.6 230.6 L588.1 231.1 L588 231.5 L588.2 232.1 L588.5 232.8 L588.5 233.8 L588.3 234.8 L587.9 235.6 L587.5 236.2 L587.4 236.7 L587.5 237.1 L587.9 237.7 L588.3 238.5" fill="none" stroke="#000" stroke-width="1" stroke-linejoin="round"/>
<circle cx="406" cy="406" r="159.2" fill="none" stroke="#d4d4d4" stroke-width="0.95"/>
<circle cx="406" cy="406" r="278.6" fill="none" stroke="#d4d4d4" stroke-width="0.95"/>
<circle cx="406" cy="406" r="398" fill="none" stroke="#d4d4d4" stroke-width="0.95"/>
<circle cx="406" cy="406" r="517.4" fill="none" stroke="#d4d4d4" stroke-width="0.95"/>
<circle cx="406" cy="406" r="39.8" fill="none" stroke="#f00000" stroke-width="1.1"/>
<path d="M357.5 163.6L402.5 209M618.3 323L664 366M386 524L430 566M363.6 746L411 793" stroke="#e0e0e0" stroke-width="0.9" fill="none"/>
<g fill="none" stroke-width="1.08">
<path stroke="#f4661a" d="M394 26.5h7M397.5 23v7M376.5 149.5a4 4 0 1 0 8 0a4 4 0 1 0 -8 0M378 149.5h5M380.5 147v5M389.5 155.5a4 4 0 1 0 8 0a4 4 0 1 0 -8 0M391 155.5h5M390.5 190.5a4 4 0 1 0 8 0a4 4 0 1 0 -8 0M392 190.5h5M418.5 23.5a4 4 0 1 0 8 0a4 4 0 1 0 -8 0M420 23.5h5M432.5 65.5a4 4 0 1 0 8 0a4 4 0 1 0 -8 0M434 65.5h5M444.5 75.5a4 4 0 1 0 8 0a4 4 0 1 0 -8 0M446 75.5h5M459.5 86.5a4 4 0 1 0 8 0a4 4 0 1 0 -8 0M461 86.5h5M429.5 95.5a4 4 0 1 0 8 0a4 4 0 1 0 -8 0M431 95.5h5M547.5 70.5a4 4 0 1 0 8 0a4 4 0 1 0 -8 0M549 70.5h5M451.5 153.5a4 4 0 1 0 8 0a4 4 0 1 0 -8 0M453 153.5h5M508 221.5h7M511.5 218v7M431.5 502.5a4 4 0 1 0 8 0a4 4 0 1 0 -8 0M433 502.5h5M437.5 532.5a4 4 0 1 0 8 0a4 4 0 1 0 -8 0M439 532.5h5M441.5 530v5M34.5 609.5a4 4 0 1 0 8 0a4 4 0 1 0 -8 0M36 609.5h5M38.5 607v5M135.5 677.5a4 4 0 1 0 8 0a4 4 0 1 0 -8 0M137 677.5h5M110.5 755.5a4 4 0 1 0 8 0a4 4 0 1 0 -8 0M112 755.5h5M197.5 727.5a4 4 0 1 0 8 0a4 4 0 1 0 -8 0M199 727.5h5M255.5 653.5a4 4 0 1 0 8 0a4 4 0 1 0 -8 0M257 653.5h5M433 664.5h7M436.5 661v7M440.5 691.5a4 4 0 1 0 8 0a4 4 0 1 0 -8 0M442 691.5h5M456.5 694.5a4 4 0 1 0 8 0a4 4 0 1 0 -8 0M458 694.5h5M460.5 692v5M464.5 699.5a4 4 0 1 0 8 0a4 4 0 1 0 -8 0M466 699.5h5M468.5 697v5M468.5 687.5a4 4 0 1 0 8 0a4 4 0 1 0 -8 0M470 687.5h5M475.5 686.5a4 4 0 1 0 8 0a4 4 0 1 0 -8 0M477 686.5h5M479.5 684v5M484.5 679.5a4 4 0 1 0 8 0a4 4 0 1 0 -8 0M486 679.5h5M487.5 672.5a4 4 0 1 0 8 0a4 4 0 1 0 -8 0M489 672.5h5M491.5 670v5M479.5 663.5a4 4 0 1 0 8 0a4 4 0 1 0 -8 0M481 663.5h5M483.5 661v5M473.5 668.5a4 4 0 1 0 8 0a4 4 0 1 0 -8 0M475 668.5h5M435.5 704.5a4 4 0 1 0 8 0a4 4 0 1 0 -8 0M437 704.5h5M463.5 711.5a4 4 0 1 0 8 0a4 4 0 1 0 -8 0M465 711.5h5M467.5 709v5M477.5 712.5a4 4 0 1 0 8 0a4 4 0 1 0 -8 0M479 712.5h5M484.5 705.5a4 4 0 1 0 8 0a4 4 0 1 0 -8 0M486 705.5h5M488.5 703v5M490.5 711.5a4 4 0 1 0 8 0a4 4 0 1 0 -8 0M492 711.5h5M484.5 163.5a4 4 0 1 0 8 0a4 4 0 1 0 -8 0M486 163.5h5M470.5 191.5a4 4 0 1 0 8 0a4 4 0 1 0 -8 0M472 191.5h5M499.5 198.5a4 4 0 1 0 8 0a4 4 0 1 0 -8 0M501 198.5h5M462.5 200.5a4 4 0 1 0 8 0a4 4 0 1 0 -8 0M464 200.5h5M479.5 199.5a4 4 0 1 0 8 0a4 4 0 1 0 -8 0M481 199.5h5M480.5 206.5a4 4 0 1 0 8 0a4 4 0 1 0 -8 0M482 206.5h5M472.5 654.5a4 4 0 1 0 8 0a4 4 0 1 0 -8 0M474 654.5h5M462.5 562.5a4 4 0 1 0 8 0a4 4 0 1 0 -8 0M464 562.5h5M466.5 560v5"/>
<path stroke="#ff9a1e" d="M416.5 212.5a4 4 0 1 0 8 0a4 4 0 1 0 -8 0M418 212.5h5M420.5 210v5M420.5 214.5a4 4 0 1 0 8 0a4 4 0 1 0 -8 0M422 214.5h5M412.5 219.5a4 4 0 1 0 8 0a4 4 0 1 0 -8 0M414 219.5h5M409.5 215.5a4 4 0 1 0 8 0a4 4 0 1 0 -8 0M411 215.5h5M408.5 211.5a4 4 0 1 0 8 0a4 4 0 1 0 -8 0M410 211.5h5M412.5 209v5M415.5 213.5a4 4 0 1 0 8 0a4 4 0 1 0 -8 0M417 213.5h5M419.5 211v5M417.5 218.5a4 4 0 1 0 8 0a4 4 0 1 0 -8 0M419 218.5h5M416.5 204.5a4 4 0 1 0 8 0a4 4 0 1 0 -8 0M418 204.5h5M422.5 209.5a4 4 0 1 0 8 0a4 4 0 1 0 -8 0M424 209.5h5M414.5 213.5a4 4 0 1 0 8 0a4 4 0 1 0 -8 0M416 213.5h5M410.5 213.5a4 4 0 1 0 8 0a4 4 0 1 0 -8 0M412 213.5h5M414.5 211v5M428.5 562.5a4 4 0 1 0 8 0a4 4 0 1 0 -8 0M430 562.5h5M454.5 574.5a4 4 0 1 0 8 0a4 4 0 1 0 -8 0M456 574.5h5M448.5 574.5a4 4 0 1 0 8 0a4 4 0 1 0 -8 0M450 574.5h5M440.5 563.5a4 4 0 1 0 8 0a4 4 0 1 0 -8 0M442 563.5h5M444.5 561v5M432.5 566.5a4 4 0 1 0 8 0a4 4 0 1 0 -8 0M434 566.5h5M436.5 564v5M448.5 567.5a4 4 0 1 0 8 0a4 4 0 1 0 -8 0M450 567.5h5M453.5 563.5a4 4 0 1 0 8 0a4 4 0 1 0 -8 0M455 563.5h5M457.5 561v5M441.5 581.5a4 4 0 1 0 8 0a4 4 0 1 0 -8 0M443 581.5h5M452.5 570.5a4 4 0 1 0 8 0a4 4 0 1 0 -8 0M454 570.5h5M448.5 577.5a4 4 0 1 0 8 0a4 4 0 1 0 -8 0M450 577.5h5M436.5 580.5a4 4 0 1 0 8 0a4 4 0 1 0 -8 0M438 580.5h5M448.5 572.5a4 4 0 1 0 8 0a4 4 0 1 0 -8 0M450 572.5h5M452.5 570v5M430.5 571.5a4 4 0 1 0 8 0a4 4 0 1 0 -8 0M432 571.5h5M434.5 569v5M456.5 571.5a4 4 0 1 0 8 0a4 4 0 1 0 -8 0M458 571.5h5M460.5 569v5M447.5 566.5a4 4 0 1 0 8 0a4 4 0 1 0 -8 0M449 566.5h5M429.5 576.5a4 4 0 1 0 8 0a4 4 0 1 0 -8 0M431 576.5h5M447.5 583.5a4 4 0 1 0 8 0a4 4 0 1 0 -8 0M449 583.5h5M449.5 566.5a4 4 0 1 0 8 0a4 4 0 1 0 -8 0M451 566.5h5M430.5 584.5a4 4 0 1 0 8 0a4 4 0 1 0 -8 0M432 584.5h5M438.5 578.5a4 4 0 1 0 8 0a4 4 0 1 0 -8 0M440 578.5h5M433.5 570.5a4 4 0 1 0 8 0a4 4 0 1 0 -8 0M435 570.5h5M432.5 584.5a4 4 0 1 0 8 0a4 4 0 1 0 -8 0M434 584.5h5M435.5 572.5a4 4 0 1 0 8 0a4 4 0 1 0 -8 0M437 572.5h5M424.5 575.5a4 4 0 1 0 8 0a4 4 0 1 0 -8 0M426 575.5h5M428.5 579.5a4 4 0 1 0 8 0a4 4 0 1 0 -8 0M430 579.5h5M435.5 564.5a4 4 0 1 0 8 0a4 4 0 1 0 -8 0M437 564.5h5M442.5 567.5a4 4 0 1 0 8 0a4 4 0 1 0 -8 0M444 567.5h5M436.5 561.5a4 4 0 1 0 8 0a4 4 0 1 0 -8 0M438 561.5h5M435.5 574.5a4 4 0 1 0 8 0a4 4 0 1 0 -8 0M437 574.5h5M155.5 94.5a4 4 0 1 0 8 0a4 4 0 1 0 -8 0M157 94.5h5M341.5 126.5a4 4 0 1 0 8 0a4 4 0 1 0 -8 0M343 126.5h5M541 91.5h7M544.5 88v7M536.5 100.5a4 4 0 1 0 8 0a4 4 0 1 0 -8 0M538 100.5h5M565.5 118.5a4 4 0 1 0 8 0a4 4 0 1 0 -8 0M567 118.5h5M546.5 176.5a4 4 0 1 0 8 0a4 4 0 1 0 -8 0M548 176.5h5M746.5 65.5a4 4 0 1 0 8 0a4 4 0 1 0 -8 0M748 65.5h5M34.5 346.5a4 4 0 1 0 8 0a4 4 0 1 0 -8 0M36 346.5h5M38.5 344v5M387.5 212.5a4 4 0 1 0 8 0a4 4 0 1 0 -8 0M389 212.5h5M450.5 245.5a4 4 0 1 0 8 0a4 4 0 1 0 -8 0M452 245.5h5M454.5 243v5M689.5 330.5a4 4 0 1 0 8 0a4 4 0 1 0 -8 0M691 330.5h5M776.5 336.5a4 4 0 1 0 8 0a4 4 0 1 0 -8 0M778 336.5h5M393.5 540.5a4 4 0 1 0 8 0a4 4 0 1 0 -8 0M395 540.5h5M479.5 488.5a4 4 0 1 0 8 0a4 4 0 1 0 -8 0M481 488.5h5M506.5 513.5a4 4 0 1 0 8 0a4 4 0 1 0 -8 0M508 513.5h5M708.5 603.5a4 4 0 1 0 8 0a4 4 0 1 0 -8 0M710 603.5h5M58.5 681.5a4 4 0 1 0 8 0a4 4 0 1 0 -8 0M60 681.5h5M62.5 679v5M86.5 724.5a4 4 0 1 0 8 0a4 4 0 1 0 -8 0M88 724.5h5M151.5 748.5a4 4 0 1 0 8 0a4 4 0 1 0 -8 0M153 748.5h5M209.5 743.5a4 4 0 1 0 8 0a4 4 0 1 0 -8 0M211 743.5h5M414.5 670.5a4 4 0 1 0 8 0a4 4 0 1 0 -8 0M416 670.5h5M492.5 686.5a4 4 0 1 0 8 0a4 4 0 1 0 -8 0M494 686.5h5M456 736.5h7M513.5 655.5a4 4 0 1 0 8 0a4 4 0 1 0 -8 0M515 655.5h5M517.5 653v5M498.5 645.5a4 4 0 1 0 8 0a4 4 0 1 0 -8 0M500 645.5h5M496.5 654.5a4 4 0 1 0 8 0a4 4 0 1 0 -8 0M498 654.5h5M483.5 650.5a4 4 0 1 0 8 0a4 4 0 1 0 -8 0M485 650.5h5M514.5 696.5a4 4 0 1 0 8 0a4 4 0 1 0 -8 0M516 696.5h5M518.5 694v5M587.5 622.5a4 4 0 1 0 8 0a4 4 0 1 0 -8 0M589 622.5h5M579.5 607.5a4 4 0 1 0 8 0a4 4 0 1 0 -8 0M581 607.5h5M583.5 605v5M458.5 660.5a4 4 0 1 0 8 0a4 4 0 1 0 -8 0M460 660.5h5M653.5 624.5a4 4 0 1 0 8 0a4 4 0 1 0 -8 0M655 624.5h5M688.5 629.5a4 4 0 1 0 8 0a4 4 0 1 0 -8 0M690 629.5h5M692.5 627v5M721.5 641.5a4 4 0 1 0 8 0a4 4 0 1 0 -8 0M723 641.5h5M619.5 653.5a4 4 0 1 0 8 0a4 4 0 1 0 -8 0M621 653.5h5M623.5 651v5M776.5 652.5a4 4 0 1 0 8 0a4 4 0 1 0 -8 0M778 652.5h5M650.5 684.5a4 4 0 1 0 8 0a4 4 0 1 0 -8 0M652 684.5h5M650.5 697.5a4 4 0 1 0 8 0a4 4 0 1 0 -8 0M652 697.5h5M627.5 701.5a4 4 0 1 0 8 0a4 4 0 1 0 -8 0M629 701.5h5M478.5 181.5a4 4 0 1 0 8 0a4 4 0 1 0 -8 0M480 181.5h5M482.5 179v5M469.5 186.5a4 4 0 1 0 8 0a4 4 0 1 0 -8 0M471 186.5h5M473.5 184v5M485.5 190.5a4 4 0 1 0 8 0a4 4 0 1 0 -8 0M487 190.5h5M467.5 200.5a4 4 0 1 0 8 0a4 4 0 1 0 -8 0M469 200.5h5M471.5 198v5M484.5 202.5a4 4 0 1 0 8 0a4 4 0 1 0 -8 0M486 202.5h5M461.5 206.5a4 4 0 1 0 8 0a4 4 0 1 0 -8 0M463 206.5h5M467.5 209.5a4 4 0 1 0 8 0a4 4 0 1 0 -8 0M469 209.5h5M468.5 213.5a4 4 0 1 0 8 0a4 4 0 1 0 -8 0M470 213.5h5M485.5 212.5a4 4 0 1 0 8 0a4 4 0 1 0 -8 0M487 212.5h5M468.5 219.5a4 4 0 1 0 8 0a4 4 0 1 0 -8 0M470 219.5h5M472.5 229.5a4 4 0 1 0 8 0a4 4 0 1 0 -8 0M474 229.5h5M476.5 227v5M681.5 396.5a4 4 0 1 0 8 0a4 4 0 1 0 -8 0M683 396.5h5"/>
<path stroke="#ffc000" d="M425.5 217.5a4 4 0 1 0 8 0a4 4 0 1 0 -8 0M427 217.5h5M425.5 216.5a4 4 0 1 0 8 0a4 4 0 1 0 -8 0M427 216.5h5M415.5 210.5a4 4 0 1 0 8 0a4 4 0 1 0 -8 0M417 210.5h5M419.5 208v5M404.5 218.5a4 4 0 1 0 8 0a4 4 0 1 0 -8 0M406 218.5h5M408.5 216v5M415.5 221.5a4 4 0 1 0 8 0a4 4 0 1 0 -8 0M417 221.5h5M412.5 207.5a4 4 0 1 0 8 0a4 4 0 1 0 -8 0M414 207.5h5M408.5 213.5a4 4 0 1 0 8 0a4 4 0 1 0 -8 0M410 213.5h5M417.5 211.5a4 4 0 1 0 8 0a4 4 0 1 0 -8 0M419 211.5h5M421.5 209.5a4 4 0 1 0 8 0a4 4 0 1 0 -8 0M423 209.5h5M404.5 220.5a4 4 0 1 0 8 0a4 4 0 1 0 -8 0M406 220.5h5M411.5 215.5a4 4 0 1 0 8 0a4 4 0 1 0 -8 0M413 215.5h5M425.5 214.5a4 4 0 1 0 8 0a4 4 0 1 0 -8 0M427 214.5h5M429.5 212v5M407.5 213.5a4 4 0 1 0 8 0a4 4 0 1 0 -8 0M409 213.5h5M408.5 209.5a4 4 0 1 0 8 0a4 4 0 1 0 -8 0M410 209.5h5M417.5 207.5a4 4 0 1 0 8 0a4 4 0 1 0 -8 0M419 207.5h5M418.5 217.5a4 4 0 1 0 8 0a4 4 0 1 0 -8 0M420 217.5h5M411.5 219.5a4 4 0 1 0 8 0a4 4 0 1 0 -8 0M413 219.5h5M417.5 204.5a4 4 0 1 0 8 0a4 4 0 1 0 -8 0M419 204.5h5M416.5 213.5a4 4 0 1 0 8 0a4 4 0 1 0 -8 0M418 213.5h5M420.5 211v5M421.5 220.5a4 4 0 1 0 8 0a4 4 0 1 0 -8 0M423 220.5h5M418.5 229.5a4 4 0 1 0 8 0a4 4 0 1 0 -8 0M420 229.5h5M407.5 225.5a4 4 0 1 0 8 0a4 4 0 1 0 -8 0M409 225.5h5M406.5 217.5a4 4 0 1 0 8 0a4 4 0 1 0 -8 0M408 217.5h5M422.5 229.5a4 4 0 1 0 8 0a4 4 0 1 0 -8 0M424 229.5h5M405.5 225.5a4 4 0 1 0 8 0a4 4 0 1 0 -8 0M407 225.5h5M397.5 236.5a4 4 0 1 0 8 0a4 4 0 1 0 -8 0M399 236.5h5M415.5 219.5a4 4 0 1 0 8 0a4 4 0 1 0 -8 0M417 219.5h5M410.5 214.5a4 4 0 1 0 8 0a4 4 0 1 0 -8 0M412 214.5h5M404.5 222.5a4 4 0 1 0 8 0a4 4 0 1 0 -8 0M406 222.5h5M404.5 228.5a4 4 0 1 0 8 0a4 4 0 1 0 -8 0M406 228.5h5M408.5 226v5M406.5 221.5a4 4 0 1 0 8 0a4 4 0 1 0 -8 0M408 221.5h5M410.5 219v5M412.5 227.5a4 4 0 1 0 8 0a4 4 0 1 0 -8 0M414 227.5h5M398.5 226.5a4 4 0 1 0 8 0a4 4 0 1 0 -8 0M400 226.5h5M411.5 248.5a4 4 0 1 0 8 0a4 4 0 1 0 -8 0M413 248.5h5M410.5 246.5a4 4 0 1 0 8 0a4 4 0 1 0 -8 0M412 246.5h5M409.5 243.5a4 4 0 1 0 8 0a4 4 0 1 0 -8 0M411 243.5h5M415.5 245.5a4 4 0 1 0 8 0a4 4 0 1 0 -8 0M417 245.5h5M415.5 242.5a4 4 0 1 0 8 0a4 4 0 1 0 -8 0M417 242.5h5M415.5 243.5a4 4 0 1 0 8 0a4 4 0 1 0 -8 0M417 243.5h5M419.5 241v5M400.5 235.5a4 4 0 1 0 8 0a4 4 0 1 0 -8 0M402 235.5h5M404.5 233v5M399.5 238.5a4 4 0 1 0 8 0a4 4 0 1 0 -8 0M401 238.5h5M397.5 241.5a4 4 0 1 0 8 0a4 4 0 1 0 -8 0M399 241.5h5M398.5 234.5a4 4 0 1 0 8 0a4 4 0 1 0 -8 0M400 234.5h5M397.5 230.5a4 4 0 1 0 8 0a4 4 0 1 0 -8 0M399 230.5h5M398.5 239.5a4 4 0 1 0 8 0a4 4 0 1 0 -8 0M400 239.5h5M402.5 237.5a4 4 0 1 0 8 0a4 4 0 1 0 -8 0M404 237.5h5M406.5 235v5M325.5 238.5a4 4 0 1 0 8 0a4 4 0 1 0 -8 0M327 238.5h5M317.5 234.5a4 4 0 1 0 8 0a4 4 0 1 0 -8 0M319 234.5h5M324.5 236.5a4 4 0 1 0 8 0a4 4 0 1 0 -8 0M326 236.5h5M317.5 232.5a4 4 0 1 0 8 0a4 4 0 1 0 -8 0M319 232.5h5M324.5 236.5a4 4 0 1 0 8 0a4 4 0 1 0 -8 0M326 236.5h5M324.5 228.5a4 4 0 1 0 8 0a4 4 0 1 0 -8 0M326 228.5h5M328.5 226v5M333.5 235.5a4 4 0 1 0 8 0a4 4 0 1 0 -8 0M335 235.5h5M315.5 235.5a4 4 0 1 0 8 0a4 4 0 1 0 -8 0M317 235.5h5M316.5 238.5a4 4 0 1 0 8 0a4 4 0 1 0 -8 0M318 238.5h5M326.5 232.5a4 4 0 1 0 8 0a4 4 0 1 0 -8 0M328 232.5h5M330.5 230v5M324.5 239.5a4 4 0 1 0 8 0a4 4 0 1 0 -8 0M326 239.5h5M315.5 237.5a4 4 0 1 0 8 0a4 4 0 1 0 -8 0M317 237.5h5M318.5 231.5a4 4 0 1 0 8 0a4 4 0 1 0 -8 0M320 231.5h5M322.5 232.5a4 4 0 1 0 8 0a4 4 0 1 0 -8 0M324 232.5h5M330.5 231.5a4 4 0 1 0 8 0a4 4 0 1 0 -8 0M332 231.5h5M324.5 235.5a4 4 0 1 0 8 0a4 4 0 1 0 -8 0M326 235.5h5M332.5 237.5a4 4 0 1 0 8 0a4 4 0 1 0 -8 0M334 237.5h5M330.5 234.5a4 4 0 1 0 8 0a4 4 0 1 0 -8 0M332 234.5h5M331.5 235.5a4 4 0 1 0 8 0a4 4 0 1 0 -8 0M333 235.5h5M335.5 233v5M338.5 232.5a4 4 0 1 0 8 0a4 4 0 1 0 -8 0M340 232.5h5M331.5 240.5a4 4 0 1 0 8 0a4 4 0 1 0 -8 0M333 240.5h5M335.5 238v5M334.5 236.5a4 4 0 1 0 8 0a4 4 0 1 0 -8 0M336 236.5h5M442.5 584.5a4 4 0 1 0 8 0a4 4 0 1 0 -8 0M444 584.5h5M442.5 567.5a4 4 0 1 0 8 0a4 4 0 1 0 -8 0M444 567.5h5M461.5 573.5a4 4 0 1 0 8 0a4 4 0 1 0 -8 0M463 573.5h5M440.5 574.5a4 4 0 1 0 8 0a4 4 0 1 0 -8 0M442 574.5h5M459.5 573.5a4 4 0 1 0 8 0a4 4 0 1 0 -8 0M461 573.5h5M436.5 579.5a4 4 0 1 0 8 0a4 4 0 1 0 -8 0M438 579.5h5M424.5 574.5a4 4 0 1 0 8 0a4 4 0 1 0 -8 0M426 574.5h5M428.5 572v5M444.5 564.5a4 4 0 1 0 8 0a4 4 0 1 0 -8 0M446 564.5h5M424.5 577.5a4 4 0 1 0 8 0a4 4 0 1 0 -8 0M426 577.5h5M427.5 575.5a4 4 0 1 0 8 0a4 4 0 1 0 -8 0M429 575.5h5M444.5 571.5a4 4 0 1 0 8 0a4 4 0 1 0 -8 0M446 571.5h5M445.5 584.5a4 4 0 1 0 8 0a4 4 0 1 0 -8 0M447 584.5h5M432.5 570.5a4 4 0 1 0 8 0a4 4 0 1 0 -8 0M434 570.5h5M446.5 560.5a4 4 0 1 0 8 0a4 4 0 1 0 -8 0M448 560.5h5M437.5 579.5a4 4 0 1 0 8 0a4 4 0 1 0 -8 0M439 579.5h5M455.5 575.5a4 4 0 1 0 8 0a4 4 0 1 0 -8 0M457 575.5h5M436.5 576.5a4 4 0 1 0 8 0a4 4 0 1 0 -8 0M438 576.5h5M440.5 583.5a4 4 0 1 0 8 0a4 4 0 1 0 -8 0M442 583.5h5M457.5 569.5a4 4 0 1 0 8 0a4 4 0 1 0 -8 0M459 569.5h5M432.5 583.5a4 4 0 1 0 8 0a4 4 0 1 0 -8 0M434 583.5h5M436.5 581v5M438.5 583.5a4 4 0 1 0 8 0a4 4 0 1 0 -8 0M440 583.5h5M431.5 575.5a4 4 0 1 0 8 0a4 4 0 1 0 -8 0M433 575.5h5M448.5 567.5a4 4 0 1 0 8 0a4 4 0 1 0 -8 0M450 567.5h5M448.5 581.5a4 4 0 1 0 8 0a4 4 0 1 0 -8 0M450 581.5h5M448.5 572.5a4 4 0 1 0 8 0a4 4 0 1 0 -8 0M450 572.5h5M439.5 578.5a4 4 0 1 0 8 0a4 4 0 1 0 -8 0M441 578.5h5M443.5 576v5M432.5 577.5a4 4 0 1 0 8 0a4 4 0 1 0 -8 0M434 577.5h5M434.5 569.5a4 4 0 1 0 8 0a4 4 0 1 0 -8 0M436 569.5h5M438.5 570.5a4 4 0 1 0 8 0a4 4 0 1 0 -8 0M440 570.5h5M451.5 570.5a4 4 0 1 0 8 0a4 4 0 1 0 -8 0M453 570.5h5M423.5 581.5a4 4 0 1 0 8 0a4 4 0 1 0 -8 0M425 581.5h5M455.5 621.5a4 4 0 1 0 8 0a4 4 0 1 0 -8 0M457 621.5h5M445.5 625.5a4 4 0 1 0 8 0a4 4 0 1 0 -8 0M447 625.5h5M449.5 616.5a4 4 0 1 0 8 0a4 4 0 1 0 -8 0M451 616.5h5M439.5 628.5a4 4 0 1 0 8 0a4 4 0 1 0 -8 0M441 628.5h5M463.5 643.5a4 4 0 1 0 8 0a4 4 0 1 0 -8 0M465 643.5h5M467.5 641v5M459.5 631.5a4 4 0 1 0 8 0a4 4 0 1 0 -8 0M461 631.5h5M450.5 623.5a4 4 0 1 0 8 0a4 4 0 1 0 -8 0M452 623.5h5M433.5 616.5a4 4 0 1 0 8 0a4 4 0 1 0 -8 0M435 616.5h5M468.5 628.5a4 4 0 1 0 8 0a4 4 0 1 0 -8 0M470 628.5h5M449.5 635.5a4 4 0 1 0 8 0a4 4 0 1 0 -8 0M451 635.5h5M439.5 606.5a4 4 0 1 0 8 0a4 4 0 1 0 -8 0M441 606.5h5M440.5 629.5a4 4 0 1 0 8 0a4 4 0 1 0 -8 0M442 629.5h5M444.5 627v5M464.5 643.5a4 4 0 1 0 8 0a4 4 0 1 0 -8 0M466 643.5h5M468.5 641v5M446.5 636.5a4 4 0 1 0 8 0a4 4 0 1 0 -8 0M448 636.5h5M457.5 610.5a4 4 0 1 0 8 0a4 4 0 1 0 -8 0M459 610.5h5M461.5 608v5M439.5 630.5a4 4 0 1 0 8 0a4 4 0 1 0 -8 0M441 630.5h5M462.5 612.5a4 4 0 1 0 8 0a4 4 0 1 0 -8 0M464 612.5h5M472.5 639.5a4 4 0 1 0 8 0a4 4 0 1 0 -8 0M474 639.5h5M453.5 609.5a4 4 0 1 0 8 0a4 4 0 1 0 -8 0M455 609.5h5M457.5 607v5M427.5 627.5a4 4 0 1 0 8 0a4 4 0 1 0 -8 0M429 627.5h5M470.5 613.5a4 4 0 1 0 8 0a4 4 0 1 0 -8 0M472 613.5h5M461.5 644.5a4 4 0 1 0 8 0a4 4 0 1 0 -8 0M463 644.5h5M445.5 621.5a4 4 0 1 0 8 0a4 4 0 1 0 -8 0M447 621.5h5M436.5 624.5a4 4 0 1 0 8 0a4 4 0 1 0 -8 0M438 624.5h5M459.5 622.5a4 4 0 1 0 8 0a4 4 0 1 0 -8 0M461 622.5h5M452.5 636.5a4 4 0 1 0 8 0a4 4 0 1 0 -8 0M454 636.5h5M457.5 616.5a4 4 0 1 0 8 0a4 4 0 1 0 -8 0M459 616.5h5M461.5 614v5M457.5 627.5a4 4 0 1 0 8 0a4 4 0 1 0 -8 0M459 627.5h5M461.5 625v5M462.5 600.5a4 4 0 1 0 8 0a4 4 0 1 0 -8 0M464 600.5h5M466.5 598v5M464.5 603.5a4 4 0 1 0 8 0a4 4 0 1 0 -8 0M466 603.5h5M472.5 598.5a4 4 0 1 0 8 0a4 4 0 1 0 -8 0M474 598.5h5M476.5 596v5M471.5 603.5a4 4 0 1 0 8 0a4 4 0 1 0 -8 0M473 603.5h5M467.5 596.5a4 4 0 1 0 8 0a4 4 0 1 0 -8 0M469 596.5h5M465.5 607.5a4 4 0 1 0 8 0a4 4 0 1 0 -8 0M467 607.5h5M469.5 605v5M480.5 622.5a4 4 0 1 0 8 0a4 4 0 1 0 -8 0M482 622.5h5M465.5 623.5a4 4 0 1 0 8 0a4 4 0 1 0 -8 0M467 623.5h5M469.5 621v5M474.5 608.5a4 4 0 1 0 8 0a4 4 0 1 0 -8 0M476 608.5h5M470.5 608.5a4 4 0 1 0 8 0a4 4 0 1 0 -8 0M472 608.5h5M473.5 627.5a4 4 0 1 0 8 0a4 4 0 1 0 -8 0M475 627.5h5M486.5 611.5a4 4 0 1 0 8 0a4 4 0 1 0 -8 0M488 611.5h5M482.5 614.5a4 4 0 1 0 8 0a4 4 0 1 0 -8 0M484 614.5h5M483.5 616.5a4 4 0 1 0 8 0a4 4 0 1 0 -8 0M485 616.5h5M474.5 613.5a4 4 0 1 0 8 0a4 4 0 1 0 -8 0M476 613.5h5M481.5 632.5a4 4 0 1 0 8 0a4 4 0 1 0 -8 0M483 632.5h5M478.5 631.5a4 4 0 1 0 8 0a4 4 0 1 0 -8 0M480 631.5h5M476.5 620.5a4 4 0 1 0 8 0a4 4 0 1 0 -8 0M478 620.5h5M486.5 621.5a4 4 0 1 0 8 0a4 4 0 1 0 -8 0M488 621.5h5M478.5 628.5a4 4 0 1 0 8 0a4 4 0 1 0 -8 0M480 628.5h5M477.5 630.5a4 4 0 1 0 8 0a4 4 0 1 0 -8 0M479 630.5h5M472.5 624.5a4 4 0 1 0 8 0a4 4 0 1 0 -8 0M474 624.5h5M210.5 10.5a4 4 0 1 0 8 0a4 4 0 1 0 -8 0M212 10.5h5M255 17.5h7M258.5 14v7M249.5 30.5a4 4 0 1 0 8 0a4 4 0 1 0 -8 0M251 30.5h5M253.5 28v5M257.5 39.5a4 4 0 1 0 8 0a4 4 0 1 0 -8 0M259 39.5h5M261.5 37v5M265.5 35.5a4 4 0 1 0 8 0a4 4 0 1 0 -8 0M267 35.5h5M246.5 59.5a4 4 0 1 0 8 0a4 4 0 1 0 -8 0M248 59.5h5M243.5 65.5a4 4 0 1 0 8 0a4 4 0 1 0 -8 0M245 65.5h5M247.5 63v5M270.5 125.5a4 4 0 1 0 8 0a4 4 0 1 0 -8 0M272 125.5h5M274.5 123v5M274.5 131.5a4 4 0 1 0 8 0a4 4 0 1 0 -8 0M276 131.5h5M289.5 130.5a4 4 0 1 0 8 0a4 4 0 1 0 -8 0M291 130.5h5M286.5 142.5a4 4 0 1 0 8 0a4 4 0 1 0 -8 0M288 142.5h5M315 120.5h7M318.5 117v7M315.5 149.5a4 4 0 1 0 8 0a4 4 0 1 0 -8 0M317 149.5h5M319.5 147v5M314.5 175.5a4 4 0 1 0 8 0a4 4 0 1 0 -8 0M316 175.5h5M315 185.5h7M277.5 192.5a4 4 0 1 0 8 0a4 4 0 1 0 -8 0M279 192.5h5M305 197.5h7M308.5 194v7M400.5 182.5a4 4 0 1 0 8 0a4 4 0 1 0 -8 0M402 182.5h5M418.5 17.5a4 4 0 1 0 8 0a4 4 0 1 0 -8 0M420 17.5h5M435.5 14.5a4 4 0 1 0 8 0a4 4 0 1 0 -8 0M437 14.5h5M423.5 28.5a4 4 0 1 0 8 0a4 4 0 1 0 -8 0M425 28.5h5M427.5 26v5M446.5 31.5a4 4 0 1 0 8 0a4 4 0 1 0 -8 0M448 31.5h5M450.5 29v5M444.5 45.5a4 4 0 1 0 8 0a4 4 0 1 0 -8 0M446 45.5h5M440.5 52.5a4 4 0 1 0 8 0a4 4 0 1 0 -8 0M442 52.5h5M440.5 60.5a4 4 0 1 0 8 0a4 4 0 1 0 -8 0M442 60.5h5M491.5 87.5a4 4 0 1 0 8 0a4 4 0 1 0 -8 0M493 87.5h5M434.5 102.5a4 4 0 1 0 8 0a4 4 0 1 0 -8 0M436 102.5h5M452.5 105.5a4 4 0 1 0 8 0a4 4 0 1 0 -8 0M454 105.5h5M512.5 54.5a4 4 0 1 0 8 0a4 4 0 1 0 -8 0M514 54.5h5M516.5 52v5M541.5 55.5a4 4 0 1 0 8 0a4 4 0 1 0 -8 0M543 55.5h5M545.5 53v5M556 52.5h7M559.5 49v7M562.5 62.5a4 4 0 1 0 8 0a4 4 0 1 0 -8 0M564 62.5h5M553.5 77.5a4 4 0 1 0 8 0a4 4 0 1 0 -8 0M555 77.5h5M567.5 86.5a4 4 0 1 0 8 0a4 4 0 1 0 -8 0M569 86.5h5M571.5 84v5M502.5 102.5a4 4 0 1 0 8 0a4 4 0 1 0 -8 0M504 102.5h5M498 102.5h7M510.5 121.5a4 4 0 1 0 8 0a4 4 0 1 0 -8 0M512 121.5h5M520.5 124.5a4 4 0 1 0 8 0a4 4 0 1 0 -8 0M522 124.5h5M507 133.5h7M510.5 130v7M520.5 135.5a4 4 0 1 0 8 0a4 4 0 1 0 -8 0M522 135.5h5M547 144.5h7M550.5 141v7M598.5 145.5a4 4 0 1 0 8 0a4 4 0 1 0 -8 0M600 145.5h5M493.5 145.5a4 4 0 1 0 8 0a4 4 0 1 0 -8 0M495 145.5h5M526.5 149.5a4 4 0 1 0 8 0a4 4 0 1 0 -8 0M528 149.5h5M518 157.5h7M521.5 154v7M535.5 167.5a4 4 0 1 0 8 0a4 4 0 1 0 -8 0M537 167.5h5M425.5 136.5a4 4 0 1 0 8 0a4 4 0 1 0 -8 0M427 136.5h5M422.5 143.5a4 4 0 1 0 8 0a4 4 0 1 0 -8 0M424 143.5h5M431.5 142.5a4 4 0 1 0 8 0a4 4 0 1 0 -8 0M433 142.5h5M445.5 146.5a4 4 0 1 0 8 0a4 4 0 1 0 -8 0M447 146.5h5M455.5 148.5a4 4 0 1 0 8 0a4 4 0 1 0 -8 0M457 148.5h5M411.5 166.5a4 4 0 1 0 8 0a4 4 0 1 0 -8 0M413 166.5h5M423.5 169.5a4 4 0 1 0 8 0a4 4 0 1 0 -8 0M425 169.5h5M427.5 167v5M421.5 186.5a4 4 0 1 0 8 0a4 4 0 1 0 -8 0M423 186.5h5M425.5 184v5M430.5 190.5a4 4 0 1 0 8 0a4 4 0 1 0 -8 0M432 190.5h5M434.5 188v5M433.5 195.5a4 4 0 1 0 8 0a4 4 0 1 0 -8 0M435 195.5h5M436.5 196.5a4 4 0 1 0 8 0a4 4 0 1 0 -8 0M438 196.5h5M430.5 199.5a4 4 0 1 0 8 0a4 4 0 1 0 -8 0M432 199.5h5M447.5 199.5a4 4 0 1 0 8 0a4 4 0 1 0 -8 0M449 199.5h5M403.5 183.5a4 4 0 1 0 8 0a4 4 0 1 0 -8 0M405 183.5h5M648.5 10.5a4 4 0 1 0 8 0a4 4 0 1 0 -8 0M650 10.5h5M653.5 17.5a4 4 0 1 0 8 0a4 4 0 1 0 -8 0M655 17.5h5M729.5 25.5a4 4 0 1 0 8 0a4 4 0 1 0 -8 0M731 25.5h5M660.5 99.5a4 4 0 1 0 8 0a4 4 0 1 0 -8 0M662 99.5h5M327.5 209.5a4 4 0 1 0 8 0a4 4 0 1 0 -8 0M329 209.5h5M324.5 223.5a4 4 0 1 0 8 0a4 4 0 1 0 -8 0M326 223.5h5M328.5 221v5M346.5 232.5a4 4 0 1 0 8 0a4 4 0 1 0 -8 0M348 232.5h5M348.5 239.5a4 4 0 1 0 8 0a4 4 0 1 0 -8 0M350 239.5h5M326.5 248.5a4 4 0 1 0 8 0a4 4 0 1 0 -8 0M328 248.5h5M339.5 265.5a4 4 0 1 0 8 0a4 4 0 1 0 -8 0M341 265.5h5M349.5 268.5a4 4 0 1 0 8 0a4 4 0 1 0 -8 0M351 268.5h5M346.5 272.5a4 4 0 1 0 8 0a4 4 0 1 0 -8 0M348 272.5h5M352.5 304.5a4 4 0 1 0 8 0a4 4 0 1 0 -8 0M354 304.5h5M362.5 307.5a4 4 0 1 0 8 0a4 4 0 1 0 -8 0M364 307.5h5M375.5 345.5a4 4 0 1 0 8 0a4 4 0 1 0 -8 0M377 345.5h5M393.5 265.5a4 4 0 1 0 8 0a4 4 0 1 0 -8 0M395 265.5h5M440.5 214.5a4 4 0 1 0 8 0a4 4 0 1 0 -8 0M442 214.5h5M444.5 212v5M433.5 240.5a4 4 0 1 0 8 0a4 4 0 1 0 -8 0M435 240.5h5M425.5 257.5a4 4 0 1 0 8 0a4 4 0 1 0 -8 0M427 257.5h5M429.5 255v5M423.5 270.5a4 4 0 1 0 8 0a4 4 0 1 0 -8 0M425 270.5h5M421.5 281.5a4 4 0 1 0 8 0a4 4 0 1 0 -8 0M423 281.5h5M525.5 223.5a4 4 0 1 0 8 0a4 4 0 1 0 -8 0M527 223.5h5M576.5 387.5a4 4 0 1 0 8 0a4 4 0 1 0 -8 0M578 387.5h5M694.5 242.5a4 4 0 1 0 8 0a4 4 0 1 0 -8 0M696 242.5h5M698.5 240v5M693.5 249.5a4 4 0 1 0 8 0a4 4 0 1 0 -8 0M695 249.5h5M697.5 247v5M749 295.5h7M752.5 292v7M607.5 330.5a4 4 0 1 0 8 0a4 4 0 1 0 -8 0M609 330.5h5M737.5 335.5a4 4 0 1 0 8 0a4 4 0 1 0 -8 0M739 335.5h5M713.5 354.5a4 4 0 1 0 8 0a4 4 0 1 0 -8 0M715 354.5h5M726.5 357.5a4 4 0 1 0 8 0a4 4 0 1 0 -8 0M728 357.5h5M713.5 370.5a4 4 0 1 0 8 0a4 4 0 1 0 -8 0M715 370.5h5M744.5 369.5a4 4 0 1 0 8 0a4 4 0 1 0 -8 0M746 369.5h5M794 371.5h7M797.5 368v7M608.5 381.5a4 4 0 1 0 8 0a4 4 0 1 0 -8 0M610 381.5h5M626.5 381.5a4 4 0 1 0 8 0a4 4 0 1 0 -8 0M628 381.5h5M650 403.5h7M653.5 400v7M27.5 512.5a4 4 0 1 0 8 0a4 4 0 1 0 -8 0M29 512.5h5M36.5 543.5a4 4 0 1 0 8 0a4 4 0 1 0 -8 0M38 543.5h5M40.5 541v5M401.5 584.5a4 4 0 1 0 8 0a4 4 0 1 0 -8 0M403 584.5h5M439 467.5h7M592.5 535.5a4 4 0 1 0 8 0a4 4 0 1 0 -8 0M594 535.5h5M683.5 582.5a4 4 0 1 0 8 0a4 4 0 1 0 -8 0M685 582.5h5M135.5 642.5a4 4 0 1 0 8 0a4 4 0 1 0 -8 0M137 642.5h5M139.5 640v5M6.5 723.5a4 4 0 1 0 8 0a4 4 0 1 0 -8 0M8 723.5h5M167.5 757.5a4 4 0 1 0 8 0a4 4 0 1 0 -8 0M169 757.5h5M389.5 621.5a4 4 0 1 0 8 0a4 4 0 1 0 -8 0M391 621.5h5M444 670.5h7M447.5 667v7M436.5 708.5a4 4 0 1 0 8 0a4 4 0 1 0 -8 0M438 708.5h5M440.5 706v5M433.5 728.5a4 4 0 1 0 8 0a4 4 0 1 0 -8 0M435 728.5h5M417.5 733.5a4 4 0 1 0 8 0a4 4 0 1 0 -8 0M419 733.5h5M421.5 731v5M456.5 748.5a4 4 0 1 0 8 0a4 4 0 1 0 -8 0M458 748.5h5M574.5 774.5a4 4 0 1 0 8 0a4 4 0 1 0 -8 0M576 774.5h5M578.5 772v5M581.5 775.5a4 4 0 1 0 8 0a4 4 0 1 0 -8 0M583 775.5h5M506.5 621.5a4 4 0 1 0 8 0a4 4 0 1 0 -8 0M508 621.5h5M530.5 623.5a4 4 0 1 0 8 0a4 4 0 1 0 -8 0M532 623.5h5M525.5 634.5a4 4 0 1 0 8 0a4 4 0 1 0 -8 0M527 634.5h5M529.5 632v5M537.5 641.5a4 4 0 1 0 8 0a4 4 0 1 0 -8 0M539 641.5h5M541.5 639v5M528.5 649.5a4 4 0 1 0 8 0a4 4 0 1 0 -8 0M530 649.5h5M532.5 647v5M491 641.5h7M556.5 671.5a4 4 0 1 0 8 0a4 4 0 1 0 -8 0M558 671.5h5M560.5 669v5M526.5 690.5a4 4 0 1 0 8 0a4 4 0 1 0 -8 0M528 690.5h5M530.5 688v5M584.5 686.5a4 4 0 1 0 8 0a4 4 0 1 0 -8 0M586 686.5h5M588.5 684v5M542.5 711.5a4 4 0 1 0 8 0a4 4 0 1 0 -8 0M544 711.5h5M546.5 709v5M560.5 702.5a4 4 0 1 0 8 0a4 4 0 1 0 -8 0M562 702.5h5M485.5 623.5a4 4 0 1 0 8 0a4 4 0 1 0 -8 0M487 623.5h5M489.5 621v5M493.5 610.5a4 4 0 1 0 8 0a4 4 0 1 0 -8 0M495 610.5h5M496.5 615.5a4 4 0 1 0 8 0a4 4 0 1 0 -8 0M498 615.5h5M500.5 613v5M488.5 615.5a4 4 0 1 0 8 0a4 4 0 1 0 -8 0M490 615.5h5M478.5 608.5a4 4 0 1 0 8 0a4 4 0 1 0 -8 0M480 608.5h5M475.5 622.5a4 4 0 1 0 8 0a4 4 0 1 0 -8 0M477 622.5h5M460.5 654.5a4 4 0 1 0 8 0a4 4 0 1 0 -8 0M462 654.5h5M661.5 619.5a4 4 0 1 0 8 0a4 4 0 1 0 -8 0M663 619.5h5M716.5 667.5a4 4 0 1 0 8 0a4 4 0 1 0 -8 0M718 667.5h5M788.5 677.5a4 4 0 1 0 8 0a4 4 0 1 0 -8 0M790 677.5h5M636.5 707.5a4 4 0 1 0 8 0a4 4 0 1 0 -8 0M638 707.5h5M751.5 735.5a4 4 0 1 0 8 0a4 4 0 1 0 -8 0M753 735.5h5M742.5 763.5a4 4 0 1 0 8 0a4 4 0 1 0 -8 0M744 763.5h5M497.5 161.5a4 4 0 1 0 8 0a4 4 0 1 0 -8 0M499 161.5h5M501.5 159v5M486.5 166.5a4 4 0 1 0 8 0a4 4 0 1 0 -8 0M488 166.5h5M492.5 174.5a4 4 0 1 0 8 0a4 4 0 1 0 -8 0M494 174.5h5M496.5 172v5M498.5 171.5a4 4 0 1 0 8 0a4 4 0 1 0 -8 0M500 171.5h5M505.5 171.5a4 4 0 1 0 8 0a4 4 0 1 0 -8 0M507 171.5h5M509.5 169v5M515.5 172.5a4 4 0 1 0 8 0a4 4 0 1 0 -8 0M517 172.5h5M519.5 170v5M521.5 187.5a4 4 0 1 0 8 0a4 4 0 1 0 -8 0M523 187.5h5M475.5 187.5a4 4 0 1 0 8 0a4 4 0 1 0 -8 0M477 187.5h5M479.5 185v5M480.5 189.5a4 4 0 1 0 8 0a4 4 0 1 0 -8 0M482 189.5h5M514.5 202.5a4 4 0 1 0 8 0a4 4 0 1 0 -8 0M516 202.5h5M436.5 197.5a4 4 0 1 0 8 0a4 4 0 1 0 -8 0M438 197.5h5M440.5 195v5M401.5 183.5a4 4 0 1 0 8 0a4 4 0 1 0 -8 0M403 183.5h5M405.5 181v5M430.5 196.5a4 4 0 1 0 8 0a4 4 0 1 0 -8 0M432 196.5h5M433.5 198.5a4 4 0 1 0 8 0a4 4 0 1 0 -8 0M435 198.5h5M437.5 196v5M436.5 201.5a4 4 0 1 0 8 0a4 4 0 1 0 -8 0M438 201.5h5M440.5 199v5M442.5 213.5a4 4 0 1 0 8 0a4 4 0 1 0 -8 0M444 213.5h5M675.5 345.5a4 4 0 1 0 8 0a4 4 0 1 0 -8 0M677 345.5h5M679.5 343v5M646.5 351.5a4 4 0 1 0 8 0a4 4 0 1 0 -8 0M648 351.5h5M667.5 363.5a4 4 0 1 0 8 0a4 4 0 1 0 -8 0M669 363.5h5M678.5 373.5a4 4 0 1 0 8 0a4 4 0 1 0 -8 0M680 373.5h5M471.5 595.5a4 4 0 1 0 8 0a4 4 0 1 0 -8 0M473 595.5h5M475.5 593v5M478.5 600.5a4 4 0 1 0 8 0a4 4 0 1 0 -8 0M480 600.5h5M493.5 610.5a4 4 0 1 0 8 0a4 4 0 1 0 -8 0M495 610.5h5M497.5 608v5M475.5 622.5a4 4 0 1 0 8 0a4 4 0 1 0 -8 0M477 622.5h5M479.5 620v5M469.5 608.5a4 4 0 1 0 8 0a4 4 0 1 0 -8 0M471 608.5h5"/>
<path stroke="#ffff00" d="M414.5 225.5a4 4 0 1 0 8 0a4 4 0 1 0 -8 0M416 225.5h5M413.5 230.5a4 4 0 1 0 8 0a4 4 0 1 0 -8 0M415 230.5h5M417.5 228v5M418.5 219.5a4 4 0 1 0 8 0a4 4 0 1 0 -8 0M420 219.5h5M415.5 219.5a4 4 0 1 0 8 0a4 4 0 1 0 -8 0M417 219.5h5M405.5 228.5a4 4 0 1 0 8 0a4 4 0 1 0 -8 0M407 228.5h5M409.5 226v5M405.5 222.5a4 4 0 1 0 8 0a4 4 0 1 0 -8 0M407 222.5h5M409.5 220v5M407.5 237.5a4 4 0 1 0 8 0a4 4 0 1 0 -8 0M409 237.5h5M420.5 231.5a4 4 0 1 0 8 0a4 4 0 1 0 -8 0M422 231.5h5M424.5 229v5M412.5 231.5a4 4 0 1 0 8 0a4 4 0 1 0 -8 0M414 231.5h5M409.5 224.5a4 4 0 1 0 8 0a4 4 0 1 0 -8 0M411 224.5h5M412.5 224.5a4 4 0 1 0 8 0a4 4 0 1 0 -8 0M414 224.5h5M418.5 224.5a4 4 0 1 0 8 0a4 4 0 1 0 -8 0M420 224.5h5M422.5 222v5M423.5 220.5a4 4 0 1 0 8 0a4 4 0 1 0 -8 0M425 220.5h5M427.5 218v5M419.5 222.5a4 4 0 1 0 8 0a4 4 0 1 0 -8 0M421 222.5h5M417.5 215.5a4 4 0 1 0 8 0a4 4 0 1 0 -8 0M419 215.5h5M406.5 231.5a4 4 0 1 0 8 0a4 4 0 1 0 -8 0M408 231.5h5M412.5 253.5a4 4 0 1 0 8 0a4 4 0 1 0 -8 0M414 253.5h5M410.5 252.5a4 4 0 1 0 8 0a4 4 0 1 0 -8 0M412 252.5h5M398.5 250.5a4 4 0 1 0 8 0a4 4 0 1 0 -8 0M400 250.5h5M402.5 248v5M418.5 243.5a4 4 0 1 0 8 0a4 4 0 1 0 -8 0M420 243.5h5M405.5 245.5a4 4 0 1 0 8 0a4 4 0 1 0 -8 0M407 245.5h5M403.5 238.5a4 4 0 1 0 8 0a4 4 0 1 0 -8 0M405 238.5h5M415.5 254.5a4 4 0 1 0 8 0a4 4 0 1 0 -8 0M417 254.5h5M419.5 252v5M396.5 246.5a4 4 0 1 0 8 0a4 4 0 1 0 -8 0M398 246.5h5M413.5 252.5a4 4 0 1 0 8 0a4 4 0 1 0 -8 0M415 252.5h5M399.5 247.5a4 4 0 1 0 8 0a4 4 0 1 0 -8 0M401 247.5h5M402.5 250.5a4 4 0 1 0 8 0a4 4 0 1 0 -8 0M404 250.5h5M413.5 253.5a4 4 0 1 0 8 0a4 4 0 1 0 -8 0M415 253.5h5M396.5 245.5a4 4 0 1 0 8 0a4 4 0 1 0 -8 0M398 245.5h5M400.5 243.5a4 4 0 1 0 8 0a4 4 0 1 0 -8 0M402 243.5h5M408.5 249.5a4 4 0 1 0 8 0a4 4 0 1 0 -8 0M410 249.5h5M399.5 250.5a4 4 0 1 0 8 0a4 4 0 1 0 -8 0M401 250.5h5M410.5 251.5a4 4 0 1 0 8 0a4 4 0 1 0 -8 0M412 251.5h5M414.5 249v5M414.5 247.5a4 4 0 1 0 8 0a4 4 0 1 0 -8 0M416 247.5h5M413.5 245.5a4 4 0 1 0 8 0a4 4 0 1 0 -8 0M415 245.5h5M412.5 238.5a4 4 0 1 0 8 0a4 4 0 1 0 -8 0M414 238.5h5M413.5 247.5a4 4 0 1 0 8 0a4 4 0 1 0 -8 0M415 247.5h5M406.5 251.5a4 4 0 1 0 8 0a4 4 0 1 0 -8 0M408 251.5h5M421.5 246.5a4 4 0 1 0 8 0a4 4 0 1 0 -8 0M423 246.5h5M414.5 252.5a4 4 0 1 0 8 0a4 4 0 1 0 -8 0M416 252.5h5M412.5 247.5a4 4 0 1 0 8 0a4 4 0 1 0 -8 0M414 247.5h5M403.5 254.5a4 4 0 1 0 8 0a4 4 0 1 0 -8 0M405 254.5h5M407.5 252v5M408.5 245.5a4 4 0 1 0 8 0a4 4 0 1 0 -8 0M410 245.5h5M414.5 241.5a4 4 0 1 0 8 0a4 4 0 1 0 -8 0M416 241.5h5M408.5 236.5a4 4 0 1 0 8 0a4 4 0 1 0 -8 0M410 236.5h5M412.5 234v5M410.5 247.5a4 4 0 1 0 8 0a4 4 0 1 0 -8 0M412 247.5h5M414.5 245v5M399.5 234.5a4 4 0 1 0 8 0a4 4 0 1 0 -8 0M401 234.5h5M398.5 238.5a4 4 0 1 0 8 0a4 4 0 1 0 -8 0M400 238.5h5M397.5 243.5a4 4 0 1 0 8 0a4 4 0 1 0 -8 0M399 243.5h5M669.5 380.5a4 4 0 1 0 8 0a4 4 0 1 0 -8 0M671 380.5h5M673.5 378v5M664.5 374.5a4 4 0 1 0 8 0a4 4 0 1 0 -8 0M666 374.5h5M677.5 371.5a4 4 0 1 0 8 0a4 4 0 1 0 -8 0M679 371.5h5M681.5 369v5M666.5 370.5a4 4 0 1 0 8 0a4 4 0 1 0 -8 0M668 370.5h5M670.5 381.5a4 4 0 1 0 8 0a4 4 0 1 0 -8 0M672 381.5h5M677.5 382.5a4 4 0 1 0 8 0a4 4 0 1 0 -8 0M679 382.5h5M674.5 375.5a4 4 0 1 0 8 0a4 4 0 1 0 -8 0M676 375.5h5M677.5 382.5a4 4 0 1 0 8 0a4 4 0 1 0 -8 0M679 382.5h5M681.5 380v5M676.5 379.5a4 4 0 1 0 8 0a4 4 0 1 0 -8 0M678 379.5h5M663.5 381.5a4 4 0 1 0 8 0a4 4 0 1 0 -8 0M665 381.5h5M667.5 379v5M677.5 383.5a4 4 0 1 0 8 0a4 4 0 1 0 -8 0M679 383.5h5M674.5 375.5a4 4 0 1 0 8 0a4 4 0 1 0 -8 0M676 375.5h5M678.5 373v5M663.5 379.5a4 4 0 1 0 8 0a4 4 0 1 0 -8 0M665 379.5h5M669.5 374.5a4 4 0 1 0 8 0a4 4 0 1 0 -8 0M671 374.5h5M673.5 372v5M670.5 371.5a4 4 0 1 0 8 0a4 4 0 1 0 -8 0M672 371.5h5M680.5 377.5a4 4 0 1 0 8 0a4 4 0 1 0 -8 0M682 377.5h5M441.5 596.5a4 4 0 1 0 8 0a4 4 0 1 0 -8 0M443 596.5h5M445.5 594v5M442.5 589.5a4 4 0 1 0 8 0a4 4 0 1 0 -8 0M444 589.5h5M440.5 587.5a4 4 0 1 0 8 0a4 4 0 1 0 -8 0M442 587.5h5M439.5 594.5a4 4 0 1 0 8 0a4 4 0 1 0 -8 0M441 594.5h5M441.5 591.5a4 4 0 1 0 8 0a4 4 0 1 0 -8 0M443 591.5h5M439.5 594.5a4 4 0 1 0 8 0a4 4 0 1 0 -8 0M441 594.5h5M441.5 591.5a4 4 0 1 0 8 0a4 4 0 1 0 -8 0M443 591.5h5M446.5 591.5a4 4 0 1 0 8 0a4 4 0 1 0 -8 0M448 591.5h5M440.5 592.5a4 4 0 1 0 8 0a4 4 0 1 0 -8 0M442 592.5h5M449.5 636.5a4 4 0 1 0 8 0a4 4 0 1 0 -8 0M451 636.5h5M454.5 634.5a4 4 0 1 0 8 0a4 4 0 1 0 -8 0M456 634.5h5M466.5 637.5a4 4 0 1 0 8 0a4 4 0 1 0 -8 0M468 637.5h5M473.5 620.5a4 4 0 1 0 8 0a4 4 0 1 0 -8 0M475 620.5h5M439.5 620.5a4 4 0 1 0 8 0a4 4 0 1 0 -8 0M441 620.5h5M462.5 637.5a4 4 0 1 0 8 0a4 4 0 1 0 -8 0M464 637.5h5M468.5 640.5a4 4 0 1 0 8 0a4 4 0 1 0 -8 0M470 640.5h5M472.5 638v5M447.5 626.5a4 4 0 1 0 8 0a4 4 0 1 0 -8 0M449 626.5h5M451.5 624v5M434.5 628.5a4 4 0 1 0 8 0a4 4 0 1 0 -8 0M436 628.5h5M438.5 619.5a4 4 0 1 0 8 0a4 4 0 1 0 -8 0M440 619.5h5M460.5 627.5a4 4 0 1 0 8 0a4 4 0 1 0 -8 0M462 627.5h5M469.5 637.5a4 4 0 1 0 8 0a4 4 0 1 0 -8 0M471 637.5h5M445.5 640.5a4 4 0 1 0 8 0a4 4 0 1 0 -8 0M447 640.5h5M436.5 643.5a4 4 0 1 0 8 0a4 4 0 1 0 -8 0M438 643.5h5M440.5 641v5M440.5 645.5a4 4 0 1 0 8 0a4 4 0 1 0 -8 0M442 645.5h5M453.5 619.5a4 4 0 1 0 8 0a4 4 0 1 0 -8 0M455 619.5h5M457.5 617v5M468.5 618.5a4 4 0 1 0 8 0a4 4 0 1 0 -8 0M470 618.5h5M472.5 616v5M465.5 599.5a4 4 0 1 0 8 0a4 4 0 1 0 -8 0M467 599.5h5M475.5 625.5a4 4 0 1 0 8 0a4 4 0 1 0 -8 0M477 625.5h5M458.5 636.5a4 4 0 1 0 8 0a4 4 0 1 0 -8 0M460 636.5h5M462.5 634v5M481.5 630.5a4 4 0 1 0 8 0a4 4 0 1 0 -8 0M483 630.5h5M485.5 628v5M457.5 612.5a4 4 0 1 0 8 0a4 4 0 1 0 -8 0M459 612.5h5M437.5 629.5a4 4 0 1 0 8 0a4 4 0 1 0 -8 0M439 629.5h5M441.5 627v5M446.5 630.5a4 4 0 1 0 8 0a4 4 0 1 0 -8 0M448 630.5h5M461.5 628.5a4 4 0 1 0 8 0a4 4 0 1 0 -8 0M463 628.5h5M465.5 626v5M448.5 624.5a4 4 0 1 0 8 0a4 4 0 1 0 -8 0M450 624.5h5M452.5 622v5M459.5 637.5a4 4 0 1 0 8 0a4 4 0 1 0 -8 0M461 637.5h5M445.5 629.5a4 4 0 1 0 8 0a4 4 0 1 0 -8 0M447 629.5h5M446.5 638.5a4 4 0 1 0 8 0a4 4 0 1 0 -8 0M448 638.5h5M442.5 626.5a4 4 0 1 0 8 0a4 4 0 1 0 -8 0M444 626.5h5M446.5 649.5a4 4 0 1 0 8 0a4 4 0 1 0 -8 0M448 649.5h5M450.5 647v5M447.5 638.5a4 4 0 1 0 8 0a4 4 0 1 0 -8 0M449 638.5h5M462.5 600.5a4 4 0 1 0 8 0a4 4 0 1 0 -8 0M464 600.5h5M458.5 645.5a4 4 0 1 0 8 0a4 4 0 1 0 -8 0M460 645.5h5M468.5 623.5a4 4 0 1 0 8 0a4 4 0 1 0 -8 0M470 623.5h5M466.5 623.5a4 4 0 1 0 8 0a4 4 0 1 0 -8 0M468 623.5h5M470.5 621v5M439.5 653.5a4 4 0 1 0 8 0a4 4 0 1 0 -8 0M441 653.5h5M428.5 634.5a4 4 0 1 0 8 0a4 4 0 1 0 -8 0M430 634.5h5M432.5 632v5M456.5 635.5a4 4 0 1 0 8 0a4 4 0 1 0 -8 0M458 635.5h5M460.5 633v5M455.5 619.5a4 4 0 1 0 8 0a4 4 0 1 0 -8 0M457 619.5h5M445.5 615.5a4 4 0 1 0 8 0a4 4 0 1 0 -8 0M447 615.5h5M479.5 631.5a4 4 0 1 0 8 0a4 4 0 1 0 -8 0M481 631.5h5M457.5 618.5a4 4 0 1 0 8 0a4 4 0 1 0 -8 0M459 618.5h5M446.5 632.5a4 4 0 1 0 8 0a4 4 0 1 0 -8 0M448 632.5h5M434.5 627.5a4 4 0 1 0 8 0a4 4 0 1 0 -8 0M436 627.5h5M471.5 608.5a4 4 0 1 0 8 0a4 4 0 1 0 -8 0M473 608.5h5M474.5 637.5a4 4 0 1 0 8 0a4 4 0 1 0 -8 0M476 637.5h5M454.5 620.5a4 4 0 1 0 8 0a4 4 0 1 0 -8 0M456 620.5h5M454.5 632.5a4 4 0 1 0 8 0a4 4 0 1 0 -8 0M456 632.5h5M458.5 630v5M429.5 617.5a4 4 0 1 0 8 0a4 4 0 1 0 -8 0M431 617.5h5M460.5 621.5a4 4 0 1 0 8 0a4 4 0 1 0 -8 0M462 621.5h5M464.5 640.5a4 4 0 1 0 8 0a4 4 0 1 0 -8 0M466 640.5h5M468.5 638v5M443.5 632.5a4 4 0 1 0 8 0a4 4 0 1 0 -8 0M445 632.5h5M445.5 637.5a4 4 0 1 0 8 0a4 4 0 1 0 -8 0M447 637.5h5M449.5 635v5M439.5 639.5a4 4 0 1 0 8 0a4 4 0 1 0 -8 0M441 639.5h5M461.5 642.5a4 4 0 1 0 8 0a4 4 0 1 0 -8 0M463 642.5h5M440.5 635.5a4 4 0 1 0 8 0a4 4 0 1 0 -8 0M442 635.5h5M444.5 633v5M471.5 630.5a4 4 0 1 0 8 0a4 4 0 1 0 -8 0M473 630.5h5M439.5 640.5a4 4 0 1 0 8 0a4 4 0 1 0 -8 0M441 640.5h5M463.5 634.5a4 4 0 1 0 8 0a4 4 0 1 0 -8 0M465 634.5h5M432.5 617.5a4 4 0 1 0 8 0a4 4 0 1 0 -8 0M434 617.5h5M436.5 615v5M455.5 618.5a4 4 0 1 0 8 0a4 4 0 1 0 -8 0M457 618.5h5M472.5 619.5a4 4 0 1 0 8 0a4 4 0 1 0 -8 0M474 619.5h5M444.5 620.5a4 4 0 1 0 8 0a4 4 0 1 0 -8 0M446 620.5h5M439.5 632.5a4 4 0 1 0 8 0a4 4 0 1 0 -8 0M441 632.5h5M449.5 624.5a4 4 0 1 0 8 0a4 4 0 1 0 -8 0M451 624.5h5M464.5 625.5a4 4 0 1 0 8 0a4 4 0 1 0 -8 0M466 625.5h5M468.5 623v5M440.5 613.5a4 4 0 1 0 8 0a4 4 0 1 0 -8 0M442 613.5h5M444.5 611v5M443.5 628.5a4 4 0 1 0 8 0a4 4 0 1 0 -8 0M445 628.5h5M443.5 624.5a4 4 0 1 0 8 0a4 4 0 1 0 -8 0M445 624.5h5M474.5 646.5a4 4 0 1 0 8 0a4 4 0 1 0 -8 0M476 646.5h5M465.5 625.5a4 4 0 1 0 8 0a4 4 0 1 0 -8 0M467 625.5h5M469.5 623v5M452.5 649.5a4 4 0 1 0 8 0a4 4 0 1 0 -8 0M454 649.5h5M456.5 647v5M448.5 636.5a4 4 0 1 0 8 0a4 4 0 1 0 -8 0M450 636.5h5M437.5 644.5a4 4 0 1 0 8 0a4 4 0 1 0 -8 0M439 644.5h5M450.5 639.5a4 4 0 1 0 8 0a4 4 0 1 0 -8 0M452 639.5h5M442.5 636.5a4 4 0 1 0 8 0a4 4 0 1 0 -8 0M444 636.5h5M443.5 634.5a4 4 0 1 0 8 0a4 4 0 1 0 -8 0M445 634.5h5M447.5 632v5M435.5 650.5a4 4 0 1 0 8 0a4 4 0 1 0 -8 0M437 650.5h5M439.5 648v5M439.5 650.5a4 4 0 1 0 8 0a4 4 0 1 0 -8 0M441 650.5h5M441.5 641.5a4 4 0 1 0 8 0a4 4 0 1 0 -8 0M443 641.5h5M445.5 639v5M440.5 643.5a4 4 0 1 0 8 0a4 4 0 1 0 -8 0M442 643.5h5M443.5 648.5a4 4 0 1 0 8 0a4 4 0 1 0 -8 0M445 648.5h5M450.5 649.5a4 4 0 1 0 8 0a4 4 0 1 0 -8 0M452 649.5h5M460.5 598.5a4 4 0 1 0 8 0a4 4 0 1 0 -8 0M462 598.5h5M464.5 596v5M470.5 598.5a4 4 0 1 0 8 0a4 4 0 1 0 -8 0M472 598.5h5M474.5 596v5M473.5 595.5a4 4 0 1 0 8 0a4 4 0 1 0 -8 0M475 595.5h5M468.5 599.5a4 4 0 1 0 8 0a4 4 0 1 0 -8 0M470 599.5h5M471.5 625.5a4 4 0 1 0 8 0a4 4 0 1 0 -8 0M473 625.5h5M478.5 614.5a4 4 0 1 0 8 0a4 4 0 1 0 -8 0M480 614.5h5M477.5 605.5a4 4 0 1 0 8 0a4 4 0 1 0 -8 0M479 605.5h5M481.5 603v5M465.5 617.5a4 4 0 1 0 8 0a4 4 0 1 0 -8 0M467 617.5h5M473.5 612.5a4 4 0 1 0 8 0a4 4 0 1 0 -8 0M475 612.5h5M478.5 624.5a4 4 0 1 0 8 0a4 4 0 1 0 -8 0M480 624.5h5M248.5 25.5a4 4 0 1 0 8 0a4 4 0 1 0 -8 0M250 25.5h5M293.5 87.5a4 4 0 1 0 8 0a4 4 0 1 0 -8 0M295 87.5h5M297.5 85v5M267.5 93.5a4 4 0 1 0 8 0a4 4 0 1 0 -8 0M269 93.5h5M271.5 91v5M279.5 129.5a4 4 0 1 0 8 0a4 4 0 1 0 -8 0M281 129.5h5M283.5 127v5M258.5 145.5a4 4 0 1 0 8 0a4 4 0 1 0 -8 0M260 145.5h5M262.5 143v5M438.5 65.5a4 4 0 1 0 8 0a4 4 0 1 0 -8 0M440 65.5h5M417.5 81.5a4 4 0 1 0 8 0a4 4 0 1 0 -8 0M419 81.5h5M420.5 103.5a4 4 0 1 0 8 0a4 4 0 1 0 -8 0M422 103.5h5M527.5 53.5a4 4 0 1 0 8 0a4 4 0 1 0 -8 0M529 53.5h5M500.5 110.5a4 4 0 1 0 8 0a4 4 0 1 0 -8 0M502 110.5h5M504.5 108v5M611.5 9.5a4 4 0 1 0 8 0a4 4 0 1 0 -8 0M613 9.5h5M435.5 223.5a4 4 0 1 0 8 0a4 4 0 1 0 -8 0M437 223.5h5M410.5 265.5a4 4 0 1 0 8 0a4 4 0 1 0 -8 0M412 265.5h5M404 390.5h7M407.5 387v7M610.5 396.5a4 4 0 1 0 8 0a4 4 0 1 0 -8 0M612 396.5h5M617.5 401.5a4 4 0 1 0 8 0a4 4 0 1 0 -8 0M619 401.5h5M540.5 571.5a4 4 0 1 0 8 0a4 4 0 1 0 -8 0M542 571.5h5M677.5 406.5a4 4 0 1 0 8 0a4 4 0 1 0 -8 0M679 406.5h5M681.5 404v5M644.5 426.5a4 4 0 1 0 8 0a4 4 0 1 0 -8 0M646 426.5h5M734.5 602.5a4 4 0 1 0 8 0a4 4 0 1 0 -8 0M736 602.5h5M57.5 746.5a4 4 0 1 0 8 0a4 4 0 1 0 -8 0M59 746.5h5M223.5 705.5a4 4 0 1 0 8 0a4 4 0 1 0 -8 0M225 705.5h5M424 624.5h7M427.5 621v7M430.5 709.5a4 4 0 1 0 8 0a4 4 0 1 0 -8 0M432 709.5h5M415 756.5h7M418.5 753v7M405 739.5h7M444.5 755.5a4 4 0 1 0 8 0a4 4 0 1 0 -8 0M446 755.5h5M441.5 761.5a4 4 0 1 0 8 0a4 4 0 1 0 -8 0M443 761.5h5M445.5 759v5M444.5 765.5a4 4 0 1 0 8 0a4 4 0 1 0 -8 0M446 765.5h5M434.5 768.5a4 4 0 1 0 8 0a4 4 0 1 0 -8 0M436 768.5h5M438.5 766v5M429.5 768.5a4 4 0 1 0 8 0a4 4 0 1 0 -8 0M431 768.5h5M431.5 776.5a4 4 0 1 0 8 0a4 4 0 1 0 -8 0M433 776.5h5M458.5 780.5a4 4 0 1 0 8 0a4 4 0 1 0 -8 0M460 780.5h5M462.5 778v5M451.5 793.5a4 4 0 1 0 8 0a4 4 0 1 0 -8 0M453 793.5h5M455.5 791v5M577.5 792.5a4 4 0 1 0 8 0a4 4 0 1 0 -8 0M579 792.5h5M601.5 755.5a4 4 0 1 0 8 0a4 4 0 1 0 -8 0M603 755.5h5M508.5 646.5a4 4 0 1 0 8 0a4 4 0 1 0 -8 0M510 646.5h5M519.5 686.5a4 4 0 1 0 8 0a4 4 0 1 0 -8 0M521 686.5h5M523.5 684v5M547.5 689.5a4 4 0 1 0 8 0a4 4 0 1 0 -8 0M549 689.5h5M566.5 699.5a4 4 0 1 0 8 0a4 4 0 1 0 -8 0M568 699.5h5M568.5 709.5a4 4 0 1 0 8 0a4 4 0 1 0 -8 0M570 709.5h5M572.5 707v5M448.5 657.5a4 4 0 1 0 8 0a4 4 0 1 0 -8 0M450 657.5h5M438.5 654.5a4 4 0 1 0 8 0a4 4 0 1 0 -8 0M440 654.5h5M426.5 633.5a4 4 0 1 0 8 0a4 4 0 1 0 -8 0M428 633.5h5M673.5 631.5a4 4 0 1 0 8 0a4 4 0 1 0 -8 0M675 631.5h5M705.5 631.5a4 4 0 1 0 8 0a4 4 0 1 0 -8 0M707 631.5h5M724.5 664.5a4 4 0 1 0 8 0a4 4 0 1 0 -8 0M726 664.5h5M728.5 662v5M770 676.5h7M635.5 723.5a4 4 0 1 0 8 0a4 4 0 1 0 -8 0M637 723.5h5M625.5 729.5a4 4 0 1 0 8 0a4 4 0 1 0 -8 0M627 729.5h5M481.5 170.5a4 4 0 1 0 8 0a4 4 0 1 0 -8 0M483 170.5h5M510.5 180.5a4 4 0 1 0 8 0a4 4 0 1 0 -8 0M512 180.5h5M504.5 186.5a4 4 0 1 0 8 0a4 4 0 1 0 -8 0M506 186.5h5M508.5 184v5M409.5 261.5a4 4 0 1 0 8 0a4 4 0 1 0 -8 0M411 261.5h5M422.5 257.5a4 4 0 1 0 8 0a4 4 0 1 0 -8 0M424 257.5h5M426.5 255v5M426.5 258.5a4 4 0 1 0 8 0a4 4 0 1 0 -8 0M428 258.5h5M633.5 358.5a4 4 0 1 0 8 0a4 4 0 1 0 -8 0M635 358.5h5M687.5 366.5a4 4 0 1 0 8 0a4 4 0 1 0 -8 0M689 366.5h5M691.5 364v5M637.5 371.5a4 4 0 1 0 8 0a4 4 0 1 0 -8 0M639 371.5h5M644.5 373.5a4 4 0 1 0 8 0a4 4 0 1 0 -8 0M646 373.5h5M648.5 371v5M638.5 377.5a4 4 0 1 0 8 0a4 4 0 1 0 -8 0M640 377.5h5M641.5 381.5a4 4 0 1 0 8 0a4 4 0 1 0 -8 0M643 381.5h5M645.5 379v5M648.5 381.5a4 4 0 1 0 8 0a4 4 0 1 0 -8 0M650 381.5h5M652.5 379v5M644.5 384.5a4 4 0 1 0 8 0a4 4 0 1 0 -8 0M646 384.5h5M659.5 375.5a4 4 0 1 0 8 0a4 4 0 1 0 -8 0M661 375.5h5M661.5 379.5a4 4 0 1 0 8 0a4 4 0 1 0 -8 0M663 379.5h5M657.5 383.5a4 4 0 1 0 8 0a4 4 0 1 0 -8 0M659 383.5h5M655.5 389.5a4 4 0 1 0 8 0a4 4 0 1 0 -8 0M657 389.5h5M659.5 397.5a4 4 0 1 0 8 0a4 4 0 1 0 -8 0M661 397.5h5M671.5 384.5a4 4 0 1 0 8 0a4 4 0 1 0 -8 0M673 384.5h5M675.5 386.5a4 4 0 1 0 8 0a4 4 0 1 0 -8 0M677 386.5h5M680.5 387.5a4 4 0 1 0 8 0a4 4 0 1 0 -8 0M682 387.5h5M683.5 387.5a4 4 0 1 0 8 0a4 4 0 1 0 -8 0M685 387.5h5M687.5 385v5M481.5 601.5a4 4 0 1 0 8 0a4 4 0 1 0 -8 0M483 601.5h5M485.5 599v5"/>
<path stroke="#ffc000" d="M668.5 373.5a4 4 0 1 0 8 0a4 4 0 1 0 -8 0M670 373.5h5M668.5 372.5a4 4 0 1 0 8 0a4 4 0 1 0 -8 0M670 372.5h5M669.5 368.5a4 4 0 1 0 8 0a4 4 0 1 0 -8 0M671 368.5h5M673.5 366v5M668.5 373.5a4 4 0 1 0 8 0a4 4 0 1 0 -8 0M670 373.5h5M672.5 371v5M669.5 372.5a4 4 0 1 0 8 0a4 4 0 1 0 -8 0M671 372.5h5M669.5 371.5a4 4 0 1 0 8 0a4 4 0 1 0 -8 0M671 371.5h5M671.5 374.5a4 4 0 1 0 8 0a4 4 0 1 0 -8 0M673 374.5h5M669.5 374.5a4 4 0 1 0 8 0a4 4 0 1 0 -8 0M671 374.5h5M673.5 372v5M670.5 372.5a4 4 0 1 0 8 0a4 4 0 1 0 -8 0M672 372.5h5M670.5 370.5a4 4 0 1 0 8 0a4 4 0 1 0 -8 0M672 370.5h5M667.5 373.5a4 4 0 1 0 8 0a4 4 0 1 0 -8 0M669 373.5h5M670.5 373.5a4 4 0 1 0 8 0a4 4 0 1 0 -8 0M672 373.5h5M668.5 371.5a4 4 0 1 0 8 0a4 4 0 1 0 -8 0M670 371.5h5M667.5 373.5a4 4 0 1 0 8 0a4 4 0 1 0 -8 0M669 373.5h5M669.5 374.5a4 4 0 1 0 8 0a4 4 0 1 0 -8 0M671 374.5h5M669.5 371.5a4 4 0 1 0 8 0a4 4 0 1 0 -8 0M671 371.5h5M673.5 369v5M667.5 375.5a4 4 0 1 0 8 0a4 4 0 1 0 -8 0M669 375.5h5M667.5 373.5a4 4 0 1 0 8 0a4 4 0 1 0 -8 0M669 373.5h5M667.5 373.5a4 4 0 1 0 8 0a4 4 0 1 0 -8 0M669 373.5h5M670.5 372.5a4 4 0 1 0 8 0a4 4 0 1 0 -8 0M672 372.5h5M668.5 371.5a4 4 0 1 0 8 0a4 4 0 1 0 -8 0M670 371.5h5M668.5 374.5a4 4 0 1 0 8 0a4 4 0 1 0 -8 0M670 374.5h5M459.5 599.5a4 4 0 1 0 8 0a4 4 0 1 0 -8 0M461 599.5h5M459.5 610.5a4 4 0 1 0 8 0a4 4 0 1 0 -8 0M461 610.5h5M455.5 611.5a4 4 0 1 0 8 0a4 4 0 1 0 -8 0M457 611.5h5M455.5 603.5a4 4 0 1 0 8 0a4 4 0 1 0 -8 0M457 603.5h5M458.5 617.5a4 4 0 1 0 8 0a4 4 0 1 0 -8 0M460 617.5h5M451.5 603.5a4 4 0 1 0 8 0a4 4 0 1 0 -8 0M453 603.5h5M455.5 601v5M454.5 612.5a4 4 0 1 0 8 0a4 4 0 1 0 -8 0M456 612.5h5M453.5 610.5a4 4 0 1 0 8 0a4 4 0 1 0 -8 0M455 610.5h5M457.5 608v5M457.5 611.5a4 4 0 1 0 8 0a4 4 0 1 0 -8 0M459 611.5h5M443.5 610.5a4 4 0 1 0 8 0a4 4 0 1 0 -8 0M445 610.5h5M447.5 608v5M452.5 606.5a4 4 0 1 0 8 0a4 4 0 1 0 -8 0M454 606.5h5M453.5 608.5a4 4 0 1 0 8 0a4 4 0 1 0 -8 0M455 608.5h5M463.5 615.5a4 4 0 1 0 8 0a4 4 0 1 0 -8 0M465 615.5h5M452.5 612.5a4 4 0 1 0 8 0a4 4 0 1 0 -8 0M454 612.5h5M457.5 613.5a4 4 0 1 0 8 0a4 4 0 1 0 -8 0M459 613.5h5M450.5 615.5a4 4 0 1 0 8 0a4 4 0 1 0 -8 0M452 615.5h5M462.5 612.5a4 4 0 1 0 8 0a4 4 0 1 0 -8 0M464 612.5h5M461.5 613.5a4 4 0 1 0 8 0a4 4 0 1 0 -8 0M463 613.5h5M463.5 604.5a4 4 0 1 0 8 0a4 4 0 1 0 -8 0M465 604.5h5M457.5 604.5a4 4 0 1 0 8 0a4 4 0 1 0 -8 0M459 604.5h5M461.5 602v5M446.5 611.5a4 4 0 1 0 8 0a4 4 0 1 0 -8 0M448 611.5h5M459.5 618.5a4 4 0 1 0 8 0a4 4 0 1 0 -8 0M461 618.5h5M464.5 610.5a4 4 0 1 0 8 0a4 4 0 1 0 -8 0M466 610.5h5M458.5 616.5a4 4 0 1 0 8 0a4 4 0 1 0 -8 0M460 616.5h5M449.5 613.5a4 4 0 1 0 8 0a4 4 0 1 0 -8 0M451 613.5h5M445.5 610.5a4 4 0 1 0 8 0a4 4 0 1 0 -8 0M447 610.5h5M451.5 617.5a4 4 0 1 0 8 0a4 4 0 1 0 -8 0M453 617.5h5M454.5 605.5a4 4 0 1 0 8 0a4 4 0 1 0 -8 0M456 605.5h5M455.5 606.5a4 4 0 1 0 8 0a4 4 0 1 0 -8 0M457 606.5h5M459.5 617.5a4 4 0 1 0 8 0a4 4 0 1 0 -8 0M461 617.5h5M457.5 608.5a4 4 0 1 0 8 0a4 4 0 1 0 -8 0M459 608.5h5M461.5 606v5M450.5 605.5a4 4 0 1 0 8 0a4 4 0 1 0 -8 0M452 605.5h5M460.5 612.5a4 4 0 1 0 8 0a4 4 0 1 0 -8 0M462 612.5h5M454.5 605.5a4 4 0 1 0 8 0a4 4 0 1 0 -8 0M456 605.5h5M454.5 608.5a4 4 0 1 0 8 0a4 4 0 1 0 -8 0M456 608.5h5M458.5 606v5M449.5 603.5a4 4 0 1 0 8 0a4 4 0 1 0 -8 0M451 603.5h5M453.5 601v5M460.5 617.5a4 4 0 1 0 8 0a4 4 0 1 0 -8 0M462 617.5h5M454.5 610.5a4 4 0 1 0 8 0a4 4 0 1 0 -8 0M456 610.5h5M461.5 606.5a4 4 0 1 0 8 0a4 4 0 1 0 -8 0M463 606.5h5M449.5 607.5a4 4 0 1 0 8 0a4 4 0 1 0 -8 0M451 607.5h5M461.5 609.5a4 4 0 1 0 8 0a4 4 0 1 0 -8 0M463 609.5h5M450.5 609.5a4 4 0 1 0 8 0a4 4 0 1 0 -8 0M452 609.5h5M458.5 610.5a4 4 0 1 0 8 0a4 4 0 1 0 -8 0M460 610.5h5M454.5 609.5a4 4 0 1 0 8 0a4 4 0 1 0 -8 0M456 609.5h5M458.5 607v5M455.5 600.5a4 4 0 1 0 8 0a4 4 0 1 0 -8 0M457 600.5h5M459.5 598v5M454.5 612.5a4 4 0 1 0 8 0a4 4 0 1 0 -8 0M456 612.5h5M453.5 611.5a4 4 0 1 0 8 0a4 4 0 1 0 -8 0M455 611.5h5M460.5 614.5a4 4 0 1 0 8 0a4 4 0 1 0 -8 0M462 614.5h5M452.5 609.5a4 4 0 1 0 8 0a4 4 0 1 0 -8 0M454 609.5h5M443.5 609.5a4 4 0 1 0 8 0a4 4 0 1 0 -8 0M445 609.5h5M452.5 601.5a4 4 0 1 0 8 0a4 4 0 1 0 -8 0M454 601.5h5M456.5 599v5M455.5 609.5a4 4 0 1 0 8 0a4 4 0 1 0 -8 0M457 609.5h5M458.5 614.5a4 4 0 1 0 8 0a4 4 0 1 0 -8 0M460 614.5h5M468.5 610.5a4 4 0 1 0 8 0a4 4 0 1 0 -8 0M470 610.5h5M454.5 601.5a4 4 0 1 0 8 0a4 4 0 1 0 -8 0M456 601.5h5M455.5 613.5a4 4 0 1 0 8 0a4 4 0 1 0 -8 0M457 613.5h5M459.5 611v5M454.5 611.5a4 4 0 1 0 8 0a4 4 0 1 0 -8 0M456 611.5h5M458.5 609v5M463.5 616.5a4 4 0 1 0 8 0a4 4 0 1 0 -8 0M465 616.5h5M467.5 614v5M454.5 608.5a4 4 0 1 0 8 0a4 4 0 1 0 -8 0M456 608.5h5M458.5 606v5M457.5 617.5a4 4 0 1 0 8 0a4 4 0 1 0 -8 0M459 617.5h5M458.5 611.5a4 4 0 1 0 8 0a4 4 0 1 0 -8 0M460 611.5h5M460.5 617.5a4 4 0 1 0 8 0a4 4 0 1 0 -8 0M462 617.5h5M464.5 615v5"/>
<path stroke="#ffff00" d="M669.5 373.5a4 4 0 1 0 8 0a4 4 0 1 0 -8 0M671 373.5h5M671.5 375.5a4 4 0 1 0 8 0a4 4 0 1 0 -8 0M673 375.5h5M669.5 373.5a4 4 0 1 0 8 0a4 4 0 1 0 -8 0M671 373.5h5M673.5 371v5M669.5 374.5a4 4 0 1 0 8 0a4 4 0 1 0 -8 0M671 374.5h5M673.5 372v5M446.5 611.5a4 4 0 1 0 8 0a4 4 0 1 0 -8 0M448 611.5h5M451.5 621.5a4 4 0 1 0 8 0a4 4 0 1 0 -8 0M453 621.5h5M455.5 619v5M450.5 615.5a4 4 0 1 0 8 0a4 4 0 1 0 -8 0M452 615.5h5M454.5 611.5a4 4 0 1 0 8 0a4 4 0 1 0 -8 0M456 611.5h5M451.5 606.5a4 4 0 1 0 8 0a4 4 0 1 0 -8 0M453 606.5h5M459.5 615.5a4 4 0 1 0 8 0a4 4 0 1 0 -8 0M461 615.5h5M449.5 612.5a4 4 0 1 0 8 0a4 4 0 1 0 -8 0M451 612.5h5M456.5 602.5a4 4 0 1 0 8 0a4 4 0 1 0 -8 0M458 602.5h5M456.5 612.5a4 4 0 1 0 8 0a4 4 0 1 0 -8 0M458 612.5h5"/>
<path stroke="#00e5ff" d="M307.5 241.5a4 4 0 1 0 8 0a4 4 0 1 0 -8 0M309 241.5h5M311.5 239v5M406.5 230.5a4 4 0 1 0 8 0a4 4 0 1 0 -8 0M408 230.5h5M410.5 228v5M660.5 347.5a4 4 0 1 0 8 0a4 4 0 1 0 -8 0M662 347.5h5M653 364.5h7M656.5 361v7M433.5 567.5a4 4 0 1 0 8 0a4 4 0 1 0 -8 0M435 567.5h5M432.5 581.5a4 4 0 1 0 8 0a4 4 0 1 0 -8 0M434 581.5h5"/>

</g>
<path d="M416 203.5L435.5 223L416 242.5L396.5 223ZM677.6 361.5L697.1 381L677.6 400.5L658.1 381ZM445.4 563.4L464.9 582.9L445.4 602.4L425.9 582.9ZM422 786.5L441.5 806L422 825.5L402.5 806Z" fill="none" stroke="#00e020" stroke-width="1.1" stroke-dasharray="5 5"/>
<path d="M394.5 6h21.5v6h-21.5zM394.5 123h21.5v9h-21.5zM398 362h15.5v9h-15.5z" fill="#5d504b"/>
<g style="font-family:'DejaVu Sans','Liberation Sans',sans-serif;font-size:10.6px;letter-spacing:0.4px;fill:#fff">
<text x="395.3" y="11.2" fill="#ffffa0">313</text>
<text x="395.3" y="131.2" fill="#ffffa0">219</text>
<text x="399" y="370.4" fill="#ffffa0">31</text>
<text x="347.6" y="160.8">L-3910<tspan fill="#00e5ff">-</tspan>2<tspan fill="#ffff00">–</tspan></text>
<text x="608.4" y="318.6">B-4573<tspan fill="#00e5ff">-</tspan>2<tspan fill="#ffff00">–</tspan></text>
<text x="375.6" y="521.3">I-1203<tspan fill="#00e5ff">-</tspan>2<tspan fill="#ffff00">^</tspan></text>
<text x="353.3" y="742.8">T-5717<tspan fill="#00e5ff">-</tspan>2<tspan fill="#ffff00">–</tspan></text>
</g>
</svg>
<div id="legend"><svg width="243" height="44" viewBox="9 759 243 44" style="position:absolute;left:0;top:0" fill="none" stroke-width="1.08"><g stroke="#00e5ff"><circle cx="59.5" cy="780.5" r="4"/><path d="M57 780.5h5M81 780.5h7M107 780.5h5M109.5 778.0v5M131 780.5h7M134.5 777.0v7"/><circle cx="109.5" cy="780.5" r="4"/></g><g stroke="#ffff00"><circle cx="59.5" cy="793.5" r="4"/><path d="M57 793.5h5M81 793.5h7M107 793.5h5M109.5 791.0v5M131 793.5h7M134.5 790.0v7"/><circle cx="109.5" cy="793.5" r="4"/></g></svg><span class="t" style="left:4.1px;top:3.82px;font-family:'Liberation Sans',sans-serif;font-size:9.2px;color:#fff">Symbols</span><span class="t" style="left:43.7px;top:3.82px;font-family:'Liberation Sans',sans-serif;font-size:9.2px;color:#fff">-CG</span><span class="t" style="left:69.3px;top:3.82px;font-family:'Liberation Sans',sans-serif;font-size:9.2px;color:#fff">-IC</span><span class="t" style="left:89.8px;top:3.82px;font-family:'Liberation Sans',sans-serif;font-size:9.2px;color:#fff">+CG</span><span class="t" style="left:115.0px;top:3.82px;font-family:'Liberation Sans',sans-serif;font-size:9.2px;color:#fff">+IC</span><span class="t" style="left:144.0px;top:3.82px;font-family:'Liberation Sans',sans-serif;font-size:9.2px;color:#fff">Strike age color codes</span><span class="t" style="left:4.1px;top:17.12px;font-family:'Liberation Sans',sans-serif;font-size:9.2px;color:#fff">Recent</span><span class="t" style="left:4.1px;top:29.92px;font-family:'Liberation Sans',sans-serif;font-size:9.2px;color:#fff">Old</span><span class="t" style="left:144.6px;top:17.12px;font-family:'Liberation Sans',sans-serif;font-size:9.2px;color:#e8d800">15+</span><span class="t" style="left:179.6px;top:17.12px;font-family:'Liberation Sans',sans-serif;font-size:9.2px;color:#e8a800">30+</span><span class="t" style="left:213.9px;top:17.12px;font-family:'Liberation Sans',sans-serif;font-size:9.2px;color:#e89000">45+</span><span class="t" style="left:144.6px;top:29.92px;font-family:'Liberation Sans',sans-serif;font-size:9.2px;color:#e07800">60+</span><span class="t" style="left:179.6px;top:29.92px;font-family:'Liberation Sans',sans-serif;font-size:9.2px;color:#e06000">75+</span><span class="t" style="left:213.9px;top:29.92px;font-family:'Liberation Sans',sans-serif;font-size:9.2px;color:#e83000">90+</span></div>
<div id="copy"><span class="t" style="left:4.4px;top:1.8px;font-size:9.5px;color:#fff;font-family:'Liberation Sans',sans-serif">©2005 Astrogenic Systems</span></div>
<div class="b" style="left:812px;top:8px;width:318px;height:318px;background:transparent;border:1px solid #bdbdbd;border-radius:4.5px;"></div>
<div class="b" style="left:812px;top:333px;width:318px;height:113px;background:transparent;border:1px solid #bdbdbd;border-radius:4.5px;"></div>
<div class="b" style="left:812px;top:453px;width:318px;height:348px;background:transparent;border:1px solid #bdbdbd;border-radius:4.5px;"></div>
<div class="b btn" style="left:819px;top:16px;width:56px;height:16px;background:#5a0000;border:1px solid #c8c8c8;font-size:12px;color:#d8d0d0;line-height:18.2px;font-weight:bold;">STRIKE</div>
<div class="b btn" style="left:883px;top:16px;width:56px;height:16px;background:#333;border:1px solid #a0a0a0;font-size:12px;color:#c8c8c8;line-height:18.2px;font-weight:bold;">NOISE</div>
<div class="b" style="left:994px;top:16px;width:126px;height:16px;background:#333;border:1px solid #c0c0c0;"></div>
<span class="t" style="top:20.35px;font-size:12px;color:#fff;font-weight:bold;left:998.5px;">Bng 170°</span>
<span class="t" style="top:20.35px;font-size:12px;color:#00e000;font-weight:bold;left:1076.5px;">138mi</span>
<div class="b btn" style="left:821px;top:64px;width:80px;height:14px;background:#5e5e5e;border:1px solid #b8b8b8;font-size:11.7px;color:#fff;line-height:14px;">Strikes/min</div>
<div class="b btn" style="left:931px;top:64px;width:80px;height:14px;background:#5e5e5e;border:1px solid #b8b8b8;font-size:11.7px;color:#fff;line-height:14px;">Close/min</div>
<div class="b btn" style="left:1041px;top:64px;width:80px;height:14px;background:#5e5e5e;border:1px solid #b8b8b8;font-size:11.7px;color:#fff;line-height:14px;">Noises/min</div>
<span class="t" style="top:89.68px;font-size:26.5px;color:#fff;font-weight:bold;right:235.5px;">6</span>
<span class="t" style="top:89.68px;font-size:26.5px;color:#fff;font-weight:bold;right:125.5px;">0</span>
<span class="t" style="top:89.68px;font-size:26.5px;color:#c0c0c0;font-weight:bold;right:15.5px;">0</span>
<span class="t" style="top:133.11px;font-size:12.75px;color:#fff;right:235.5px;">Total Strikes</span>
<span class="t" style="top:133.11px;font-size:12.75px;color:#fff;right:125.5px;">Total Close</span>
<span class="t" style="top:133.11px;font-size:12.75px;color:#c0c0c0;right:15.5px;">Total Noises</span>
<span class="t" style="top:151.33px;font-size:12.5px;color:#fff;right:235.5px;">2146</span>
<span class="t" style="top:151.33px;font-size:12.5px;color:#fff;right:125.5px;">1</span>
<span class="t" style="top:151.33px;font-size:12.5px;color:#c0c0c0;right:15.5px;">138</span>
<span class="t" style="top:205.53px;font-size:12.5px;color:#b8b8b8;left:821px;">Lightning type distribution</span>
<div class="hr" style="left:821px;top:217px;width:302px"></div>
<span class="t" style="top:227.08px;font-size:12.2px;color:#fff;font-weight:bold;font-family:'DejaVu Sans Condensed','DejaVu Sans','Liberation Sans',sans-serif;left:821px;">Cloud-ground</span>
<span class="t" style="top:226.83px;font-size:12.5px;color:#fff;left:913px;">+</span>
<div class="b" style="left:925px;top:227px;width:49px;height:9px;border:1px solid #9a9a9a;border-radius:2px;background:#000"><div style="position:absolute;left:1px;top:1px;height:7px;width:15px;background:#ff0000"></div></div>
<span class="t" style="top:227.25px;font-size:12px;color:#fff;font-weight:bold;left:979.5px;">32%</span>
<span class="t" style="top:227.08px;font-size:12.2px;color:#fff;font-weight:bold;left:1015.5px;">–</span>
<div class="b" style="left:1028px;top:227px;width:49px;height:9px;border:1px solid #9a9a9a;border-radius:2px;background:#000"><div style="position:absolute;left:1px;top:1px;height:7px;width:29px;background:#99ccff"></div></div>
<span class="t" style="top:227.25px;font-size:12px;color:#fff;font-weight:bold;left:1082.5px;">59%</span>
<span class="t" style="top:251.28px;font-size:12.2px;color:#c0c0c0;font-weight:bold;font-family:'DejaVu Sans Condensed','DejaVu Sans','Liberation Sans',sans-serif;left:821px;">Count</span>
<span class="t" style="top:251.28px;font-size:12.2px;color:#fff;font-weight:bold;font-family:'DejaVu Sans Condensed','DejaVu Sans','Liberation Sans',sans-serif;letter-spacing:0.35px;left:925.3px;">688</span>
<span class="t" style="top:251.28px;font-size:12.2px;color:#fff;font-weight:bold;font-family:'DejaVu Sans Condensed','DejaVu Sans','Liberation Sans',sans-serif;letter-spacing:0.35px;left:1028px;">1266</span>
<span class="t" style="top:280.58px;font-size:12.2px;color:#fff;font-weight:bold;font-family:'DejaVu Sans Condensed','DejaVu Sans','Liberation Sans',sans-serif;left:821px;">Intracloud</span>
<span class="t" style="top:280.32px;font-size:12.5px;color:#fff;left:913px;">+</span>
<div class="b" style="left:925px;top:281px;width:49px;height:9px;border:1px solid #9a9a9a;border-radius:2px;background:#000"><div style="position:absolute;left:1px;top:1px;height:7px;width:2px;background:#ff69b4"></div></div>
<span class="t" style="top:280.75px;font-size:12px;color:#fff;font-weight:bold;left:979.5px;">4%</span>
<span class="t" style="top:280.58px;font-size:12.2px;color:#fff;font-weight:bold;left:1015.5px;">–</span>
<div class="b" style="left:1028px;top:281px;width:49px;height:9px;border:1px solid #9a9a9a;border-radius:2px;background:#000"><div style="position:absolute;left:1px;top:1px;height:7px;width:3px;background:#00e000"></div></div>
<span class="t" style="top:280.75px;font-size:12px;color:#fff;font-weight:bold;left:1082.5px;">5%</span>
<span class="t" style="top:305.18px;font-size:12.2px;color:#c0c0c0;font-weight:bold;font-family:'DejaVu Sans Condensed','DejaVu Sans','Liberation Sans',sans-serif;left:821px;">Count</span>
<span class="t" style="top:305.18px;font-size:12.2px;color:#fff;font-weight:bold;font-family:'DejaVu Sans Condensed','DejaVu Sans','Liberation Sans',sans-serif;letter-spacing:0.35px;left:925.3px;">93</span>
<span class="t" style="top:305.18px;font-size:12.2px;color:#fff;font-weight:bold;font-family:'DejaVu Sans Condensed','DejaVu Sans','Liberation Sans',sans-serif;letter-spacing:0.35px;left:1028px;">99</span>
<span class="t" style="top:339.94px;font-size:16.5px;color:#00e000;font-weight:bold;left:821px;">3/6/2026 2:15:19 PM</span>
<div class="hr" style="left:821px;top:358px;width:302px"></div>
<span class="t" style="top:378.32px;font-size:12.5px;color:#fff;left:821px;">Squelch</span>
<span class="t" style="top:378.32px;font-size:12.5px;color:#fff;left:909.4px;">0</span>
<span class="t" style="top:378.32px;font-size:12.5px;color:#fff;left:981.2px;">Upload</span>
<span class="t" style="top:378.32px;font-size:12.5px;color:#c0c0c0;left:1061.3px;">Disabled</span>
<span class="t" style="top:398.32px;font-size:12.5px;color:#fff;left:821px;">Persistence</span>
<span class="t" style="top:398.32px;font-size:12.5px;color:#fff;left:909.4px;">90 min</span>
<span class="t" style="top:398.32px;font-size:12.5px;color:#fff;left:981.2px;">Capture</span>
<span class="t" style="top:398.32px;font-size:12.5px;color:#00e000;left:1061.3px;">Active</span>
<span class="t" style="top:418.32px;font-size:12.5px;color:#fff;left:821px;">Range</span>
<span class="t" style="top:418.32px;font-size:12.5px;color:#fff;left:909.4px;">313 mi</span>
<span class="t" style="top:418.32px;font-size:12.5px;color:#fff;left:981.2px;">Receiver</span>
<span class="t" style="top:418.32px;font-size:12.5px;color:#00e000;left:1061.3px;">Enabled</span>
<span class="t" style="top:464.72px;font-size:12.5px;color:#c0c0c0;left:821px;">Uptime</span>
<span class="t" style="top:464.72px;font-size:12.5px;color:#fff;left:909.4px;">1274:00</span>
<span class="t" style="top:464.72px;font-size:12.5px;color:#c0c0c0;left:981.2px;">Peak time</span>
<span class="t" style="top:464.72px;font-size:12.5px;color:#c0c0c0;left:1061.3px;">Plot</span>
<span class="t" style="top:487.93px;font-size:12.5px;color:#c0c0c0;left:821px;">Peak rate</span>
<span class="t" style="top:487.93px;font-size:12.5px;color:#fff;left:909.4px;">28/min</span>
<span class="t" style="top:487.93px;font-size:12.5px;color:#fff;left:981.2px;">1:50 PM</span>
<span class="t" style="top:487.93px;font-size:12.5px;color:#fff;left:1061.3px;">Strike</span>
<span class="t" style="top:517.82px;font-size:12.5px;color:#c0c0c0;left:821px;">Trend graph</span>
<span class="t" style="top:517.82px;font-size:12.5px;color:#fff;left:909.4px;">60 min</span>
<svg id="graph" width="326" height="280" viewBox="812 530 326 280" style="position:absolute;left:812px;top:530px">
<path d="M822.1 770 L824.1 777.4 L824.4 777.4 L834.9 777.4 L836.1 770 L838.4 770 L839.6 777.4 L869 777.4 L870.8 770 L872.5 770 L873.9 777.4 L894.9 777.4 L895 777.4 L897.5 777.4 L899.5 768.7 L902 768.7 L903.7 777.4 L904.9 768.7 L907.4 768.7 L909.4 777.4 L924.3 777.4 L926.1 768.7 L928.5 768.7 L930.3 777.4 L947.2 777.4 L949.2 768.7 L951.6 768.7 L953.4 777.4 L969.8 777.4 L970 771.2 L972.5 771.2 L975 761.3 L977 753.8 L978.7 753.8 L980.4 768.7 L982.4 777.4 L999.8 777.4 L1001.8 768.7 L1004.3 763.7 L1006 753.8 L1007.3 763.7 L1009.3 777.4 L1028.4 777.4 L1030.1 768.7 L1033.4 761.3 L1035.1 768.7 L1037.1 777.4 L1040.8 777.4 L1040.7 777.4 L1041.2 777.4 L1043 769.9 L1047 769.9 L1048.7 777.4 L1051.2 777.4 L1052.9 768.7 L1054.4 761.3 L1056.1 768.7 L1057.9 777.4 L1079.8 777.4 L1081.7 766.2 L1083.5 761.3 L1086 761.3 L1087.7 777.4 L1088.7 777.4" fill="none" stroke="#00ff00" stroke-width="1" shape-rendering="crispEdges"/>
<path d="M822.1 777.4 L834.9 777.4 L836.6 770 L837.5 761.3 L839.6 761.3 L841 770 L842.8 777.4 L844.5 770 L847.1 770 L848.9 777.4 L874.3 777.4 L876 770 L879.5 770 L880.4 777.4 L882.1 770 L883.9 770 L885.1 777.4 L885.4 777.4 L887.4 770 L890.9 770 L892.1 777.4 L894.9 777.4 L895 777.4 L895.5 777.4 L897.5 768.7 L900 768.7 L902 777.4 L914.1 777.4 L916.1 768.7 L917.9 761.3 L919.8 761.3 L921.8 768.7 L924.8 768.7 L926.8 777.4 L927.8 777.4 L929.8 768.7 L932.3 768.7 L934.3 777.4 L935.7 777.4 L937.7 768.7 L941 768.7 L942.7 777.4 L954.6 777.4 L955.1 777.4 L957.1 768.7 L959.1 761.3 L960.8 768.7 L962.8 777.4 L963.3 777.4 L969.8 777.4 L970 777.4 L972 768.7 L975 768.7 L977 777.4 L988.6 777.4 L989.1 777.4 L991.1 763.7 L992.9 753.8 L994.3 763.7 L996.3 777.4 L996.8 777.4 L1003.5 777.4 L1004 777.4 L1006 758.8 L1008.5 738.9 L1009.8 743.9 L1012.2 763.7 L1014.2 777.4 L1014.7 777.4 L1027.1 777.4 L1027.6 777.4 L1029.6 771.2 L1032.1 771.2 L1034.1 777.4 L1040.8 777.4 L1040.7 777.4 L1052.4 777.4 L1054.4 769.9 L1056.9 769.9 L1058.6 777.4 L1069.3 777.4 L1071.3 768.7 L1072.8 761.3 L1075.3 761.3 L1076.8 771.2 L1079.3 771.2 L1081 777.4 L1088.7 777.4" fill="none" stroke="#ff69b4" stroke-width="1" shape-rendering="crispEdges"/>
<path d="M822.1 754.3 L823.9 763 L825.3 745.5 L826.7 761.3 L828.8 777 L831.4 770 L833.1 763 L835.4 770 L837.5 761.3 L839.3 745.5 L841.4 730.7 L842.8 745.5 L844.5 761.3 L847.1 761.3 L849.8 754.3 L852.4 754.3 L854.1 761.3 L855.9 777 L857.6 754.3 L859.9 738.5 L862 741.2 L863.8 747.3 L865.9 761.3 L867.3 754.3 L869 770 L870.8 763 L872.5 777 L883 777 L885.6 763 L887.4 754.3 L889.1 761.3 L891.4 763 L892.6 777 L894.9 777 L895 777.4 L900 777.4 L903.7 763.7 L906.2 746.3 L908.7 746.3 L910.4 758.8 L911.9 746.3 L913.9 746.3 L916.1 763.7 L918.6 771.2 L922.3 763.7 L924.8 753.8 L927.3 738.9 L929.8 729 L931.8 721.5 L933.5 738.9 L936 763.7 L938.5 743.9 L941 729 L943.4 724 L945.9 721.5 L948.4 711.6 L950.2 729 L952.1 753.8 L954.6 777.4 L957.1 763.7 L959.1 748.8 L960.8 738.9 L962.6 738.9 L964.6 758.8 L967 768.7 L969.8 763.7 L970 763.7 L972.5 753.8 L975 748.8 L977.5 746.3 L979.9 746.3 L982.4 768.7 L984.4 758.8 L986.9 738.9 L989.4 738.9 L991.9 748.8 L993.6 763.7 L996.1 777.4 L1001.1 777.4 L1003.5 758.8 L1006 753.8 L1008.5 748.8 L1011 743.9 L1013.5 753.8 L1015.2 758.8 L1017.7 743.9 L1019.7 736.4 L1022.2 736.4 L1024.2 753.8 L1026.6 773.7 L1029.6 768.7 L1032.1 763.7 L1034.6 763.7 L1037.1 753.8 L1039.6 733.9 L1040.8 729 L1040.7 731.4 L1042 722.7 L1043.7 738.9 L1045.5 753.8 L1047.5 738.9 L1049.4 730.2 L1051.2 730.2 L1052.9 743.9 L1054.9 738.9 L1056.9 748.8 L1058.6 763.7 L1060.4 777.4 L1062.4 777.4 L1064.3 763.7 L1066.1 753.8 L1067.8 768.7 L1069.8 777.4 L1071.8 763.7 L1074.3 761.3 L1076.8 768.7 L1078.5 761.3 L1080.2 753.8 L1081.7 761.3 L1083.5 768.7 L1085.2 768.7 L1087.2 777.4 L1088.7 777.4" fill="none" stroke="#ff0000" stroke-width="1" shape-rendering="crispEdges"/>
<path d="M822.1 738.5 L823.5 752.5 L825.3 761.3 L827 754.3 L829.6 754.3 L830.9 761.3 L832.6 745.5 L834 756 L835.8 745.5 L837.5 740.3 L839.6 738.5 L841.9 745.5 L843.6 754.3 L846.3 747.3 L848 747.3 L850.1 761.3 L852.4 770 L855 770 L856.8 761.3 L858.5 745.5 L860.6 754.3 L862.9 777 L865.2 761.3 L866.9 747.3 L869 754.3 L871.1 761.3 L873.4 770 L875.7 754.3 L877.8 745.5 L879.5 742 L881.3 761.3 L883.4 770 L885.6 754.3 L887.4 738.5 L889.1 752.5 L890.9 745.5 L892.6 738.5 L894.4 752.5 L895 751.3 L897.5 733.9 L900 724 L902.5 729 L904.9 714 L907.4 699.1 L909.4 719 L911.1 738.9 L912.9 719 L914.9 696.7 L916.9 684.2 L918.6 674.3 L921.1 699.1 L923.6 704.1 L926.1 714 L928.5 724 L931 699.1 L932.8 719 L934.8 758.8 L936.7 719 L938.5 704.1 L940.2 738.9 L942.2 758.8 L944.2 729 L946.7 699.1 L948.4 689.2 L950.2 684.2 L952.1 719 L954.1 753.8 L956.1 714 L958.4 664.4 L960.1 644.5 L962.1 637 L964.1 674.3 L966.6 699.1 L969 709.1 L969.8 711.6 L970 709.1 L972 719 L973.7 684.2 L975.5 654.4 L977.5 628.3 L979.4 649.4 L981.2 689.2 L982.9 719 L984.4 738.9 L986.1 709.1 L987.9 684.2 L989.9 704.1 L991.9 733.9 L993.6 743.9 L995.3 729 L997.3 738.9 L999.3 724 L1001.1 738.9 L1002.8 729 L1004.8 709.1 L1007.3 691.7 L1009.3 704.1 L1011 729 L1012.7 743.9 L1014.7 753.8 L1017.2 738.9 L1019.7 733.9 L1022.2 729 L1024.2 738.9 L1025.9 763.7 L1027.6 777.4 L1029.6 753.8 L1031.6 719 L1033.4 694.2 L1035.1 709.1 L1037.1 746.3 L1039.1 719 L1040.8 704.1 L1040.7 704.1 L1042 689.2 L1043.7 683 L1045.5 696.7 L1047 683 L1048.7 704.1 L1050.4 683 L1051.9 714 L1053.7 696.7 L1054.9 709.1 L1056.4 699.1 L1057.9 729 L1059.4 753.8 L1061.1 743.9 L1062.9 733.9 L1064.8 738.9 L1066.8 748.8 L1068.6 753.8 L1070.3 719 L1071.8 689.2 L1073.5 661.9 L1074.8 642 L1076.8 661.9 L1078.5 694.2 L1080.2 709.1 L1082.2 719 L1083.7 714 L1085.2 758.8 L1086.7 777.4 L1088.7 777.4" fill="none" stroke="#a8d4ff" stroke-width="1" shape-rendering="crispEdges"/>
<path d="M822.1 700 L823.5 707 L825.3 735 L827.9 745.5 L830.5 754.3 L832.6 738.5 L834 747.3 L836.6 710.5 L838.4 684.3 L840.7 692.1 L842.8 719.3 L844.5 730.7 L846.3 722.8 L848.9 722.8 L850.6 735 L853.3 749 L855.9 763 L857.6 745.5 L859.4 722.8 L861.5 722.8 L863.2 738.5 L865.5 746.4 L868.1 722.8 L870.4 722.8 L872.2 738.5 L874.3 761.3 L876.9 745.5 L879.5 730.7 L880.9 745.5 L882.7 752.5 L884.4 763 L886.5 738.5 L888.3 707 L890 731.5 L891.8 740.3 L893.5 752.5 L894.7 749 L895 751.3 L897 729 L898.7 714 L900.5 699.1 L902.5 714 L904.9 679.3 L907.4 659.4 L909.4 679.3 L911.1 696.7 L912.9 704.1 L914.9 679.3 L916.9 666.8 L918.4 651.9 L919.8 669.3 L922.3 689.2 L924.8 683 L927.3 681.7 L929.8 644.5 L931.8 654.4 L933.5 679.3 L935.2 704.1 L937.2 689.2 L939.7 683 L942.2 689.2 L943.9 681.7 L945.9 699.1 L948.4 612.2 L950.2 629.6 L952.1 684.2 L954.6 733.9 L956.1 679.3 L958.4 629.6 L960.3 589.8 L962.1 614.7 L964.1 654.4 L965.8 689.2 L968.3 699.1 L969.8 691.7 L970 689.2 L972 674.3 L973.7 654.4 L975.5 604.7 L977.5 581.1 L978.9 597.3 L980.4 597.3 L981.9 654.4 L983.7 689.2 L985.4 679.3 L987.4 651.9 L989.4 674.3 L991.1 684.2 L992.4 674.3 L994.3 709.1 L996.8 719 L999.3 709.1 L1001.1 699.1 L1002.8 709.1 L1004.8 679.3 L1006.8 642 L1008 635.8 L1009.8 666.8 L1011.7 709.1 L1013.5 731.4 L1015.2 738.9 L1017.2 731.4 L1019.2 721.5 L1020.9 699.1 L1022.7 683 L1024.7 719 L1026.6 758.8 L1027.6 771.2 L1029.1 738.9 L1030.9 689.2 L1033.4 651.9 L1035.1 679.3 L1037.1 719 L1039.1 679.3 L1040.8 659.4 L1040.7 659.4 L1042 644.5 L1043.5 637 L1045.5 651.9 L1047 644.5 L1048.7 666.8 L1049.9 654.4 L1051.4 637 L1052.9 659.4 L1054.4 644.5 L1055.7 628.3 L1056.9 661.9 L1058.4 714 L1059.9 746.3 L1061.9 743.9 L1063.6 724 L1065.3 722.7 L1066.8 722.7 L1068.3 733.9 L1069.8 714 L1071.3 684.2 L1072.8 644.5 L1074.3 619.6 L1075.5 612.2 L1076.8 649.4 L1078.5 674.3 L1080.2 686.7 L1081.7 684.2 L1082.7 704.1 L1084.2 714 L1085.7 733.9 L1087.2 736.4 L1088.7 729" fill="none" stroke="#ffffff" stroke-width="1" shape-rendering="crispEdges"/>
<path d="M822.5 777.5H1088.5V542.5M1085 777.5h7M1086 738.3h5M1085 699.1h7M1086 660.0h5M1085 620.8h7M1086 581.6h5M1085 542.4h7M822.5 775v5M866.9 775v5M911.3 775v5M955.6 775v5M1000.0 775v5M1044.4 775v5M1088.8 775v5" fill="none" stroke="#c8c8c8" stroke-width="1"/>
<g style="font-family:'Liberation Sans',sans-serif;font-size:11.6px;fill:#c8c8c8">
<text x="1092.5" y="546.5">30</text><text x="1092.5" y="625">20</text><text x="1092.5" y="703.5">10</text>
<text x="820.6" y="792.5">60</text>
<text x="864.4" y="792.5">50</text>
<text x="909.4" y="792.5">40</text>
<text x="953.6" y="792.5">30</text>
<text x="997.8" y="792.5">20</text>
<text x="1042.4" y="792.5">10</text>
<text x="1087.6" y="792.5">0</text>
<text x="1100" y="792.5">min</text>
</g></svg>
</body></html>
